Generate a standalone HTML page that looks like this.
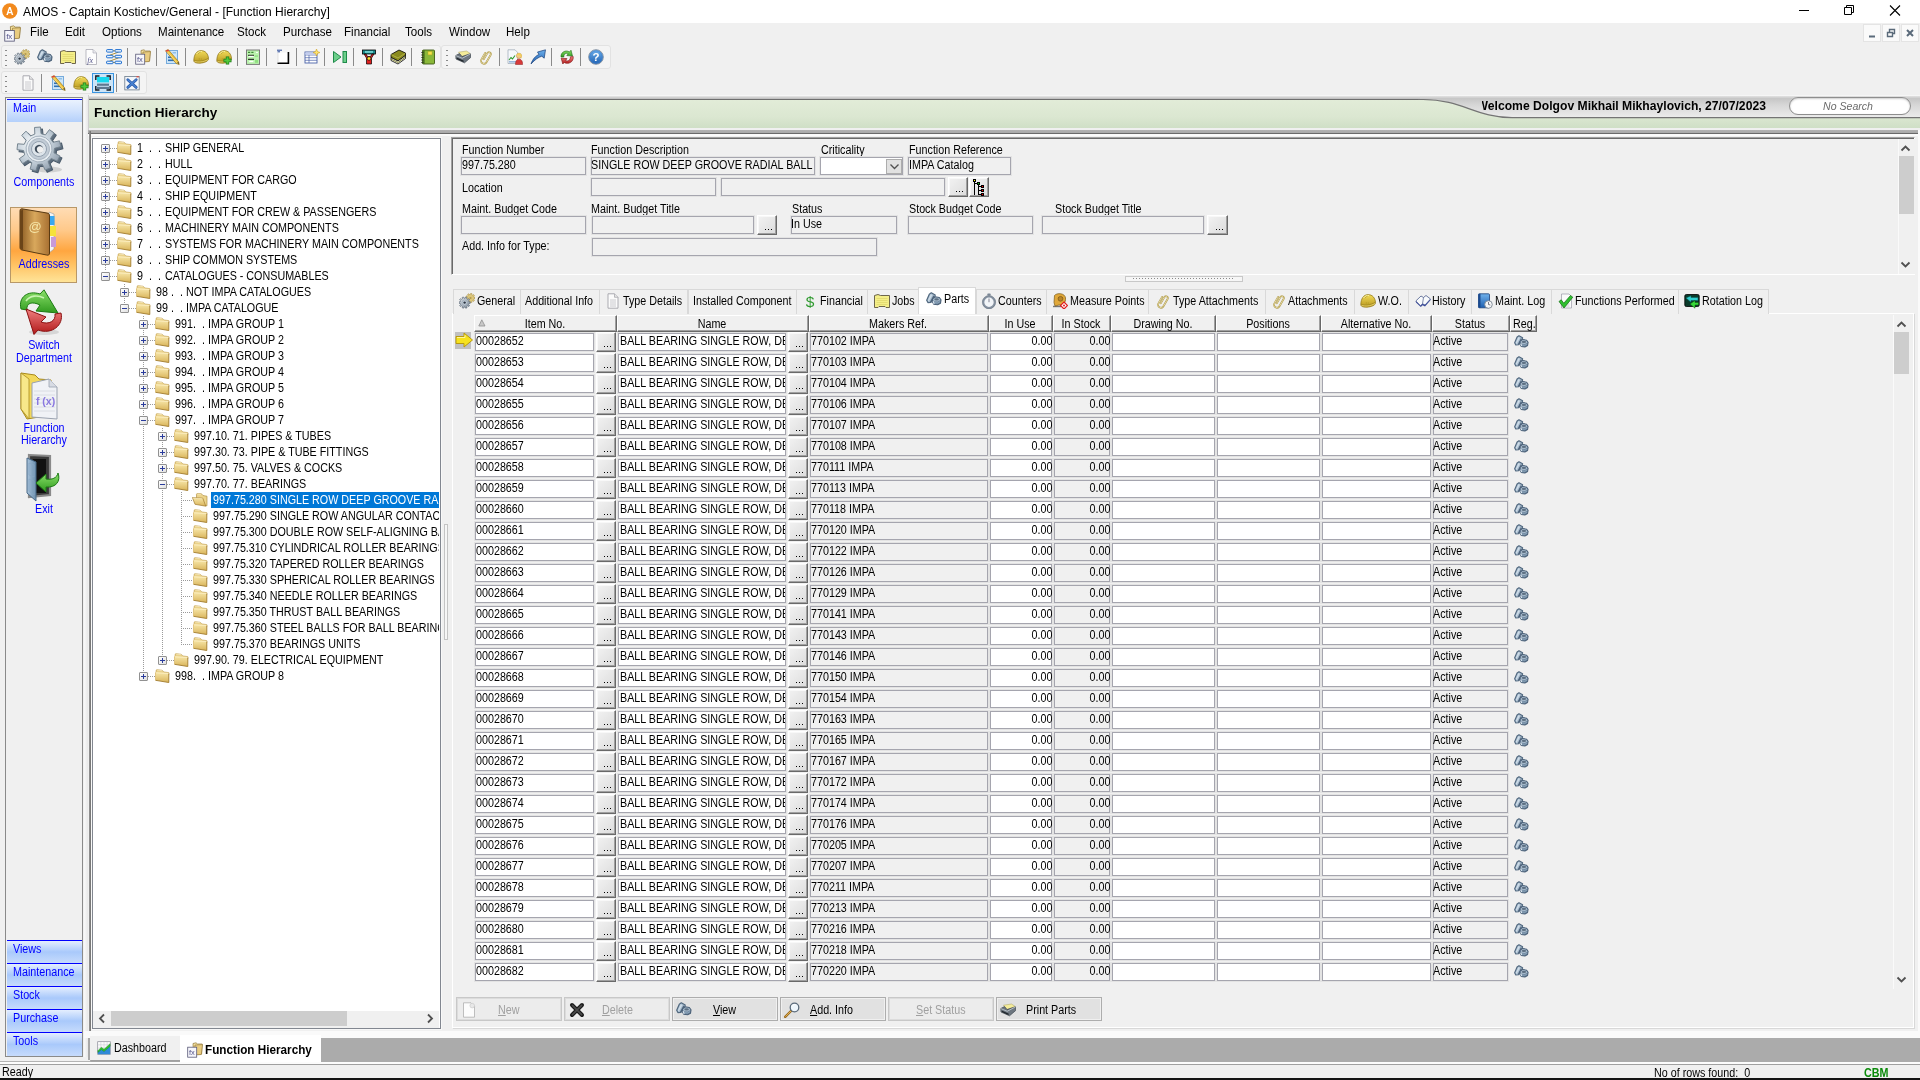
<!DOCTYPE html>
<html><head><meta charset="utf-8"><title>AMOS - Function Hierarchy</title>
<style>
html,body{margin:0;padding:0}
html{width:1920px;height:1080px;overflow:hidden;background:#f0f0f0}
body{will-change:transform;width:1920px;height:1080px;position:relative;overflow:hidden;background:#f0f0f0;font-family:"Liberation Sans",sans-serif;font-size:12px;line-height:14px;color:#000}
div,span,svg{position:absolute;box-sizing:border-box}
.n{display:block;white-space:pre;transform:scaleX(.895);transform-origin:0 0;line-height:14px;height:14px}
.n.r{transform-origin:100% 0;text-align:right}
.n.c{transform-origin:50% 0;text-align:center}
.t{display:block;white-space:pre;line-height:14px;height:14px;transform-origin:0 0}
.blue{color:#0000ff}
.fld{border:1px solid #a5a5ae;background:#f0f0f0;box-shadow:0 0 0 1px #e3e3e3}
.fldw{border:1px solid #a5a5ae;background:#fff;box-shadow:0 0 0 1px #e3e3e3}
.btn3{background:linear-gradient(135deg,#f2f2f2 0%,#dcdcdc 100%);border-top:1px solid #fff;border-left:1px solid #fff;border-right:1px solid #696969;border-bottom:1px solid #696969;box-shadow:inset -1px -1px 0 #a0a0a0,inset 1px 1px 0 #f8f8f8}
.dots{left:auto;right:2px;bottom:4px;width:9px;height:1.5px;background:linear-gradient(90deg,#000 0 1px,transparent 1px 3px,#000 3px 4px,transparent 4px 6px,#000 6px 7px,transparent 7px)}
.hdr{background:#f0f0f0;border-top:1px solid #fff;border-left:1px solid #fff;border-right:1px solid #696969;border-bottom:1px solid #696969;box-shadow:inset -1px -1px 0 #a0a0a0}
.tab{border:1px solid #d9d9d9;border-bottom:none;background:#f0f0f0}
.sbbtn{background:linear-gradient(180deg,#e4eefe 0%,#a9c9fb 50%,#c6dbfc 100%);border-top:1px solid #0000ff}
.pbtn{border:1px solid #adadad;background:#e1e1e1;box-shadow:inset 0 0 0 1px #f0f0f0}
.pbtn.dis{border:1px solid #c8c8c8;background:#ececec;box-shadow:inset 0 0 0 1px #dcdcdc}
.vsep{width:1px;background:#a0a0a0;box-shadow:1px 0 0 #fff}
.tbar{border:1px solid #e2e2e2;border-radius:3px;background:#f4f4f4}
.grip{width:2px;background:repeating-linear-gradient(180deg,#8a8a8a 0 1px,transparent 1px 5px)}
.dotv{width:1px;background:repeating-linear-gradient(180deg,#9a9a9a 0 1px,transparent 1px 2px)}
.doth{height:1px;background:repeating-linear-gradient(90deg,#9a9a9a 0 1px,transparent 1px 2px)}
.pm{width:9px;height:9px;border:1px solid #919191;background:linear-gradient(135deg,#fff,#e0e0e0);border-radius:1px}
.pm:before{content:"";position:absolute;left:1px;top:3px;width:5px;height:1px;background:#2a3c9c}
.pm.plus:after{content:"";position:absolute;left:3px;top:1px;width:1px;height:5px;background:#2a3c9c}

</style></head>
<body>
<svg width="0" height="0" style="position:absolute"><defs>
<linearGradient id="gFold" x1="0" y1="0" x2="0" y2="1"><stop offset="0" stop-color="#f7e6a8"/><stop offset="1" stop-color="#d9b45a"/></linearGradient>
<linearGradient id="gHelm" x1="0" y1="0" x2="0" y2="1"><stop offset="0" stop-color="#f2dc5a"/><stop offset="1" stop-color="#b8961e"/></linearGradient>
<linearGradient id="gNut" x1="0" y1="0" x2="1" y2="1"><stop offset="0" stop-color="#b9c7d6"/><stop offset="1" stop-color="#5f7386"/></linearGradient>
<linearGradient id="gGear" x1="0" y1="0" x2="1" y2="1"><stop offset="0" stop-color="#e4e9ee"/><stop offset="1" stop-color="#7d8b99"/></linearGradient>
<linearGradient id="gBlue" x1="0" y1="0" x2="0" y2="1"><stop offset="0" stop-color="#6fb1ec"/><stop offset="1" stop-color="#1e5fb0"/></linearGradient>
<linearGradient id="gGreen" x1="0" y1="0" x2="0" y2="1"><stop offset="0" stop-color="#8be06a"/><stop offset="1" stop-color="#2f9a1e"/></linearGradient>
<linearGradient id="gRed" x1="0" y1="0" x2="0" y2="1"><stop offset="0" stop-color="#f08080"/><stop offset="1" stop-color="#b01818"/></linearGradient>
<linearGradient id="gBook" x1="0" y1="0" x2="1" y2="0"><stop offset="0" stop-color="#8a5a22"/><stop offset="0.5" stop-color="#d9a85c"/><stop offset="1" stop-color="#a87032"/></linearGradient>
<linearGradient id="gDoor" x1="0" y1="0" x2="1" y2="0"><stop offset="0" stop-color="#a9c4dc"/><stop offset="1" stop-color="#6b8eac"/></linearGradient>
<radialGradient id="gGearB" cx="0.4" cy="0.35" r="0.7"><stop offset="0" stop-color="#fafcfd"/><stop offset="0.6" stop-color="#c2ced8"/><stop offset="1" stop-color="#8e9cab"/></radialGradient>
</defs></svg>
<div class="" style="left:0.0px;top:0.0px;width:1920.0px;height:23.0px;background:#fff"></div>
<svg style="left:2px;top:2px" width="18" height="18" viewBox="0 0 18 18"><circle cx="7.800" cy="9" r="7.700" fill="#f28a1e"/><path d="M4.300 13 L7 5 H8.600 L11.300 13 H9.700 L9.200 11.300 H6.400 L5.900 13Z M6.800 10 H8.800 L7.800 6.900Z" fill="#fff"/></svg>
<span class="t" style="left:23px;top:5px;font-size:12px;transform:scaleX(1.0);color:#000">AMOS - Captain Kostichev/General - [Function Hierarchy]</span>
<svg style="left:1780px;top:0" width="140" height="23" viewBox="0 0 140 23"><path d="M19 10.5 H29" stroke="#000" stroke-width="1"/><path d="M64.5 7.5 H71.5 V14.5 H64.5Z M66.5 7.5 V5.5 H73.5 V12.5 H71.5" fill="none" stroke="#000" stroke-width="1"/><path d="M110 5.5 L120 15.5 M120 5.5 L110 15.5" stroke="#000" stroke-width="1.1"/></svg>
<div class="" style="left:0.0px;top:23.0px;width:1920.0px;height:21.0px;background:#f0f0f0"></div>
<svg style="left:4.0px;top:24.5px" width="17" height="17" viewBox="0 0 16 16"><path d="M6 1.5 L9 .8 L10.5 2 L15.2 2 L14.6 12 L6.5 13Z" fill="url(#gFold)" stroke="#8e7436" stroke-width=".7"/><path d="M8 3 L15.5 2.6 L14.3 12.5 L7.5 13Z" fill="#e9cc80" stroke="#8e7436" stroke-width=".6"/><rect x=".7" y="5.2" width="9" height="10" fill="#f6f6fb" stroke="#5a5a78" stroke-width=".8"/><text x="2" y="13.3" font-family="Liberation Sans" font-size="7.5" fill="#55558a">fx</text></svg>
<span class="t" style="left:30.3px;top:25px;font-size:12px;transform:scaleX(.965);color:#000">File</span>
<span class="t" style="left:65.3px;top:25px;font-size:12px;transform:scaleX(.965);color:#000">Edit</span>
<span class="t" style="left:101.5px;top:25px;font-size:12px;transform:scaleX(.965);color:#000">Options</span>
<span class="t" style="left:157.5px;top:25px;font-size:12px;transform:scaleX(.965);color:#000">Maintenance</span>
<span class="t" style="left:236.8px;top:25px;font-size:12px;transform:scaleX(.965);color:#000">Stock</span>
<span class="t" style="left:283px;top:25px;font-size:12px;transform:scaleX(.965);color:#000">Purchase</span>
<span class="t" style="left:344px;top:25px;font-size:12px;transform:scaleX(.965);color:#000">Financial</span>
<span class="t" style="left:405px;top:25px;font-size:12px;transform:scaleX(.965);color:#000">Tools</span>
<span class="t" style="left:448.5px;top:25px;font-size:12px;transform:scaleX(.965);color:#000">Window</span>
<span class="t" style="left:506px;top:25px;font-size:12px;transform:scaleX(.965);color:#000">Help</span>
<svg style="left:1861.200px;top:24px" width="58" height="18" viewBox="0 0 58 18"><g fill="#fafafa" stroke="#e4e4e4"><rect x="2.5" y=".5" width="17" height="17"/><rect x="21.500" y=".5" width="17" height="17"/><rect x="40.5" y=".5" width="17" height="17"/></g><path d="M8 12.5 H14" stroke="#5a6a7a" stroke-width="2"/><path d="M26.500 8.500 H31.500 V12.500 H26.500Z M28.500 8 V5.500 H33.500 V9.500 H31.500" fill="none" stroke="#5a6a7a" stroke-width="1.4"/><path d="M46 6 L52 12 M52 6 L46 12" stroke="#5a6a7a" stroke-width="2"/></svg>
<div class="tbar" style="left:1.0px;top:44.5px;width:440.0px;height:24.5px;"></div>
<div class="tbar" style="left:441.0px;top:44.5px;width:170.0px;height:24.5px;"></div>
<div class="tbar" style="left:1.0px;top:70.5px;width:146.0px;height:23.5px;"></div>
<div class="grip" style="left:4.5px;top:50.0px;width:2.0px;height:17.0px;"></div>
<div class="grip" style="left:446.0px;top:50.0px;width:2.0px;height:17.0px;"></div>
<div class="grip" style="left:4.5px;top:75.5px;width:2.0px;height:17.0px;"></div>
<svg style="left:14.0px;top:49.0px" width="16" height="16" viewBox="0 0 16 16"><path d="M15.02 4.25 L16.06 4.36 L16.06 5.64 L15.02 5.75 L14.68 6.69 L15.40 7.44 L14.58 8.42 L13.72 7.84 L12.85 8.34 L12.92 9.37 L11.66 9.60 L11.37 8.60 L10.39 8.42 L9.78 9.27 L8.67 8.62 L9.09 7.68 L8.45 6.91 L7.44 7.16 L7.00 5.96 L7.94 5.50 L7.94 4.50 L7.00 4.04 L7.44 2.84 L8.45 3.09 L9.09 2.32 L8.67 1.38 L9.78 0.73 L10.39 1.58 L11.37 1.40 L11.66 0.40 L12.92 0.63 L12.85 1.66 L13.72 2.16 L14.58 1.58 L15.40 2.56 L14.68 3.31Z" fill="#dcc67a" stroke="#a89048" stroke-width=".6" stroke-linejoin="round"/><circle cx="11.500" cy="5" r="1.1" fill="#b49a4c"/><path d="M9.92 8.78 L11.26 8.89 L11.26 10.31 L9.92 10.42 L9.58 11.47 L10.59 12.35 L9.76 13.50 L8.61 12.81 L7.72 13.46 L8.03 14.76 L6.67 15.20 L6.15 13.97 L5.05 13.97 L4.53 15.20 L3.17 14.76 L3.48 13.46 L2.59 12.81 L1.44 13.50 L0.61 12.35 L1.62 11.47 L1.28 10.42 L-0.06 10.31 L-0.06 8.89 L1.28 8.78 L1.62 7.73 L0.61 6.85 L1.44 5.70 L2.59 6.39 L3.48 5.74 L3.17 4.44 L4.53 4.00 L5.05 5.23 L6.15 5.23 L6.67 4.00 L8.03 4.44 L7.72 5.74 L8.61 6.39 L9.76 5.70 L10.59 6.85 L9.58 7.73Z" fill="url(#gGear)" stroke="#5e6c7a" stroke-width=".7" stroke-linejoin="round"/><circle cx="5.600" cy="9.600" r="2.600" fill="#c4ced8" stroke="#8896a4" stroke-width=".5"/><circle cx="5.600" cy="9.600" r="1.200" fill="#2a3440"/></svg>
<svg style="left:37.0px;top:49.0px" width="16" height="16" viewBox="0 0 16 16"><g stroke-linejoin="round"><path d="M5.300 .8 L9.200 3 L8.600 5.600 L4.900 10.400 L1.900 10.600 L.7 8.200 L3.300 2.200Z" fill="#a9bdce" stroke="#51687f" stroke-width="1.2"/><path d="M4.800 2 L2 8.300 L2.600 9.600 L6.300 3.200Z" fill="#cfdde9"/><path d="M7.500 3.200 L8.600 5.600 L4.900 10.400 L4 9.800Z" fill="#4e647c"/><path d="M6.500 7 L9.200 4.900 L13.300 5.500 L15 7.900 L14.500 11.200 L11.600 12.800 L7.800 12.200 L6.300 9.800Z" fill="#6f879f" stroke="#4a6078" stroke-width="1.1"/><path d="M6.900 7.300 L9.300 5.400 L13 6 L14.400 8 L11.600 9.600 L8 9.300Z" fill="#a9bccd"/><ellipse cx="10.600" cy="7.400" rx="2.300" ry="1.150" fill="#5d7083"/><path d="M7.200 9.200 L8.200 11.800" stroke="#dbe6ef" stroke-width="1.300"/><path d="M8.600 10.600 L11.500 11 L14 9.600" stroke="#90a8be" stroke-width=".9" fill="none"/></g></svg>
<svg style="left:60.0px;top:49.0px" width="16" height="16" viewBox="0 0 16 16"><path d="M.5 2.5 L4 1.5 L6.5 2.5 L15.5 2.5 L15.5 14.5 L12 14.5 L11 13.5 L5 13.5 L4 14.5 L.5 14.5Z" fill="#f4ee88" stroke="#5e5640" stroke-width=".9"/><path d="M2.5 5.5H13.5M2.5 7.5H13.5M2.5 9.5H13.5M2.5 11.5H13.5" stroke="#dcd468" stroke-width=".7"/></svg>
<svg style="left:83.0px;top:49.0px" width="16" height="16" viewBox="0 0 16 16"><path d="M3 .5 H10 L13.5 4 V15.5 H3Z" fill="#fdfdfd" stroke="#a9a9b4" stroke-width=".8"/><path d="M10 .5 V4 H13.5" fill="#e8e8ee" stroke="#a9a9b4" stroke-width=".6"/><text x="4.2" y="13.5" font-family="Liberation Serif" font-size="8" font-style="italic" fill="#55558a">fx</text></svg>
<svg style="left:106.0px;top:49.0px" width="16" height="16" viewBox="0 0 16 16"><path d="M7 1.8H9.100M7 7.600H9.100M7 13.500H9.100M12.500 3.100 L3.500 6.300M12.500 8.900 L3.500 12.200" stroke="#a88420" stroke-width=".9" fill="none"/><g fill="#eaf4fe" stroke="#1f6fd0" stroke-width="1"><rect x=".6" y=".6" width="6.400" height="2.500" rx=".7"/><rect x="9.100" y=".6" width="6.400" height="2.500" rx=".7"/><rect x=".6" y="6.300" width="6.400" height="2.500" rx=".7"/><rect x="9.100" y="6.300" width="6.400" height="2.500" rx=".7"/><rect x=".6" y="12.200" width="6.400" height="2.500" rx=".7"/><rect x="9.100" y="12.200" width="6.400" height="2.500" rx=".7"/></g></svg>
<div class="" style="left:127.0px;top:48.0px;width:1.0px;height:18.0px;background:#8a8a8a"></div>
<svg style="left:135.0px;top:49.0px" width="16" height="16" viewBox="0 0 16 16"><path d="M6 1.5 L9 .8 L10.5 2 L15.2 2 L14.6 12 L6.5 13Z" fill="url(#gFold)" stroke="#8e7436" stroke-width=".7"/><path d="M8 3 L15.5 2.6 L14.3 12.5 L7.5 13Z" fill="#e9cc80" stroke="#8e7436" stroke-width=".6"/><rect x=".7" y="5.2" width="9" height="10" fill="#f6f6fb" stroke="#5a5a78" stroke-width=".8"/><text x="2" y="13.3" font-family="Liberation Sans" font-size="7.5" fill="#55558a">fx</text></svg>
<div class="" style="left:156.0px;top:48.0px;width:1.0px;height:18.0px;background:#8a8a8a"></div>
<svg style="left:164.0px;top:49.0px" width="16" height="16" viewBox="0 0 16 16"><rect x="2.5" y="1.5" width="11" height="13" fill="#cfe6f8" stroke="#5b9bd5" stroke-width=".8"/><rect x="4" y="7.5" width="5" height="1.6" fill="#2f6fb0"/><rect x="4" y="10.5" width="7" height="1.6" fill="#2f6fb0"/><rect x="8.5" y="3" width="3.5" height="1.5" fill="#8fc0e8"/><path d="M1.5 1.8 L4.2 .6 L14.5 12.6 L15.2 15.5 L12.2 14.5Z" fill="#f0c43c" stroke="#8a6a18" stroke-width=".6"/><path d="M1.5 1.8 L4.2 .6 L5.2 1.8 L2.5 3Z" fill="#e0403a"/><path d="M13.2 13.6 L15.2 15.5 L14.3 12.8Z" fill="#3a3a3a"/><path d="M3 2.4 L13 13.8" stroke="#fbe28a" stroke-width=".8"/></svg>
<div class="" style="left:185.0px;top:48.0px;width:1.0px;height:18.0px;background:#8a8a8a"></div>
<svg style="left:193.0px;top:49.0px" width="16" height="16" viewBox="0 0 16 16"><path d="M.8 11.800 C.8 6 3.500 1.600 8 1.600 C12.500 1.600 15.200 5 15.500 9.500 C15.600 11.500 13.500 13.200 8.500 14 C4 14.600 .8 13.600 .8 11.800Z" fill="url(#gHelm)" stroke="#8a7014" stroke-width=".7"/><path d="M1.200 11.300 C4.500 12.800 10.500 12.200 15.300 9.300" stroke="#97801c" stroke-width=".7" fill="none"/><path d="M1.500 12.300 C5 13.600 10.500 13.200 15 10.600" stroke="#f6ea8c" stroke-width=".6" fill="none"/><path d="M4.800 4.800 L8 2.400" stroke="#a8901e" stroke-width=".7"/><path d="M3.500 5 C5 3 7 2.300 9 2.400" stroke="#fbf3a8" stroke-width=".9" fill="none"/><path d="M6.300 9 V11.800 M8.300 9.200 V12" stroke="#b09a24" stroke-width=".6"/></svg>
<svg style="left:216.0px;top:49.0px" width="16" height="16" viewBox="0 0 16 16"><path d="M.8 11.800 C.8 6 3.500 1.600 8 1.600 C12.500 1.600 15.200 5 15.500 9.500 C15.600 11.500 13.500 13.200 8.500 14 C4 14.600 .8 13.600 .8 11.800Z" fill="url(#gHelm)" stroke="#8a7014" stroke-width=".7"/><path d="M1.200 11.300 C4.500 12.800 10.500 12.200 15.300 9.300" stroke="#97801c" stroke-width=".7" fill="none"/><path d="M1.500 12.300 C5 13.600 10.500 13.200 15 10.600" stroke="#f6ea8c" stroke-width=".6" fill="none"/><path d="M4.800 4.800 L8 2.400" stroke="#a8901e" stroke-width=".7"/><path d="M3.500 5 C5 3 7 2.300 9 2.400" stroke="#fbf3a8" stroke-width=".9" fill="none"/><path d="M6.300 9 V11.800 M8.300 9.200 V12" stroke="#b09a24" stroke-width=".6"/><path d="M11.5 7.5V15.5M7.5 11.5H15.5" stroke="#1d7a16" stroke-width="3.4"/><path d="M11.5 8.2V14.8M8.2 11.5H14.8" stroke="#53c93c" stroke-width="2"/></svg>
<div class="" style="left:237.0px;top:48.0px;width:1.0px;height:18.0px;background:#8a8a8a"></div>
<svg style="left:245.0px;top:49.0px" width="16" height="16" viewBox="0 0 16 16"><rect x="1.500" y="1" width="13" height="14.400" fill="#bbf3ae" stroke="#7a7a7a" stroke-width="1"/><rect x="3" y="2.800" width="2.200" height="1.200" fill="#3c8a36"/><rect x="6.300" y="2.800" width="2.200" height="1.200" fill="#3c8a36"/><rect x="11" y="3" width="2" height=".9" fill="#fff"/><rect x="3" y="5.800" width="6" height="1" fill="#101010"/><rect x="3.600" y="6.800" width="5" height="1.200" fill="#fff"/><rect x="9.800" y="6.400" width="3.200" height="1.400" fill="#8fe080"/><rect x="3" y="9.800" width="6" height="1" fill="#101010"/><rect x="4.300" y="11.800" width="4" height="1.300" fill="#fff"/><rect x="10" y="10.800" width="3" height="3" fill="#8fe080"/></svg>
<div class="" style="left:266.0px;top:48.0px;width:1.0px;height:18.0px;background:#8a8a8a"></div>
<svg style="left:275.0px;top:49.0px" width="16" height="16" viewBox="0 0 16 16"><path d="M3 3.5 H13 V14 H3Z" fill="#fff"/><path d="M2.5 14.2 H13.4 V3" stroke="#000" stroke-width="1.6" fill="none"/><path d="M3 3.5V14" stroke="#d0d0d0" stroke-width=".6"/><path d="M2 1.2 H7 M2.5 2.8 H5" stroke="#2a4a9a" stroke-width="1"/></svg>
<div class="" style="left:295.5px;top:48.0px;width:1.0px;height:18.0px;background:#8a8a8a"></div>
<svg style="left:304.0px;top:49.0px" width="16" height="16" viewBox="0 0 16 16"><rect x="1" y="3" width="12" height="11" fill="#fff" stroke="#4a62a8" stroke-width=".9"/><path d="M1 6H13M1 8.7H13M1 11.3H13M5 6V14" stroke="#4a62a8" stroke-width=".7"/><rect x="1.4" y="3.4" width="11.2" height="2.4" fill="#c3cdee"/><path d="M12.5 0 L13.5 2.5 L16 3.5 L13.5 4.5 L12.5 7 L11.5 4.5 L9 3.5 L11.5 2.5Z" fill="#ffe36a" stroke="#c89a18" stroke-width=".5"/></svg>
<div class="" style="left:324.0px;top:48.0px;width:1.0px;height:18.0px;background:#8a8a8a"></div>
<svg style="left:331.5px;top:49.0px" width="16" height="16" viewBox="0 0 16 16"><path d="M1.5 2.5 L9 8 L1.5 13.5Z" fill="#6ccf8a" stroke="#1f8a4a" stroke-width="1"/><rect x="11" y="2.5" width="3.5" height="11" fill="#6ccf8a" stroke="#1f8a4a" stroke-width="1"/></svg>
<div class="" style="left:353.0px;top:48.0px;width:1.0px;height:18.0px;background:#8a8a8a"></div>
<svg style="left:361.0px;top:49.0px" width="16" height="16" viewBox="0 0 16 16"><rect x="1.5" y="1" width="13" height="4" fill="#1a8a8a" stroke="#000" stroke-width=".8"/><rect x="4" y="2.2" width="8" height="1.5" fill="#7fe0e0"/><path d="M3 5 L5.5 9 L5.5 15 L10.5 15 L10.5 9 L13 5 L11 5 L9.5 7.5 L6.5 7.5 L5 5Z" fill="#e02020" stroke="#000" stroke-width=".7"/><circle cx="8" cy="9.5" r="1.8" fill="#ffe020" stroke="#000" stroke-width=".6"/></svg>
<div class="" style="left:382.0px;top:48.0px;width:1.0px;height:18.0px;background:#8a8a8a"></div>
<svg style="left:390.0px;top:49.0px" width="16" height="16" viewBox="0 0 16 16"><path d="M1 5.5 L9 1 L15.5 4 L15.5 6.5 L8 12 L1 8.5Z" fill="#8a8a1e" stroke="#000" stroke-width=".8"/><path d="M1 8.5 L8 12 L15.5 6.5 L15.5 9.5 L8 15 L1 11.5Z" fill="#fdfdf2" stroke="#000" stroke-width=".8"/><path d="M1 10 L8 13.5 L15.5 8" stroke="#6a6a10" stroke-width=".8" fill="none"/><path d="M1 5.5 L8 9 L15.5 4" stroke="#c8c860" stroke-width=".6" fill="none"/></svg>
<div class="" style="left:411.0px;top:48.0px;width:1.0px;height:18.0px;background:#8a8a8a"></div>
<svg style="left:419.5px;top:49.0px" width="16" height="16" viewBox="0 0 16 16"><rect x="2.5" y="1" width="12" height="14" rx="1" fill="#8ab83a" stroke="#3e5a14" stroke-width=".9"/><rect x="2.5" y="1" width="2.2" height="14" fill="#4e7420"/><rect x="8" y="2.5" width="4" height="3.4" fill="#f3e24a" stroke="#b8a020" stroke-width=".4"/><path d="M1.2 3.5H3.5M1.2 6H3.5M1.2 8.5H3.5M1.2 11H3.5M1.2 13.5H3.5" stroke="#222" stroke-width=".7"/></svg>
<svg style="left:455.0px;top:49.0px" width="16" height="16" viewBox="0 0 16 16"><path d="M3.500 3.200 L11.500 2 L15.300 4.500 L7 7.600Z" fill="#f4ec9a" stroke="#a8a060" stroke-width=".5"/><path d="M.8 6.500 L4.500 4.600 L7 7.600 L15.400 4.800 L15.700 8.500 L9.500 13.800 L1 10Z" fill="#6e7780" stroke="#3e464e" stroke-width=".7" stroke-linejoin="round"/><path d="M.9 6.600 L7.200 9.300 L15.400 4.900" stroke="#c8d0d8" stroke-width=".8" fill="none"/><path d="M2 9.400 L8.600 12.400" stroke="#20262c" stroke-width="1.200"/></svg>
<svg style="left:478.0px;top:49.0px" width="16" height="16" viewBox="0 0 16 16"><g transform="rotate(30 8 8)"><path d="M7.200 11.200 V4 A1.900 1.900 0 0 1 11 4 V12.300 A2.900 2.900 0 0 1 5.200 12.300 V4.800" fill="none" stroke="#a8923e" stroke-width="1.700" stroke-linecap="round"/><path d="M7.200 11.200 V4 A1.900 1.900 0 0 1 11 4 V12.300 A2.900 2.900 0 0 1 5.200 12.300 V4.800" fill="none" stroke="#f4ecc0" stroke-width=".7" stroke-linecap="round"/></g></svg>
<div class="" style="left:499.0px;top:48.0px;width:1.0px;height:18.0px;background:#8a8a8a"></div>
<svg style="left:507.0px;top:49.0px" width="16" height="16" viewBox="0 0 16 16"><path d="M1 .8 H8 L10.5 3.3 V14.5 H1Z" fill="#f6f8fb" stroke="#9aa6b4" stroke-width=".7"/><path d="M2 11 L4 8.5 L5.5 10 L8 6.5" stroke="#2f9a2f" stroke-width="1.1" fill="none"/><rect x="2" y="12" width="7" height="1.6" fill="#9ab8dc"/><circle cx="12" cy="6.8" r="2.6" fill="#f4c88a" stroke="#b8863a" stroke-width=".5"/><path d="M9.6 6.5 C9.6 3.4 14.6 3.4 14.6 6.8 L14.8 10 L13.6 7 C12.5 6 11 6 9.6 6.5Z" fill="#f2d056"/><path d="M8.5 15.5 C8.5 11.5 10 10.2 12 10.2 C14 10.2 15.6 11.5 15.6 15.5Z" fill="#d83a3a" stroke="#8a1c1c" stroke-width=".5"/></svg>
<svg style="left:530.0px;top:49.0px" width="16" height="16" viewBox="0 0 16 16"><path d="M1 15 C3 9.5 5.5 7 9 5.5 L7.5 3 L15.5 .8 L14.2 9.2 L11.8 7.2 C8.5 8.2 5 10.5 1 15Z" fill="url(#gBlue)" stroke="#1a3f78" stroke-width=".7"/></svg>
<div class="" style="left:551.0px;top:48.0px;width:1.0px;height:18.0px;background:#8a8a8a"></div>
<svg style="left:558.5px;top:49.0px" width="16" height="16" viewBox="0 0 16 16"><path d="M2 8 C1.5 3 7 .5 10.5 3 L12 1.2 L13.5 7 L7.8 6.6 L9.2 4.8 C7 3.6 4.6 5 4.8 8Z" fill="url(#gGreen)" stroke="#1d6a14" stroke-width=".6"/><path d="M14.2 7.5 C15 13 9 16 5.2 13.4 L3.8 15 L2.2 9.2 L8 9.6 L6.6 11.4 C9 12.8 11.6 11 11.4 7.8Z" fill="url(#gRed)" stroke="#7a1010" stroke-width=".6"/></svg>
<div class="" style="left:580.0px;top:48.0px;width:1.0px;height:18.0px;background:#8a8a8a"></div>
<svg style="left:588.0px;top:49.0px" width="16" height="16" viewBox="0 0 16 16"><circle cx="8" cy="8" r="7.3" fill="url(#gBlue)" stroke="#8a96a4" stroke-width="1"/><circle cx="8" cy="8" r="6.2" fill="none" stroke="#3a7fd0" stroke-width=".6"/><text x="8" y="12.2" text-anchor="middle" font-family="Liberation Sans" font-weight="bold" font-size="11.5" fill="#fff">?</text></svg>
<div class="" style="left:92.0px;top:72.5px;width:22.0px;height:20.5px;background:#cce4f7;border:1px solid #3a94e0"></div>
<svg style="left:20.0px;top:74.5px" width="16" height="16" viewBox="0 0 16 16"><path d="M3 .8 H9.5 L13 4.3 V15.2 H3Z" fill="#fbfbfb" stroke="#a2a2a8" stroke-width=".9"/><path d="M9.5 .8 V4.3 H13" fill="#e4e4e4" stroke="#a2a2a8" stroke-width=".7"/><path d="M5 7H11M5 9H11M5 11H11M5 13H11" stroke="#c4c4c8" stroke-width=".9"/></svg>
<div class="" style="left:41.0px;top:74.0px;width:1.0px;height:18.0px;background:#8a8a8a"></div>
<svg style="left:49.5px;top:74.5px" width="16" height="16" viewBox="0 0 16 16"><rect x="2.5" y="1.5" width="11" height="13" fill="#cfe6f8" stroke="#5b9bd5" stroke-width=".8"/><rect x="4" y="7.5" width="5" height="1.6" fill="#2f6fb0"/><rect x="4" y="10.5" width="7" height="1.6" fill="#2f6fb0"/><rect x="8.5" y="3" width="3.5" height="1.5" fill="#8fc0e8"/><path d="M1.5 1.8 L4.2 .6 L14.5 12.6 L15.2 15.5 L12.2 14.5Z" fill="#f0c43c" stroke="#8a6a18" stroke-width=".6"/><path d="M1.5 1.8 L4.2 .6 L5.2 1.8 L2.5 3Z" fill="#e0403a"/><path d="M13.2 13.6 L15.2 15.5 L14.3 12.8Z" fill="#3a3a3a"/><path d="M3 2.4 L13 13.8" stroke="#fbe28a" stroke-width=".8"/></svg>
<svg style="left:72.5px;top:74.5px" width="16" height="16" viewBox="0 0 16 16"><path d="M.8 11.800 C.8 6 3.500 1.600 8 1.600 C12.500 1.600 15.200 5 15.500 9.500 C15.600 11.500 13.500 13.200 8.500 14 C4 14.600 .8 13.600 .8 11.800Z" fill="url(#gHelm)" stroke="#8a7014" stroke-width=".7"/><path d="M1.200 11.300 C4.500 12.800 10.500 12.200 15.300 9.300" stroke="#97801c" stroke-width=".7" fill="none"/><path d="M1.500 12.300 C5 13.600 10.500 13.200 15 10.600" stroke="#f6ea8c" stroke-width=".6" fill="none"/><path d="M4.800 4.800 L8 2.400" stroke="#a8901e" stroke-width=".7"/><path d="M3.500 5 C5 3 7 2.300 9 2.400" stroke="#fbf3a8" stroke-width=".9" fill="none"/><path d="M6.300 9 V11.800 M8.300 9.200 V12" stroke="#b09a24" stroke-width=".6"/><path d="M11.5 7.5V15.5M7.5 11.5H15.5" stroke="#1d7a16" stroke-width="3.4"/><path d="M11.5 8.2V14.8M8.2 11.5H14.8" stroke="#53c93c" stroke-width="2"/></svg>
<svg style="left:95.0px;top:74.5px" width="16" height="16" viewBox="0 0 16 16"><rect x="2" y="2" width="12" height="5.4" fill="#18d8ee"/><rect x="2" y="8.6" width="12" height="2.2" fill="#5e7890"/><rect x="2" y="11.8" width="12" height="2.2" fill="#5e7890"/><path d="M.8 5 V1 H4.5 M11.5 1 H15.2 V5 M15.2 11 V15 H11.5 M4.5 15 H.8 V11" stroke="#101820" stroke-width="1.4" fill="none"/></svg>
<div class="" style="left:116.0px;top:74.0px;width:1.0px;height:18.0px;background:#8a8a8a"></div>
<svg style="left:124.0px;top:74.5px" width="16" height="16" viewBox="0 0 16 16"><rect x=".8" y="1.5" width="14.4" height="13.4" fill="#f4f7fa" stroke="#6a7a8a" stroke-width=".8"/><path d="M3.8 4.8 L12.2 12.4 M12.2 4.8 L3.8 12.4" stroke="#2a5aa8" stroke-width="2.8" stroke-linecap="round"/><path d="M3.8 4.8 L12.2 12.4 M12.2 4.8 L3.8 12.4" stroke="#4a86d8" stroke-width="1.2" stroke-linecap="round"/><rect x="12.4" y="1.2" width="2.4" height="1.2" fill="#e04a3a"/></svg>
<div class="" style="left:5.0px;top:97.0px;width:78.0px;height:960.0px;border:1px solid #8a8a8a;background:#f0f0f0"></div>
<div class="sbbtn" style="left:7.0px;top:99.0px;width:75.0px;height:23.0px;background:linear-gradient(180deg,#eaf2fe 0%,#d4e4fd 45%,#b4d0fb 100%)"></div>
<span class="n" style="left:13.0px;top:101px;color:#0000ff">Main</span>
<svg style="left:15px;top:124px" width="50" height="52" viewBox="0 0 50 52"><ellipse cx="33" cy="45.500" rx="14" ry="3" fill="#b8b8b8" opacity=".55"/><g transform="rotate(-14 24 25)"><path d="M40.68 24.38 L47.30 24.54 L47.30 30.46 L40.68 30.62 L39.13 34.87 L44.10 39.24 L40.30 43.78 L35.13 39.65 L31.21 41.91 L32.20 48.45 L26.37 49.48 L25.07 42.99 L20.61 42.21 L17.16 47.86 L12.04 44.90 L15.21 39.09 L12.30 35.62 L6.03 37.74 L4.00 32.17 L10.17 29.76 L10.17 25.24 L4.00 22.83 L6.03 17.26 L12.30 19.38 L15.21 15.91 L12.04 10.10 L17.16 7.14 L20.61 12.79 L25.07 12.01 L26.37 5.52 L32.20 6.55 L31.21 13.09 L35.13 15.35 L40.30 11.22 L44.10 15.76 L39.13 20.13Z" fill="#5e6e7e" stroke="#4a5a6a" stroke-width="1" stroke-linejoin="round"/><path d="M39.18 21.88 L45.80 22.04 L45.80 27.96 L39.18 28.12 L37.63 32.37 L42.60 36.74 L38.80 41.28 L33.63 37.15 L29.71 39.41 L30.70 45.95 L24.87 46.98 L23.57 40.49 L19.11 39.71 L15.66 45.36 L10.54 42.40 L13.71 36.59 L10.80 33.12 L4.53 35.24 L2.50 29.67 L8.67 27.26 L8.67 22.74 L2.50 20.33 L4.53 14.76 L10.80 16.88 L13.71 13.41 L10.54 7.60 L15.66 4.64 L19.11 10.29 L23.57 9.51 L24.87 3.02 L30.70 4.05 L29.71 10.59 L33.63 12.85 L38.80 8.72 L42.60 13.26 L37.63 17.63Z" fill="url(#gGearB)" stroke="#74848f" stroke-width=".9" stroke-linejoin="round"/><circle cx="24" cy="25" r="13" fill="#e6ecf1" stroke="#9aa8b4" stroke-width=".8"/><circle cx="24" cy="25" r="10.500" fill="#c2ccd6" stroke="#a4b0bc" stroke-width=".8"/><circle cx="24" cy="25" r="7.500" fill="#dde4ea" stroke="#8a98a6" stroke-width=".8"/><circle cx="24" cy="25" r="4.200" fill="#3e4c5a"/><circle cx="25" cy="25.800" r="3.300" fill="#f0f0f0"/></g></svg>
<span class="n c" style="left:-16.1px;width:120px;top:175px;color:#0000ff">Components</span>
<div class="" style="left:10.0px;top:207.0px;width:67.0px;height:76.0px;border:1px solid #b89868;background:linear-gradient(180deg,#ffdcb4 0%,#ffc98a 30%,#ffa640 58%,#ffc060 75%,#ffe498 100%)"></div>
<svg style="left:18px;top:207px" width="40" height="50" viewBox="0 0 40 50"><path d="M31 5 L36 7 L36 42 L31 46Z" fill="#f4f4f4" stroke="#999" stroke-width=".6"/><rect x="31" y="9" width="5.5" height="9" fill="#3aa8f0"/><rect x="32" y="19" width="6" height="10" fill="#f6e23a"/><rect x="33" y="30" width="5" height="10" fill="#c89ad8"/><path d="M2 4 C2 2 3 1.5 5 2 L29 6 C31 6.4 31.5 7 31.5 9 L31.500 46 C31.500 48 30.5 48.5 28.500 48 L4 43 C2.500 42.600 2 42 2 40Z" fill="url(#gBook)" stroke="#5a3a12" stroke-width="1"/><path d="M2 4 L5 2.500 L5 43 L2 41Z" fill="#6a4418"/><text x="17" y="24" text-anchor="middle" font-family="Liberation Sans" font-size="13" fill="#f6e6a8">@</text></svg>
<span class="n c" style="left:-16.5px;width:120px;top:257px;color:#0000ff">Addresses</span>
<svg style="left:18px;top:289px" width="46" height="48" viewBox="0 0 46 48"><ellipse cx="26" cy="43" rx="15" ry="3" fill="#c4c4c4" opacity=".6"/><path d="M3 20 C0 8 10 1 22 5 L26 .8 L40 24 L18 22 L22 16 C14 12 8 14 9 21Z" fill="url(#gGreen)" stroke="#1d7a14" stroke-width="1"/><path d="M43 24 C46 36 34 46 20 41 L16 45.500 L8 20 L28 28 L23 33 C31 36 38 32 37 25Z" fill="url(#gRed)" stroke="#8a1010" stroke-width="1"/><path d="M8 12 C12 6 20 6 26 9" stroke="#c8f4b0" stroke-width="1.6" fill="none"/></svg>
<span class="n c" style="left:-16.1px;width:120px;top:338px;color:#0000ff">Switch</span>
<span class="n c" style="left:-16.1px;width:120px;top:351px;color:#0000ff">Department</span>
<svg style="left:19px;top:371px" width="42" height="50" viewBox="0 0 42 50"><path d="M2 2 L16 4 L20 8 L32 9 L32 44 L8 48 L2 38Z" fill="#f2d85a" stroke="#a88a1e" stroke-width="1"/><path d="M2 2 L10 8 L10 48 L2 38Z" fill="#f8e88a" stroke="#a88a1e" stroke-width=".8"/><path d="M13 12 L30 8 L38 16 L38 48 L13 46Z" fill="#f0f2f6" stroke="#9aa2b0" stroke-width="1"/><path d="M30 8 L30 16 L38 16" fill="#d8dce4" stroke="#9aa2b0" stroke-width=".8"/><path d="M15 20H36M15 24H36M15 28H36M15 32H36M15 36H36M15 40H36" stroke="#d4d8e0" stroke-width=".8"/><text x="26.500" y="34" text-anchor="middle" font-family="Liberation Sans" font-weight="bold" font-size="10.5" fill="#8a78e0">f (x)</text></svg>
<span class="n c" style="left:-16.1px;width:120px;top:421px;color:#0000ff">Function</span>
<span class="n c" style="left:-16.1px;width:120px;top:433px;color:#0000ff">Hierarchy</span>
<svg style="left:24px;top:453px" width="40" height="50" viewBox="0 0 40 50"><path d="M5 2 L26 3 L26 42 L5 44Z" fill="#3a3a3a" stroke="#8a8a8a" stroke-width="2.2"/><path d="M9 6 L22 6 L22 40 L9 40Z" fill="#111"/><path d="M3 5 L12 9 L12 48 L3 40Z" fill="url(#gDoor)" stroke="#4a6a88" stroke-width="1"/><path d="M5 10 L10 12 L10 24 L5 22Z M5 26 L10 28 L10 42 L5 38Z" fill="none" stroke="#88a8c4" stroke-width=".7"/><path d="M12 30 L22 21 L22 26 C28 27 33 25 34 20 C37 28 32 35 22 34 L22 39Z" fill="url(#gGreen)" stroke="#1d7a14" stroke-width="1"/></svg>
<span class="n c" style="left:-16.3px;width:120px;top:502px;color:#0000ff">Exit</span>
<div class="sbbtn" style="left:7.0px;top:940.0px;width:75.0px;height:23.0px;"></div>
<span class="n" style="left:13.0px;top:942px;color:#0000ff">Views</span>
<div class="sbbtn" style="left:7.0px;top:963.0px;width:75.0px;height:23.0px;"></div>
<span class="n" style="left:13.0px;top:965px;color:#0000ff">Maintenance</span>
<div class="sbbtn" style="left:7.0px;top:986.0px;width:75.0px;height:23.0px;"></div>
<span class="n" style="left:13.0px;top:988px;color:#0000ff">Stock</span>
<div class="sbbtn" style="left:7.0px;top:1009.0px;width:75.0px;height:23.0px;"></div>
<span class="n" style="left:13.0px;top:1011px;color:#0000ff">Purchase</span>
<div class="sbbtn" style="left:7.0px;top:1032.0px;width:75.0px;height:24.0px;"></div>
<span class="n" style="left:13.0px;top:1034px;color:#0000ff">Tools</span>
<div class="" style="left:89.0px;top:95.0px;width:1831.0px;height:5.0px;background:linear-gradient(180deg,#f6f6f6 0 20%,#e0e0e0 20% 40%,#d0d0d0 40% 60%,#c2c2c2 60% 80%,#6e6e6e 80% 100%)"></div>
<div class="" style="left:88.0px;top:95.0px;width:1.0px;height:36.0px;background:#cfcfcf"></div>
<div class="" style="left:89.0px;top:100.0px;width:1831.0px;height:28.0px;background:linear-gradient(180deg,#e2ecd8 0%,#dbe7d1 60%,#cfdfc6 100%)"></div>
<span class="t" style="left:94.400px;top:106px;font-size:13px;font-weight:bold;transform:scaleX(1.04)">Function Hierarchy</span>
<svg style="left:1400px;top:95px" width="520" height="25" viewBox="0 0 520 25"><defs><linearGradient id="gSil" x1="0" y1="0" x2="0" y2="1"><stop offset="0" stop-color="#e2e2e2"/><stop offset=".12" stop-color="#c6c6c6"/><stop offset=".4" stop-color="#d6d6d6"/><stop offset="1" stop-color="#ececec"/></linearGradient></defs><path d="M20 1 H520 V22.600 H112 C76 22.600 62 4.500 23 4.500 H20Z" fill="url(#gSil)"/><path d="M18 4.500 H23 C62 4.500 76 22.600 112 22.600 H520" fill="none" stroke="#747474" stroke-width="1.2"/></svg>
<div class="" style="left:1482.0px;top:98.0px;width:284.0px;height:16.0px;overflow:hidden"><span class="t" style="right:0;top:1.1px;font-weight:bold;font-size:12px;transform:scaleX(1.012);transform-origin:100% 0">Welcome Dolgov Mikhail Mikhaylovich, 27/07/2023</span></div>
<div class="" style="left:1789.0px;top:97.0px;width:121.5px;height:18.0px;border:1px solid #8e8e8e;border-radius:9px;background:#fff;box-shadow:inset 0 1px 2px #ccc"></div>
<span class="t c" style="left:1788px;width:120px;top:99px;text-align:center;font-style:italic;font-size:11px;color:#6a6a6a;transform:scaleX(.96);transform-origin:50% 0">No Search</span>
<div class="" style="left:88.0px;top:130.0px;width:1831.0px;height:4.0px;background:linear-gradient(180deg,#b2b2b2 0%,#a9a9a9 72%,#696969 76%,#696969 100%)"></div>
<div class="" style="left:88.0px;top:134.0px;width:1831.0px;height:1.5px;background:#fbfbfb"></div>
<div class="" style="left:84.0px;top:99.0px;width:4.0px;height:958.0px;background:linear-gradient(90deg,#fafafa,#e8e8e8)"></div>
<div class="" style="left:88.5px;top:130.5px;width:2.0px;height:903.0px;background:linear-gradient(90deg,#9a9a9a,#6e6e6e)"></div>
<div class="" style="left:1918.0px;top:130.0px;width:2.0px;height:930.0px;background:#fafafa"></div>
<div class="" style="left:92.0px;top:138.0px;width:349.0px;height:891.0px;border:1px solid #828790;background:#fff;box-shadow:0 0 0 1px #f8f8f8"></div>
<div style="left:93px;top:138px;width:346px;height:872px;overflow:hidden">
<div class="dotv" style="left:12.0px;top:15.0px;width:1.0px;height:118.0px;"></div>
<div class="dotv" style="left:31.0px;top:146.0px;width:1.0px;height:19.0px;"></div>
<div class="dotv" style="left:50.0px;top:178.0px;width:1.0px;height:355.0px;"></div>
<div class="dotv" style="left:69.0px;top:290.0px;width:1.0px;height:227.0px;"></div>
<div class="dotv" style="left:88.0px;top:354.0px;width:1.0px;height:152.0px;"></div>
<div class="doth" style="left:17.0px;top:10.0px;width:7.0px;height:1.0px;"></div>
<div class="pm plus" style="left:8.0px;top:6.0px;width:9.0px;height:9.0px;"></div>
<svg style="left:23.5px;top:3.0px" width="16" height="14" viewBox="0 0 16 14"><path d="M1 1.3 L2 .5 L7 1.2 L9 2.9 L13.800 3.600 L13.800 6 L1 5Z" fill="#ead28a" stroke="#b8923e" stroke-width=".5"/><path d="M2.200 1 L6.800 1.600" stroke="#fff6d8" stroke-width=".6"/><path d="M.5 3.400 L13.800 4.200 L13.800 13.500 L.5 11.300Z" fill="url(#gFold)"/><path d="M13.800 4.200 L13.800 13.500 L.5 11.300" fill="none" stroke="#a07a2c" stroke-width=".9"/><path d="M.5 3.700 L13.500 4.500" stroke="#fff4cf" stroke-width=".7"/><path d="M.5 3.400 L.5 11.300" stroke="#d4ad55" stroke-width=".6"/></svg>
<span class="n" style="left:43.8px;top:3px">1</span>
<span class="n" style="left:55.5px;top:3px">.</span>
<span class="n" style="left:64.9px;top:3px">.</span>
<span class="n" style="left:71.9px;top:3px">SHIP GENERAL</span>
<div class="doth" style="left:17.0px;top:26.0px;width:7.0px;height:1.0px;"></div>
<div class="pm plus" style="left:8.0px;top:22.0px;width:9.0px;height:9.0px;"></div>
<svg style="left:23.5px;top:19.0px" width="16" height="14" viewBox="0 0 16 14"><path d="M1 1.3 L2 .5 L7 1.2 L9 2.9 L13.800 3.600 L13.800 6 L1 5Z" fill="#ead28a" stroke="#b8923e" stroke-width=".5"/><path d="M2.200 1 L6.800 1.600" stroke="#fff6d8" stroke-width=".6"/><path d="M.5 3.400 L13.800 4.200 L13.800 13.500 L.5 11.300Z" fill="url(#gFold)"/><path d="M13.800 4.200 L13.800 13.500 L.5 11.300" fill="none" stroke="#a07a2c" stroke-width=".9"/><path d="M.5 3.700 L13.500 4.500" stroke="#fff4cf" stroke-width=".7"/><path d="M.5 3.400 L.5 11.300" stroke="#d4ad55" stroke-width=".6"/></svg>
<span class="n" style="left:43.8px;top:19px">2</span>
<span class="n" style="left:55.5px;top:19px">.</span>
<span class="n" style="left:64.9px;top:19px">.</span>
<span class="n" style="left:71.9px;top:19px">HULL</span>
<div class="doth" style="left:17.0px;top:42.0px;width:7.0px;height:1.0px;"></div>
<div class="pm plus" style="left:8.0px;top:38.0px;width:9.0px;height:9.0px;"></div>
<svg style="left:23.5px;top:35.0px" width="16" height="14" viewBox="0 0 16 14"><path d="M1 1.3 L2 .5 L7 1.2 L9 2.9 L13.800 3.600 L13.800 6 L1 5Z" fill="#ead28a" stroke="#b8923e" stroke-width=".5"/><path d="M2.200 1 L6.800 1.600" stroke="#fff6d8" stroke-width=".6"/><path d="M.5 3.400 L13.800 4.200 L13.800 13.500 L.5 11.300Z" fill="url(#gFold)"/><path d="M13.800 4.200 L13.800 13.500 L.5 11.300" fill="none" stroke="#a07a2c" stroke-width=".9"/><path d="M.5 3.700 L13.500 4.500" stroke="#fff4cf" stroke-width=".7"/><path d="M.5 3.400 L.5 11.300" stroke="#d4ad55" stroke-width=".6"/></svg>
<span class="n" style="left:43.8px;top:35px">3</span>
<span class="n" style="left:55.5px;top:35px">.</span>
<span class="n" style="left:64.9px;top:35px">.</span>
<span class="n" style="left:71.9px;top:35px">EQUIPMENT FOR CARGO</span>
<div class="doth" style="left:17.0px;top:58.0px;width:7.0px;height:1.0px;"></div>
<div class="pm plus" style="left:8.0px;top:54.0px;width:9.0px;height:9.0px;"></div>
<svg style="left:23.5px;top:51.0px" width="16" height="14" viewBox="0 0 16 14"><path d="M1 1.3 L2 .5 L7 1.2 L9 2.9 L13.800 3.600 L13.800 6 L1 5Z" fill="#ead28a" stroke="#b8923e" stroke-width=".5"/><path d="M2.200 1 L6.800 1.600" stroke="#fff6d8" stroke-width=".6"/><path d="M.5 3.400 L13.800 4.200 L13.800 13.500 L.5 11.300Z" fill="url(#gFold)"/><path d="M13.800 4.200 L13.800 13.500 L.5 11.300" fill="none" stroke="#a07a2c" stroke-width=".9"/><path d="M.5 3.700 L13.500 4.500" stroke="#fff4cf" stroke-width=".7"/><path d="M.5 3.400 L.5 11.300" stroke="#d4ad55" stroke-width=".6"/></svg>
<span class="n" style="left:43.8px;top:51px">4</span>
<span class="n" style="left:55.5px;top:51px">.</span>
<span class="n" style="left:64.9px;top:51px">.</span>
<span class="n" style="left:71.9px;top:51px">SHIP EQUIPMENT</span>
<div class="doth" style="left:17.0px;top:74.0px;width:7.0px;height:1.0px;"></div>
<div class="pm plus" style="left:8.0px;top:70.0px;width:9.0px;height:9.0px;"></div>
<svg style="left:23.5px;top:67.0px" width="16" height="14" viewBox="0 0 16 14"><path d="M1 1.3 L2 .5 L7 1.2 L9 2.9 L13.800 3.600 L13.800 6 L1 5Z" fill="#ead28a" stroke="#b8923e" stroke-width=".5"/><path d="M2.200 1 L6.800 1.600" stroke="#fff6d8" stroke-width=".6"/><path d="M.5 3.400 L13.800 4.200 L13.800 13.500 L.5 11.300Z" fill="url(#gFold)"/><path d="M13.800 4.200 L13.800 13.500 L.5 11.300" fill="none" stroke="#a07a2c" stroke-width=".9"/><path d="M.5 3.700 L13.500 4.500" stroke="#fff4cf" stroke-width=".7"/><path d="M.5 3.400 L.5 11.300" stroke="#d4ad55" stroke-width=".6"/></svg>
<span class="n" style="left:43.8px;top:67px">5</span>
<span class="n" style="left:55.5px;top:67px">.</span>
<span class="n" style="left:64.9px;top:67px">.</span>
<span class="n" style="left:71.9px;top:67px">EQUIPMENT FOR CREW &amp; PASSENGERS</span>
<div class="doth" style="left:17.0px;top:90.0px;width:7.0px;height:1.0px;"></div>
<div class="pm plus" style="left:8.0px;top:86.0px;width:9.0px;height:9.0px;"></div>
<svg style="left:23.5px;top:83.0px" width="16" height="14" viewBox="0 0 16 14"><path d="M1 1.3 L2 .5 L7 1.2 L9 2.9 L13.800 3.600 L13.800 6 L1 5Z" fill="#ead28a" stroke="#b8923e" stroke-width=".5"/><path d="M2.200 1 L6.800 1.600" stroke="#fff6d8" stroke-width=".6"/><path d="M.5 3.400 L13.800 4.200 L13.800 13.500 L.5 11.300Z" fill="url(#gFold)"/><path d="M13.800 4.200 L13.800 13.500 L.5 11.300" fill="none" stroke="#a07a2c" stroke-width=".9"/><path d="M.5 3.700 L13.500 4.500" stroke="#fff4cf" stroke-width=".7"/><path d="M.5 3.400 L.5 11.300" stroke="#d4ad55" stroke-width=".6"/></svg>
<span class="n" style="left:43.8px;top:83px">6</span>
<span class="n" style="left:55.5px;top:83px">.</span>
<span class="n" style="left:64.9px;top:83px">.</span>
<span class="n" style="left:71.9px;top:83px">MACHINERY MAIN COMPONENTS</span>
<div class="doth" style="left:17.0px;top:106.0px;width:7.0px;height:1.0px;"></div>
<div class="pm plus" style="left:8.0px;top:102.0px;width:9.0px;height:9.0px;"></div>
<svg style="left:23.5px;top:99.0px" width="16" height="14" viewBox="0 0 16 14"><path d="M1 1.3 L2 .5 L7 1.2 L9 2.9 L13.800 3.600 L13.800 6 L1 5Z" fill="#ead28a" stroke="#b8923e" stroke-width=".5"/><path d="M2.200 1 L6.800 1.600" stroke="#fff6d8" stroke-width=".6"/><path d="M.5 3.400 L13.800 4.200 L13.800 13.500 L.5 11.300Z" fill="url(#gFold)"/><path d="M13.800 4.200 L13.800 13.500 L.5 11.300" fill="none" stroke="#a07a2c" stroke-width=".9"/><path d="M.5 3.700 L13.500 4.500" stroke="#fff4cf" stroke-width=".7"/><path d="M.5 3.400 L.5 11.300" stroke="#d4ad55" stroke-width=".6"/></svg>
<span class="n" style="left:43.8px;top:99px">7</span>
<span class="n" style="left:55.5px;top:99px">.</span>
<span class="n" style="left:64.9px;top:99px">.</span>
<span class="n" style="left:71.9px;top:99px">SYSTEMS FOR MACHINERY MAIN COMPONENTS</span>
<div class="doth" style="left:17.0px;top:122.0px;width:7.0px;height:1.0px;"></div>
<div class="pm plus" style="left:8.0px;top:118.0px;width:9.0px;height:9.0px;"></div>
<svg style="left:23.5px;top:115.0px" width="16" height="14" viewBox="0 0 16 14"><path d="M1 1.3 L2 .5 L7 1.2 L9 2.9 L13.800 3.600 L13.800 6 L1 5Z" fill="#ead28a" stroke="#b8923e" stroke-width=".5"/><path d="M2.200 1 L6.800 1.600" stroke="#fff6d8" stroke-width=".6"/><path d="M.5 3.400 L13.800 4.200 L13.800 13.500 L.5 11.300Z" fill="url(#gFold)"/><path d="M13.800 4.200 L13.800 13.500 L.5 11.300" fill="none" stroke="#a07a2c" stroke-width=".9"/><path d="M.5 3.700 L13.500 4.500" stroke="#fff4cf" stroke-width=".7"/><path d="M.5 3.400 L.5 11.300" stroke="#d4ad55" stroke-width=".6"/></svg>
<span class="n" style="left:43.8px;top:115px">8</span>
<span class="n" style="left:55.5px;top:115px">.</span>
<span class="n" style="left:64.9px;top:115px">.</span>
<span class="n" style="left:71.9px;top:115px">SHIP COMMON SYSTEMS</span>
<div class="doth" style="left:17.0px;top:138.0px;width:7.0px;height:1.0px;"></div>
<div class="pm" style="left:8.0px;top:134.0px;width:9.0px;height:9.0px;"></div>
<svg style="left:23.5px;top:131.0px" width="16" height="14" viewBox="0 0 16 14"><path d="M1 1.3 L2 .5 L7 1.2 L9 2.9 L13.800 3.600 L13.800 6 L1 5Z" fill="#ead28a" stroke="#b8923e" stroke-width=".5"/><path d="M2.200 1 L6.800 1.600" stroke="#fff6d8" stroke-width=".6"/><path d="M.5 3.400 L13.800 4.200 L13.800 13.500 L.5 11.300Z" fill="url(#gFold)"/><path d="M13.800 4.200 L13.800 13.500 L.5 11.300" fill="none" stroke="#a07a2c" stroke-width=".9"/><path d="M.5 3.700 L13.500 4.500" stroke="#fff4cf" stroke-width=".7"/><path d="M.5 3.400 L.5 11.300" stroke="#d4ad55" stroke-width=".6"/></svg>
<span class="n" style="left:43.8px;top:131px">9</span>
<span class="n" style="left:55.5px;top:131px">.</span>
<span class="n" style="left:64.9px;top:131px">.</span>
<span class="n" style="left:71.9px;top:131px">CATALOGUES - CONSUMABLES</span>
<div class="doth" style="left:36.0px;top:154.0px;width:7.0px;height:1.0px;"></div>
<div class="pm plus" style="left:27.0px;top:150.0px;width:9.0px;height:9.0px;"></div>
<svg style="left:42.5px;top:147.0px" width="16" height="14" viewBox="0 0 16 14"><path d="M1 1.3 L2 .5 L7 1.2 L9 2.9 L13.800 3.600 L13.800 6 L1 5Z" fill="#ead28a" stroke="#b8923e" stroke-width=".5"/><path d="M2.200 1 L6.800 1.600" stroke="#fff6d8" stroke-width=".6"/><path d="M.5 3.400 L13.800 4.200 L13.800 13.500 L.5 11.300Z" fill="url(#gFold)"/><path d="M13.800 4.200 L13.800 13.500 L.5 11.300" fill="none" stroke="#a07a2c" stroke-width=".9"/><path d="M.5 3.700 L13.500 4.500" stroke="#fff4cf" stroke-width=".7"/><path d="M.5 3.400 L.5 11.300" stroke="#d4ad55" stroke-width=".6"/></svg>
<span class="n" style="left:62.8px;top:147px">98</span>
<span class="n" style="left:78.2px;top:147px">.</span>
<span class="n" style="left:87.0px;top:147px">.</span>
<span class="n" style="left:92.7px;top:147px">NOT IMPA CATALOGUES</span>
<div class="doth" style="left:36.0px;top:170.0px;width:7.0px;height:1.0px;"></div>
<div class="pm" style="left:27.0px;top:166.0px;width:9.0px;height:9.0px;"></div>
<svg style="left:42.5px;top:163.0px" width="16" height="14" viewBox="0 0 16 14"><path d="M1 1.3 L2 .5 L7 1.2 L9 2.9 L13.800 3.600 L13.800 6 L1 5Z" fill="#ead28a" stroke="#b8923e" stroke-width=".5"/><path d="M2.200 1 L6.800 1.600" stroke="#fff6d8" stroke-width=".6"/><path d="M.5 3.400 L13.800 4.200 L13.800 13.500 L.5 11.300Z" fill="url(#gFold)"/><path d="M13.800 4.200 L13.800 13.500 L.5 11.300" fill="none" stroke="#a07a2c" stroke-width=".9"/><path d="M.5 3.700 L13.500 4.500" stroke="#fff4cf" stroke-width=".7"/><path d="M.5 3.400 L.5 11.300" stroke="#d4ad55" stroke-width=".6"/></svg>
<span class="n" style="left:62.8px;top:163px">99</span>
<span class="n" style="left:78.2px;top:163px">.</span>
<span class="n" style="left:87.0px;top:163px">.</span>
<span class="n" style="left:92.7px;top:163px">IMPA CATALOGUE</span>
<div class="doth" style="left:55.0px;top:186.0px;width:7.0px;height:1.0px;"></div>
<div class="pm plus" style="left:46.0px;top:182.0px;width:9.0px;height:9.0px;"></div>
<svg style="left:61.5px;top:179.0px" width="16" height="14" viewBox="0 0 16 14"><path d="M1 1.3 L2 .5 L7 1.2 L9 2.9 L13.800 3.600 L13.800 6 L1 5Z" fill="#ead28a" stroke="#b8923e" stroke-width=".5"/><path d="M2.200 1 L6.800 1.600" stroke="#fff6d8" stroke-width=".6"/><path d="M.5 3.400 L13.800 4.200 L13.800 13.500 L.5 11.300Z" fill="url(#gFold)"/><path d="M13.800 4.200 L13.800 13.500 L.5 11.300" fill="none" stroke="#a07a2c" stroke-width=".9"/><path d="M.5 3.700 L13.500 4.500" stroke="#fff4cf" stroke-width=".7"/><path d="M.5 3.400 L.5 11.300" stroke="#d4ad55" stroke-width=".6"/></svg>
<span class="n" style="left:81.8px;top:179px">991</span>
<span class="n" style="left:100.2px;top:179px">.</span>
<span class="n" style="left:109.4px;top:179px">.</span>
<span class="n" style="left:114.6px;top:179px">IMPA GROUP 1</span>
<div class="doth" style="left:55.0px;top:202.0px;width:7.0px;height:1.0px;"></div>
<div class="pm plus" style="left:46.0px;top:198.0px;width:9.0px;height:9.0px;"></div>
<svg style="left:61.5px;top:195.0px" width="16" height="14" viewBox="0 0 16 14"><path d="M1 1.3 L2 .5 L7 1.2 L9 2.9 L13.800 3.600 L13.800 6 L1 5Z" fill="#ead28a" stroke="#b8923e" stroke-width=".5"/><path d="M2.200 1 L6.800 1.600" stroke="#fff6d8" stroke-width=".6"/><path d="M.5 3.400 L13.800 4.200 L13.800 13.500 L.5 11.300Z" fill="url(#gFold)"/><path d="M13.800 4.200 L13.800 13.500 L.5 11.300" fill="none" stroke="#a07a2c" stroke-width=".9"/><path d="M.5 3.700 L13.500 4.500" stroke="#fff4cf" stroke-width=".7"/><path d="M.5 3.400 L.5 11.300" stroke="#d4ad55" stroke-width=".6"/></svg>
<span class="n" style="left:81.8px;top:195px">992</span>
<span class="n" style="left:100.2px;top:195px">.</span>
<span class="n" style="left:109.4px;top:195px">.</span>
<span class="n" style="left:114.6px;top:195px">IMPA GROUP 2</span>
<div class="doth" style="left:55.0px;top:218.0px;width:7.0px;height:1.0px;"></div>
<div class="pm plus" style="left:46.0px;top:214.0px;width:9.0px;height:9.0px;"></div>
<svg style="left:61.5px;top:211.0px" width="16" height="14" viewBox="0 0 16 14"><path d="M1 1.3 L2 .5 L7 1.2 L9 2.9 L13.800 3.600 L13.800 6 L1 5Z" fill="#ead28a" stroke="#b8923e" stroke-width=".5"/><path d="M2.200 1 L6.800 1.600" stroke="#fff6d8" stroke-width=".6"/><path d="M.5 3.400 L13.800 4.200 L13.800 13.500 L.5 11.300Z" fill="url(#gFold)"/><path d="M13.800 4.200 L13.800 13.500 L.5 11.300" fill="none" stroke="#a07a2c" stroke-width=".9"/><path d="M.5 3.700 L13.500 4.500" stroke="#fff4cf" stroke-width=".7"/><path d="M.5 3.400 L.5 11.300" stroke="#d4ad55" stroke-width=".6"/></svg>
<span class="n" style="left:81.8px;top:211px">993</span>
<span class="n" style="left:100.2px;top:211px">.</span>
<span class="n" style="left:109.4px;top:211px">.</span>
<span class="n" style="left:114.6px;top:211px">IMPA GROUP 3</span>
<div class="doth" style="left:55.0px;top:234.0px;width:7.0px;height:1.0px;"></div>
<div class="pm plus" style="left:46.0px;top:230.0px;width:9.0px;height:9.0px;"></div>
<svg style="left:61.5px;top:227.0px" width="16" height="14" viewBox="0 0 16 14"><path d="M1 1.3 L2 .5 L7 1.2 L9 2.9 L13.800 3.600 L13.800 6 L1 5Z" fill="#ead28a" stroke="#b8923e" stroke-width=".5"/><path d="M2.200 1 L6.800 1.600" stroke="#fff6d8" stroke-width=".6"/><path d="M.5 3.400 L13.800 4.200 L13.800 13.500 L.5 11.300Z" fill="url(#gFold)"/><path d="M13.800 4.200 L13.800 13.500 L.5 11.300" fill="none" stroke="#a07a2c" stroke-width=".9"/><path d="M.5 3.700 L13.500 4.500" stroke="#fff4cf" stroke-width=".7"/><path d="M.5 3.400 L.5 11.300" stroke="#d4ad55" stroke-width=".6"/></svg>
<span class="n" style="left:81.8px;top:227px">994</span>
<span class="n" style="left:100.2px;top:227px">.</span>
<span class="n" style="left:109.4px;top:227px">.</span>
<span class="n" style="left:114.6px;top:227px">IMPA GROUP 4</span>
<div class="doth" style="left:55.0px;top:250.0px;width:7.0px;height:1.0px;"></div>
<div class="pm plus" style="left:46.0px;top:246.0px;width:9.0px;height:9.0px;"></div>
<svg style="left:61.5px;top:243.0px" width="16" height="14" viewBox="0 0 16 14"><path d="M1 1.3 L2 .5 L7 1.2 L9 2.9 L13.800 3.600 L13.800 6 L1 5Z" fill="#ead28a" stroke="#b8923e" stroke-width=".5"/><path d="M2.200 1 L6.800 1.600" stroke="#fff6d8" stroke-width=".6"/><path d="M.5 3.400 L13.800 4.200 L13.800 13.500 L.5 11.300Z" fill="url(#gFold)"/><path d="M13.800 4.200 L13.800 13.500 L.5 11.300" fill="none" stroke="#a07a2c" stroke-width=".9"/><path d="M.5 3.700 L13.500 4.500" stroke="#fff4cf" stroke-width=".7"/><path d="M.5 3.400 L.5 11.300" stroke="#d4ad55" stroke-width=".6"/></svg>
<span class="n" style="left:81.8px;top:243px">995</span>
<span class="n" style="left:100.2px;top:243px">.</span>
<span class="n" style="left:109.4px;top:243px">.</span>
<span class="n" style="left:114.6px;top:243px">IMPA GROUP 5</span>
<div class="doth" style="left:55.0px;top:266.0px;width:7.0px;height:1.0px;"></div>
<div class="pm plus" style="left:46.0px;top:262.0px;width:9.0px;height:9.0px;"></div>
<svg style="left:61.5px;top:259.0px" width="16" height="14" viewBox="0 0 16 14"><path d="M1 1.3 L2 .5 L7 1.2 L9 2.9 L13.800 3.600 L13.800 6 L1 5Z" fill="#ead28a" stroke="#b8923e" stroke-width=".5"/><path d="M2.200 1 L6.800 1.600" stroke="#fff6d8" stroke-width=".6"/><path d="M.5 3.400 L13.800 4.200 L13.800 13.500 L.5 11.300Z" fill="url(#gFold)"/><path d="M13.800 4.200 L13.800 13.500 L.5 11.300" fill="none" stroke="#a07a2c" stroke-width=".9"/><path d="M.5 3.700 L13.500 4.500" stroke="#fff4cf" stroke-width=".7"/><path d="M.5 3.400 L.5 11.300" stroke="#d4ad55" stroke-width=".6"/></svg>
<span class="n" style="left:81.8px;top:259px">996</span>
<span class="n" style="left:100.2px;top:259px">.</span>
<span class="n" style="left:109.4px;top:259px">.</span>
<span class="n" style="left:114.6px;top:259px">IMPA GROUP 6</span>
<div class="doth" style="left:55.0px;top:282.0px;width:7.0px;height:1.0px;"></div>
<div class="pm" style="left:46.0px;top:278.0px;width:9.0px;height:9.0px;"></div>
<svg style="left:61.5px;top:275.0px" width="16" height="14" viewBox="0 0 16 14"><path d="M1 1.3 L2 .5 L7 1.2 L9 2.9 L13.800 3.600 L13.800 6 L1 5Z" fill="#ead28a" stroke="#b8923e" stroke-width=".5"/><path d="M2.200 1 L6.800 1.600" stroke="#fff6d8" stroke-width=".6"/><path d="M.5 3.400 L13.800 4.200 L13.800 13.500 L.5 11.300Z" fill="url(#gFold)"/><path d="M13.800 4.200 L13.800 13.500 L.5 11.300" fill="none" stroke="#a07a2c" stroke-width=".9"/><path d="M.5 3.700 L13.500 4.500" stroke="#fff4cf" stroke-width=".7"/><path d="M.5 3.400 L.5 11.300" stroke="#d4ad55" stroke-width=".6"/></svg>
<span class="n" style="left:81.8px;top:275px">997</span>
<span class="n" style="left:100.2px;top:275px">.</span>
<span class="n" style="left:109.4px;top:275px">.</span>
<span class="n" style="left:114.6px;top:275px">IMPA GROUP 7</span>
<div class="doth" style="left:74.0px;top:298.0px;width:7.0px;height:1.0px;"></div>
<div class="pm plus" style="left:65.0px;top:294.0px;width:9.0px;height:9.0px;"></div>
<svg style="left:80.5px;top:291.0px" width="16" height="14" viewBox="0 0 16 14"><path d="M1 1.3 L2 .5 L7 1.2 L9 2.9 L13.800 3.600 L13.800 6 L1 5Z" fill="#ead28a" stroke="#b8923e" stroke-width=".5"/><path d="M2.200 1 L6.800 1.600" stroke="#fff6d8" stroke-width=".6"/><path d="M.5 3.400 L13.800 4.200 L13.800 13.500 L.5 11.300Z" fill="url(#gFold)"/><path d="M13.800 4.200 L13.800 13.500 L.5 11.300" fill="none" stroke="#a07a2c" stroke-width=".9"/><path d="M.5 3.700 L13.500 4.500" stroke="#fff4cf" stroke-width=".7"/><path d="M.5 3.400 L.5 11.300" stroke="#d4ad55" stroke-width=".6"/></svg>
<span class="n" style="left:100.7px;top:291px;">997.10. 71. PIPES &amp; TUBES</span>
<div class="doth" style="left:74.0px;top:314.0px;width:7.0px;height:1.0px;"></div>
<div class="pm plus" style="left:65.0px;top:310.0px;width:9.0px;height:9.0px;"></div>
<svg style="left:80.5px;top:307.0px" width="16" height="14" viewBox="0 0 16 14"><path d="M1 1.3 L2 .5 L7 1.2 L9 2.9 L13.800 3.600 L13.800 6 L1 5Z" fill="#ead28a" stroke="#b8923e" stroke-width=".5"/><path d="M2.200 1 L6.800 1.600" stroke="#fff6d8" stroke-width=".6"/><path d="M.5 3.400 L13.800 4.200 L13.800 13.500 L.5 11.300Z" fill="url(#gFold)"/><path d="M13.800 4.200 L13.800 13.500 L.5 11.300" fill="none" stroke="#a07a2c" stroke-width=".9"/><path d="M.5 3.700 L13.500 4.500" stroke="#fff4cf" stroke-width=".7"/><path d="M.5 3.400 L.5 11.300" stroke="#d4ad55" stroke-width=".6"/></svg>
<span class="n" style="left:100.7px;top:307px;">997.30. 73. PIPE &amp; TUBE FITTINGS</span>
<div class="doth" style="left:74.0px;top:330.0px;width:7.0px;height:1.0px;"></div>
<div class="pm plus" style="left:65.0px;top:326.0px;width:9.0px;height:9.0px;"></div>
<svg style="left:80.5px;top:323.0px" width="16" height="14" viewBox="0 0 16 14"><path d="M1 1.3 L2 .5 L7 1.2 L9 2.9 L13.800 3.600 L13.800 6 L1 5Z" fill="#ead28a" stroke="#b8923e" stroke-width=".5"/><path d="M2.200 1 L6.800 1.600" stroke="#fff6d8" stroke-width=".6"/><path d="M.5 3.400 L13.800 4.200 L13.800 13.500 L.5 11.300Z" fill="url(#gFold)"/><path d="M13.800 4.200 L13.800 13.500 L.5 11.300" fill="none" stroke="#a07a2c" stroke-width=".9"/><path d="M.5 3.700 L13.500 4.500" stroke="#fff4cf" stroke-width=".7"/><path d="M.5 3.400 L.5 11.300" stroke="#d4ad55" stroke-width=".6"/></svg>
<span class="n" style="left:100.7px;top:323px;">997.50. 75. VALVES &amp; COCKS</span>
<div class="doth" style="left:74.0px;top:346.0px;width:7.0px;height:1.0px;"></div>
<div class="pm" style="left:65.0px;top:342.0px;width:9.0px;height:9.0px;"></div>
<svg style="left:80.5px;top:339.0px" width="16" height="14" viewBox="0 0 16 14"><path d="M1 1.3 L2 .5 L7 1.2 L9 2.9 L13.800 3.600 L13.800 6 L1 5Z" fill="#ead28a" stroke="#b8923e" stroke-width=".5"/><path d="M2.200 1 L6.800 1.600" stroke="#fff6d8" stroke-width=".6"/><path d="M.5 3.400 L13.800 4.200 L13.800 13.500 L.5 11.300Z" fill="url(#gFold)"/><path d="M13.800 4.200 L13.800 13.500 L.5 11.300" fill="none" stroke="#a07a2c" stroke-width=".9"/><path d="M.5 3.700 L13.500 4.500" stroke="#fff4cf" stroke-width=".7"/><path d="M.5 3.400 L.5 11.300" stroke="#d4ad55" stroke-width=".6"/></svg>
<span class="n" style="left:100.7px;top:339px;">997.70. 77. BEARINGS</span>
<div class="doth" style="left:88.0px;top:362.0px;width:11.0px;height:1.0px;"></div>
<svg style="left:99.2px;top:355.3px" width="16" height="14" viewBox="0 0 16 14"><path d="M4.500 1.200 L5.200 .3 L9.500 .8 L11 2.500 L15 3.200 L15 12.800 L12 12.400 L4.500 5Z" fill="#ecd48c" stroke="#a88434" stroke-width=".6"/><path d="M5.400 .9 L9.200 1.300" stroke="#fff6d8" stroke-width=".6"/><path d="M.4 4.500 L10.800 5.200 L13.800 13.200 L3 11.300Z" fill="url(#gFold)" stroke="#a07a2c" stroke-width=".7"/><path d="M.9 5 L10.500 5.700" stroke="#fff4cf" stroke-width=".6"/></svg>
<div class="" style="left:118.0px;top:354.0px;width:228.0px;height:16.0px;background:#0078d7"></div>
<span class="n" style="left:119.7px;top:355px;color:#fff;">997.75.280 SINGLE ROW DEEP GROOVE RADIAL BALL</span>
<div class="doth" style="left:88.0px;top:378.0px;width:11.0px;height:1.0px;"></div>
<svg style="left:99.5px;top:371.0px" width="16" height="14" viewBox="0 0 16 14"><path d="M1 1.3 L2 .5 L7 1.2 L9 2.9 L13.800 3.600 L13.800 6 L1 5Z" fill="#ead28a" stroke="#b8923e" stroke-width=".5"/><path d="M2.200 1 L6.800 1.600" stroke="#fff6d8" stroke-width=".6"/><path d="M.5 3.400 L13.800 4.200 L13.800 13.500 L.5 11.300Z" fill="url(#gFold)"/><path d="M13.800 4.200 L13.800 13.500 L.5 11.300" fill="none" stroke="#a07a2c" stroke-width=".9"/><path d="M.5 3.700 L13.500 4.500" stroke="#fff4cf" stroke-width=".7"/><path d="M.5 3.400 L.5 11.300" stroke="#d4ad55" stroke-width=".6"/></svg>
<span class="n" style="left:119.7px;top:371px;">997.75.290 SINGLE ROW ANGULAR CONTACT</span>
<div class="doth" style="left:88.0px;top:394.0px;width:11.0px;height:1.0px;"></div>
<svg style="left:99.5px;top:387.0px" width="16" height="14" viewBox="0 0 16 14"><path d="M1 1.3 L2 .5 L7 1.2 L9 2.9 L13.800 3.600 L13.800 6 L1 5Z" fill="#ead28a" stroke="#b8923e" stroke-width=".5"/><path d="M2.200 1 L6.800 1.600" stroke="#fff6d8" stroke-width=".6"/><path d="M.5 3.400 L13.800 4.200 L13.800 13.500 L.5 11.300Z" fill="url(#gFold)"/><path d="M13.800 4.200 L13.800 13.500 L.5 11.300" fill="none" stroke="#a07a2c" stroke-width=".9"/><path d="M.5 3.700 L13.500 4.500" stroke="#fff4cf" stroke-width=".7"/><path d="M.5 3.400 L.5 11.300" stroke="#d4ad55" stroke-width=".6"/></svg>
<span class="n" style="left:119.7px;top:387px;">997.75.300 DOUBLE ROW SELF-ALIGNING BALL</span>
<div class="doth" style="left:88.0px;top:410.0px;width:11.0px;height:1.0px;"></div>
<svg style="left:99.5px;top:403.0px" width="16" height="14" viewBox="0 0 16 14"><path d="M1 1.3 L2 .5 L7 1.2 L9 2.9 L13.800 3.600 L13.800 6 L1 5Z" fill="#ead28a" stroke="#b8923e" stroke-width=".5"/><path d="M2.200 1 L6.800 1.600" stroke="#fff6d8" stroke-width=".6"/><path d="M.5 3.400 L13.800 4.200 L13.800 13.500 L.5 11.300Z" fill="url(#gFold)"/><path d="M13.800 4.200 L13.800 13.500 L.5 11.300" fill="none" stroke="#a07a2c" stroke-width=".9"/><path d="M.5 3.700 L13.500 4.500" stroke="#fff4cf" stroke-width=".7"/><path d="M.5 3.400 L.5 11.300" stroke="#d4ad55" stroke-width=".6"/></svg>
<span class="n" style="left:119.7px;top:403px;">997.75.310 CYLINDRICAL ROLLER BEARINGS</span>
<div class="doth" style="left:88.0px;top:426.0px;width:11.0px;height:1.0px;"></div>
<svg style="left:99.5px;top:419.0px" width="16" height="14" viewBox="0 0 16 14"><path d="M1 1.3 L2 .5 L7 1.2 L9 2.9 L13.800 3.600 L13.800 6 L1 5Z" fill="#ead28a" stroke="#b8923e" stroke-width=".5"/><path d="M2.200 1 L6.800 1.600" stroke="#fff6d8" stroke-width=".6"/><path d="M.5 3.400 L13.800 4.200 L13.800 13.500 L.5 11.300Z" fill="url(#gFold)"/><path d="M13.800 4.200 L13.800 13.500 L.5 11.300" fill="none" stroke="#a07a2c" stroke-width=".9"/><path d="M.5 3.700 L13.500 4.500" stroke="#fff4cf" stroke-width=".7"/><path d="M.5 3.400 L.5 11.300" stroke="#d4ad55" stroke-width=".6"/></svg>
<span class="n" style="left:119.7px;top:419px;">997.75.320 TAPERED ROLLER BEARINGS</span>
<div class="doth" style="left:88.0px;top:442.0px;width:11.0px;height:1.0px;"></div>
<svg style="left:99.5px;top:435.0px" width="16" height="14" viewBox="0 0 16 14"><path d="M1 1.3 L2 .5 L7 1.2 L9 2.9 L13.800 3.600 L13.800 6 L1 5Z" fill="#ead28a" stroke="#b8923e" stroke-width=".5"/><path d="M2.200 1 L6.800 1.600" stroke="#fff6d8" stroke-width=".6"/><path d="M.5 3.400 L13.800 4.200 L13.800 13.500 L.5 11.300Z" fill="url(#gFold)"/><path d="M13.800 4.200 L13.800 13.500 L.5 11.300" fill="none" stroke="#a07a2c" stroke-width=".9"/><path d="M.5 3.700 L13.500 4.500" stroke="#fff4cf" stroke-width=".7"/><path d="M.5 3.400 L.5 11.300" stroke="#d4ad55" stroke-width=".6"/></svg>
<span class="n" style="left:119.7px;top:435px;">997.75.330 SPHERICAL ROLLER BEARINGS</span>
<div class="doth" style="left:88.0px;top:458.0px;width:11.0px;height:1.0px;"></div>
<svg style="left:99.5px;top:451.0px" width="16" height="14" viewBox="0 0 16 14"><path d="M1 1.3 L2 .5 L7 1.2 L9 2.9 L13.800 3.600 L13.800 6 L1 5Z" fill="#ead28a" stroke="#b8923e" stroke-width=".5"/><path d="M2.200 1 L6.800 1.600" stroke="#fff6d8" stroke-width=".6"/><path d="M.5 3.400 L13.800 4.200 L13.800 13.500 L.5 11.300Z" fill="url(#gFold)"/><path d="M13.800 4.200 L13.800 13.500 L.5 11.300" fill="none" stroke="#a07a2c" stroke-width=".9"/><path d="M.5 3.700 L13.500 4.500" stroke="#fff4cf" stroke-width=".7"/><path d="M.5 3.400 L.5 11.300" stroke="#d4ad55" stroke-width=".6"/></svg>
<span class="n" style="left:119.7px;top:451px;">997.75.340 NEEDLE ROLLER BEARINGS</span>
<div class="doth" style="left:88.0px;top:474.0px;width:11.0px;height:1.0px;"></div>
<svg style="left:99.5px;top:467.0px" width="16" height="14" viewBox="0 0 16 14"><path d="M1 1.3 L2 .5 L7 1.2 L9 2.9 L13.800 3.600 L13.800 6 L1 5Z" fill="#ead28a" stroke="#b8923e" stroke-width=".5"/><path d="M2.200 1 L6.800 1.600" stroke="#fff6d8" stroke-width=".6"/><path d="M.5 3.400 L13.800 4.200 L13.800 13.500 L.5 11.300Z" fill="url(#gFold)"/><path d="M13.800 4.200 L13.800 13.500 L.5 11.300" fill="none" stroke="#a07a2c" stroke-width=".9"/><path d="M.5 3.700 L13.500 4.500" stroke="#fff4cf" stroke-width=".7"/><path d="M.5 3.400 L.5 11.300" stroke="#d4ad55" stroke-width=".6"/></svg>
<span class="n" style="left:119.7px;top:467px;">997.75.350 THRUST BALL BEARINGS</span>
<div class="doth" style="left:88.0px;top:490.0px;width:11.0px;height:1.0px;"></div>
<svg style="left:99.5px;top:483.0px" width="16" height="14" viewBox="0 0 16 14"><path d="M1 1.3 L2 .5 L7 1.2 L9 2.9 L13.800 3.600 L13.800 6 L1 5Z" fill="#ead28a" stroke="#b8923e" stroke-width=".5"/><path d="M2.200 1 L6.800 1.600" stroke="#fff6d8" stroke-width=".6"/><path d="M.5 3.400 L13.800 4.200 L13.800 13.500 L.5 11.300Z" fill="url(#gFold)"/><path d="M13.800 4.200 L13.800 13.500 L.5 11.300" fill="none" stroke="#a07a2c" stroke-width=".9"/><path d="M.5 3.700 L13.500 4.500" stroke="#fff4cf" stroke-width=".7"/><path d="M.5 3.400 L.5 11.300" stroke="#d4ad55" stroke-width=".6"/></svg>
<span class="n" style="left:119.7px;top:483px;">997.75.360 STEEL BALLS FOR BALL BEARINGS</span>
<div class="doth" style="left:88.0px;top:506.0px;width:11.0px;height:1.0px;"></div>
<svg style="left:99.5px;top:499.0px" width="16" height="14" viewBox="0 0 16 14"><path d="M1 1.3 L2 .5 L7 1.2 L9 2.9 L13.800 3.600 L13.800 6 L1 5Z" fill="#ead28a" stroke="#b8923e" stroke-width=".5"/><path d="M2.200 1 L6.800 1.600" stroke="#fff6d8" stroke-width=".6"/><path d="M.5 3.400 L13.800 4.200 L13.800 13.500 L.5 11.300Z" fill="url(#gFold)"/><path d="M13.800 4.200 L13.800 13.500 L.5 11.300" fill="none" stroke="#a07a2c" stroke-width=".9"/><path d="M.5 3.700 L13.500 4.500" stroke="#fff4cf" stroke-width=".7"/><path d="M.5 3.400 L.5 11.300" stroke="#d4ad55" stroke-width=".6"/></svg>
<span class="n" style="left:119.7px;top:499px;">997.75.370 BEARINGS UNITS</span>
<div class="doth" style="left:74.0px;top:522.0px;width:7.0px;height:1.0px;"></div>
<div class="pm plus" style="left:65.0px;top:518.0px;width:9.0px;height:9.0px;"></div>
<svg style="left:80.5px;top:515.0px" width="16" height="14" viewBox="0 0 16 14"><path d="M1 1.3 L2 .5 L7 1.2 L9 2.9 L13.800 3.600 L13.800 6 L1 5Z" fill="#ead28a" stroke="#b8923e" stroke-width=".5"/><path d="M2.200 1 L6.800 1.600" stroke="#fff6d8" stroke-width=".6"/><path d="M.5 3.400 L13.800 4.200 L13.800 13.500 L.5 11.300Z" fill="url(#gFold)"/><path d="M13.800 4.200 L13.800 13.500 L.5 11.300" fill="none" stroke="#a07a2c" stroke-width=".9"/><path d="M.5 3.700 L13.500 4.500" stroke="#fff4cf" stroke-width=".7"/><path d="M.5 3.400 L.5 11.300" stroke="#d4ad55" stroke-width=".6"/></svg>
<span class="n" style="left:100.7px;top:515px;">997.90. 79. ELECTRICAL EQUIPMENT</span>
<div class="doth" style="left:55.0px;top:538.0px;width:7.0px;height:1.0px;"></div>
<div class="pm plus" style="left:46.0px;top:534.0px;width:9.0px;height:9.0px;"></div>
<svg style="left:61.5px;top:531.0px" width="16" height="14" viewBox="0 0 16 14"><path d="M1 1.3 L2 .5 L7 1.2 L9 2.9 L13.800 3.600 L13.800 6 L1 5Z" fill="#ead28a" stroke="#b8923e" stroke-width=".5"/><path d="M2.200 1 L6.800 1.600" stroke="#fff6d8" stroke-width=".6"/><path d="M.5 3.400 L13.800 4.200 L13.800 13.500 L.5 11.300Z" fill="url(#gFold)"/><path d="M13.800 4.200 L13.800 13.500 L.5 11.300" fill="none" stroke="#a07a2c" stroke-width=".9"/><path d="M.5 3.700 L13.500 4.500" stroke="#fff4cf" stroke-width=".7"/><path d="M.5 3.400 L.5 11.300" stroke="#d4ad55" stroke-width=".6"/></svg>
<span class="n" style="left:81.8px;top:531px">998</span>
<span class="n" style="left:100.2px;top:531px">.</span>
<span class="n" style="left:109.4px;top:531px">.</span>
<span class="n" style="left:114.6px;top:531px">IMPA GROUP 8</span>
</div>
<div class="" style="left:93.0px;top:1011.0px;width:346.0px;height:17.0px;background:#f0f0f0"></div>
<div class="" style="left:111.0px;top:1011.0px;width:235.5px;height:14.5px;background:#cdcdcd"></div>
<svg style="left:97px;top:1013px" width="10" height="11" viewBox="0 0 10 11"><path d="M7 1.5 L3 5.500 L7 9.500" fill="none" stroke="#505050" stroke-width="1.8"/></svg>
<svg style="left:425px;top:1013px" width="10" height="11" viewBox="0 0 10 11"><path d="M3 1.5 L7 5.500 L3 9.500" fill="none" stroke="#505050" stroke-width="1.8"/></svg>
<div class="" style="left:444.0px;top:524.0px;width:3.5px;height:116.0px;border:1px solid #c4c4c4;background:#f6f6f6"></div>
<div class="" style="left:451.0px;top:137.0px;width:1464.0px;height:137.5px;border-top:1px solid #a0a0a0;border-left:1px solid #a0a0a0;border-right:1px solid #fff;border-bottom:1px solid #fff;background:#f0f0f0;box-shadow:inset 1px 1px 0 #696969"></div>
<span class="n" style="left:461.5px;top:143px;">Function Number</span>
<span class="n" style="left:591.0px;top:143px;">Function Description</span>
<span class="n" style="left:820.6px;top:143px;">Criticality</span>
<span class="n" style="left:908.5px;top:143px;">Function Reference</span>
<div class="fld" style="left:461.0px;top:157.0px;width:125.0px;height:18.0px;"></div>
<span class="n" style="left:461.5px;top:158px;">997.75.280</span>
<div class="fld" style="left:591.0px;top:157.0px;width:224.0px;height:18.0px;"></div>
<span class="n" style="left:591.3px;top:158px;">SINGLE ROW DEEP GROOVE RADIAL BALL</span>
<div class="fldw" style="left:820.0px;top:157.0px;width:83.0px;height:18.0px;"></div>
<div class="" style="left:886.0px;top:158.5px;width:15.5px;height:15.0px;background:#e1e1e1;border:1px solid #adadad"></div>
<svg style="left:888.5px;top:162.5px" width="11" height="8" viewBox="0 0 11 8"><path d="M1.5 1.5 L5.500 5.500 L9.500 1.5" fill="none" stroke="#505050" stroke-width="1.3"/></svg>
<div class="fld" style="left:908.0px;top:157.0px;width:103.0px;height:18.0px;"></div>
<span class="n" style="left:908.5px;top:158px;">IMPA Catalog</span>
<span class="n" style="left:461.5px;top:181px;">Location</span>
<div class="fld" style="left:591.0px;top:178.0px;width:125.0px;height:18.0px;"></div>
<div class="fld" style="left:721.0px;top:178.0px;width:224.0px;height:18.0px;"></div>
<div class="btn3" style="left:948.0px;top:177.0px;width:20.0px;height:20.0px;"><div class="dots"></div></div>
<div class="btn3" style="left:969.0px;top:177.0px;width:20.0px;height:20.0px;"></div>
<svg style="left:972px;top:178px" width="14" height="19" viewBox="0 0 14 19" shape-rendering="crispEdges"><g fill="#000"><rect x="1" y="1" width="3" height="3"/><rect x="5" y="4" width="3" height="3"/><rect x="9" y="7" width="3" height="3"/><rect x="9" y="11" width="3" height="3"/><rect x="9" y="15" width="3" height="3"/><rect x="2" y="4" width="1" height="13"/><rect x="2" y="5" width="3" height="1"/><rect x="6" y="7" width="1" height="10"/><rect x="6" y="8" width="3" height="1"/><rect x="6" y="12" width="3" height="1"/><rect x="6" y="16" width="3" height="1"/></g><rect x="2" y="2" width="1" height="1" fill="#ffff00"/><rect x="6" y="5" width="1" height="1" fill="#00ee00"/><rect x="10" y="8" width="1" height="1" fill="#ff0000"/><rect x="10" y="12" width="1" height="1" fill="#ff0000"/><rect x="10" y="16" width="1" height="1" fill="#ff0000"/></svg>
<span class="n" style="left:461.5px;top:202px;">Maint. Budget Code</span>
<span class="n" style="left:591.0px;top:202px;">Maint. Budget Title</span>
<span class="n" style="left:791.5px;top:202px;">Status</span>
<span class="n" style="left:908.5px;top:202px;">Stock Budget Code</span>
<span class="n" style="left:1055.3px;top:202px;">Stock Budget Title</span>
<div class="fld" style="left:461.0px;top:216.0px;width:125.0px;height:18.0px;"></div>
<div class="fld" style="left:592.0px;top:216.0px;width:162.0px;height:18.0px;"></div>
<div class="btn3" style="left:757.0px;top:215.0px;width:20.0px;height:20.0px;"><div class="dots"></div></div>
<div class="fld" style="left:791.0px;top:216.0px;width:106.0px;height:18.0px;"></div>
<span class="n" style="left:791.3px;top:217px;">In Use</span>
<div class="fld" style="left:908.0px;top:216.0px;width:125.0px;height:18.0px;"></div>
<div class="fld" style="left:1042.0px;top:216.0px;width:162.0px;height:18.0px;"></div>
<div class="btn3" style="left:1207.0px;top:215.0px;width:21.0px;height:20.0px;"><div class="dots"></div></div>
<span class="n" style="left:461.5px;top:239px;">Add. Info for Type:</span>
<div class="fld" style="left:592.0px;top:238.0px;width:285.0px;height:18.0px;"></div>
<div class="" style="left:1897.5px;top:139.0px;width:17.0px;height:134.5px;background:#f0f0f0;border-left:1px solid #fafafa"></div>
<div class="" style="left:1898.5px;top:156.0px;width:15.0px;height:57.5px;background:#cdcdcd"></div>
<svg style="left:1900px;top:144px" width="11" height="8" viewBox="0 0 11 8"><path d="M1.5 6.500 L5.500 2.500 L9.500 6.500" fill="none" stroke="#505050" stroke-width="1.8"/></svg>
<svg style="left:1900px;top:261px" width="11" height="8" viewBox="0 0 11 8"><path d="M1.5 1.5 L5.500 5.500 L9.500 1.5" fill="none" stroke="#505050" stroke-width="1.8"/></svg>
<div class="" style="left:1125.0px;top:275.5px;width:118.0px;height:6.0px;border:1px solid #c8c8c8;background:#f6f6f6"></div>
<div class="doth" style="left:1133.0px;top:278.0px;width:100.0px;height:1.0px;background:repeating-linear-gradient(90deg,#8a8a8a 0 1px,transparent 1px 3px)"></div>
<div class="" style="left:451.5px;top:313.0px;width:1462.5px;height:714.5px;border:1px solid #fff;border-right:1px solid #fff;background:#f0f0f0;box-shadow:1px 1px 0 #d8d8d8"></div>
<div class="tab" style="left:453.0px;top:289.0px;width:67.5px;height:25.0px;"></div>
<svg style="left:458.5px;top:292.5px" width="16" height="16" viewBox="0 0 16 16"><path d="M15.02 4.25 L16.06 4.36 L16.06 5.64 L15.02 5.75 L14.68 6.69 L15.40 7.44 L14.58 8.42 L13.72 7.84 L12.85 8.34 L12.92 9.37 L11.66 9.60 L11.37 8.60 L10.39 8.42 L9.78 9.27 L8.67 8.62 L9.09 7.68 L8.45 6.91 L7.44 7.16 L7.00 5.96 L7.94 5.50 L7.94 4.50 L7.00 4.04 L7.44 2.84 L8.45 3.09 L9.09 2.32 L8.67 1.38 L9.78 0.73 L10.39 1.58 L11.37 1.40 L11.66 0.40 L12.92 0.63 L12.85 1.66 L13.72 2.16 L14.58 1.58 L15.40 2.56 L14.68 3.31Z" fill="#dcc67a" stroke="#a89048" stroke-width=".6" stroke-linejoin="round"/><circle cx="11.500" cy="5" r="1.1" fill="#b49a4c"/><path d="M9.92 8.78 L11.26 8.89 L11.26 10.31 L9.92 10.42 L9.58 11.47 L10.59 12.35 L9.76 13.50 L8.61 12.81 L7.72 13.46 L8.03 14.76 L6.67 15.20 L6.15 13.97 L5.05 13.97 L4.53 15.20 L3.17 14.76 L3.48 13.46 L2.59 12.81 L1.44 13.50 L0.61 12.35 L1.62 11.47 L1.28 10.42 L-0.06 10.31 L-0.06 8.89 L1.28 8.78 L1.62 7.73 L0.61 6.85 L1.44 5.70 L2.59 6.39 L3.48 5.74 L3.17 4.44 L4.53 4.00 L5.05 5.23 L6.15 5.23 L6.67 4.00 L8.03 4.44 L7.72 5.74 L8.61 6.39 L9.76 5.70 L10.59 6.85 L9.58 7.73Z" fill="url(#gGear)" stroke="#5e6c7a" stroke-width=".7" stroke-linejoin="round"/><circle cx="5.600" cy="9.600" r="2.600" fill="#c4ced8" stroke="#8896a4" stroke-width=".5"/><circle cx="5.600" cy="9.600" r="1.200" fill="#2a3440"/></svg>
<span class="n" style="left:476.5px;top:294px;">General</span>
<div class="tab" style="left:519.5px;top:289.0px;width:80.3px;height:25.0px;"></div>
<span class="n" style="left:524.8px;top:294px;">Additional Info</span>
<div class="tab" style="left:598.8px;top:289.0px;width:89.7px;height:25.0px;"></div>
<svg style="left:605.0px;top:292.5px" width="16" height="16" viewBox="0 0 16 16"><path d="M3 .8 H9.5 L13 4.3 V15.2 H3Z" fill="#fbfbfb" stroke="#a2a2a8" stroke-width=".9"/><path d="M9.5 .8 V4.3 H13" fill="#e4e4e4" stroke="#a2a2a8" stroke-width=".7"/><path d="M5 7H11M5 9H11M5 11H11M5 13H11" stroke="#c4c4c8" stroke-width=".9"/></svg>
<span class="n" style="left:622.8px;top:294px;">Type Details</span>
<div class="tab" style="left:687.5px;top:289.0px;width:109.3px;height:25.0px;"></div>
<span class="n" style="left:693.3px;top:294px;">Installed Component</span>
<div class="tab" style="left:795.8px;top:289.0px;width:72.2px;height:25.0px;"></div>
<svg style="left:801.5px;top:292.5px" width="16" height="16" viewBox="0 0 16 16"><text x="8" y="13.5" text-anchor="middle" font-family="Liberation Sans" font-size="15.5" fill="#2f9a2f">$</text></svg>
<span class="n" style="left:819.5px;top:294px;">Financial</span>
<div class="tab" style="left:867.0px;top:289.0px;width:52.5px;height:25.0px;"></div>
<svg style="left:873.5px;top:292.5px" width="16" height="16" viewBox="0 0 16 16"><path d="M.5 2.5 L4 1.5 L6.5 2.5 L15.5 2.5 L15.5 14.5 L12 14.5 L11 13.5 L5 13.5 L4 14.5 L.5 14.5Z" fill="#f4ee88" stroke="#5e5640" stroke-width=".9"/><path d="M2.5 5.5H13.5M2.5 7.5H13.5M2.5 9.5H13.5M2.5 11.5H13.5" stroke="#dcd468" stroke-width=".7"/></svg>
<span class="n" style="left:891.8px;top:294px;">Jobs</span>
<div class="" style="left:917.5px;top:287.0px;width:58.5px;height:27.0px;background:#fff;border:1px solid #d9d9d9;border-bottom:none"></div>
<svg style="left:926.0px;top:292.0px" width="16" height="16" viewBox="0 0 16 16"><g stroke-linejoin="round"><path d="M5.300 .8 L9.200 3 L8.600 5.600 L4.900 10.400 L1.900 10.600 L.7 8.200 L3.300 2.200Z" fill="#a9bdce" stroke="#51687f" stroke-width="1.2"/><path d="M4.800 2 L2 8.300 L2.600 9.600 L6.300 3.200Z" fill="#cfdde9"/><path d="M7.500 3.200 L8.600 5.600 L4.900 10.400 L4 9.800Z" fill="#4e647c"/><path d="M6.500 7 L9.200 4.900 L13.300 5.500 L15 7.900 L14.500 11.200 L11.600 12.800 L7.800 12.200 L6.300 9.800Z" fill="#6f879f" stroke="#4a6078" stroke-width="1.1"/><path d="M6.900 7.300 L9.300 5.400 L13 6 L14.400 8 L11.600 9.600 L8 9.300Z" fill="#a9bccd"/><ellipse cx="10.600" cy="7.400" rx="2.300" ry="1.150" fill="#5d7083"/><path d="M7.200 9.200 L8.200 11.800" stroke="#dbe6ef" stroke-width="1.300"/><path d="M8.600 10.600 L11.500 11 L14 9.600" stroke="#90a8be" stroke-width=".9" fill="none"/></g></svg>
<span class="n" style="left:944.0px;top:292px;">Parts</span>
<div class="tab" style="left:976.0px;top:289.0px;width:70.8px;height:25.0px;"></div>
<svg style="left:980.5px;top:292.5px" width="16" height="16" viewBox="0 0 16 16"><circle cx="8" cy="9.200" r="5.700" fill="#f2f5f8" stroke="#8591a0" stroke-width="2"/><circle cx="8" cy="9.200" r="6.600" fill="none" stroke="#5e6b78" stroke-width=".5"/><rect x="6.300" y=".5" width="3.400" height="2.200" rx=".8" fill="#7a8694"/><path d="M8 9.200 V5.500" stroke="#667" stroke-width=".8"/></svg>
<span class="n" style="left:997.8px;top:294px;">Counters</span>
<div class="tab" style="left:1045.8px;top:289.0px;width:103.2px;height:25.0px;"></div>
<svg style="left:1052.0px;top:292.5px" width="16" height="16" viewBox="0 0 16 16"><path d="M1 13.5 H9" stroke="#777" stroke-width="1.4"/><path d="M2.5 2.5 C5 -.5 13 0 13.5 5 C14 10 10.5 12.5 7 12 L3 13 L2 9.5Z" fill="#e0a83a" stroke="#7a5a18" stroke-width=".7"/><circle cx="8.5" cy="5.8" r="2.4" fill="#b8862a" stroke="#6a4a12" stroke-width=".6"/><path d="M12 9 L15.5 12.5 L12 16 L8.5 12.5Z" fill="#fff" stroke="#e02020" stroke-width="1.2"/><circle cx="12" cy="12.5" r="1" fill="#e02020"/></svg>
<span class="n" style="left:1069.8px;top:294px;">Measure Points</span>
<div class="tab" style="left:1148.0px;top:289.0px;width:117.5px;height:25.0px;"></div>
<svg style="left:1155.0px;top:292.5px" width="16" height="16" viewBox="0 0 16 16"><g transform="rotate(30 8 8)"><path d="M7.200 11.200 V4 A1.900 1.900 0 0 1 11 4 V12.300 A2.900 2.900 0 0 1 5.200 12.300 V4.800" fill="none" stroke="#a8923e" stroke-width="1.700" stroke-linecap="round"/><path d="M7.200 11.200 V4 A1.900 1.900 0 0 1 11 4 V12.300 A2.900 2.900 0 0 1 5.200 12.300 V4.800" fill="none" stroke="#f4ecc0" stroke-width=".7" stroke-linecap="round"/></g></svg>
<span class="n" style="left:1173.0px;top:294px;">Type Attachments</span>
<div class="tab" style="left:1264.5px;top:289.0px;width:90.3px;height:25.0px;"></div>
<svg style="left:1271.0px;top:292.5px" width="16" height="16" viewBox="0 0 16 16"><g transform="rotate(30 8 8)"><path d="M7.200 11.200 V4 A1.900 1.900 0 0 1 11 4 V12.300 A2.900 2.900 0 0 1 5.200 12.300 V4.800" fill="none" stroke="#a8923e" stroke-width="1.700" stroke-linecap="round"/><path d="M7.200 11.200 V4 A1.900 1.900 0 0 1 11 4 V12.300 A2.900 2.900 0 0 1 5.200 12.300 V4.800" fill="none" stroke="#f4ecc0" stroke-width=".7" stroke-linecap="round"/></g></svg>
<span class="n" style="left:1287.8px;top:294px;">Attachments</span>
<div class="tab" style="left:1353.8px;top:289.0px;width:55.2px;height:25.0px;"></div>
<svg style="left:1360.0px;top:292.5px" width="16" height="16" viewBox="0 0 16 16"><path d="M.8 11.800 C.8 6 3.500 1.600 8 1.600 C12.500 1.600 15.200 5 15.500 9.500 C15.600 11.500 13.500 13.200 8.500 14 C4 14.600 .8 13.600 .8 11.800Z" fill="url(#gHelm)" stroke="#8a7014" stroke-width=".7"/><path d="M1.200 11.300 C4.500 12.800 10.500 12.200 15.300 9.300" stroke="#97801c" stroke-width=".7" fill="none"/><path d="M1.500 12.300 C5 13.600 10.500 13.200 15 10.600" stroke="#f6ea8c" stroke-width=".6" fill="none"/><path d="M4.800 4.800 L8 2.400" stroke="#a8901e" stroke-width=".7"/><path d="M3.500 5 C5 3 7 2.300 9 2.400" stroke="#fbf3a8" stroke-width=".9" fill="none"/><path d="M6.300 9 V11.800 M8.300 9.200 V12" stroke="#b09a24" stroke-width=".6"/></svg>
<span class="n" style="left:1377.8px;top:294px;">W.O.</span>
<div class="tab" style="left:1408.0px;top:289.0px;width:63.5px;height:25.0px;"></div>
<svg style="left:1415.0px;top:292.5px" width="16" height="16" viewBox="0 0 16 16"><path d="M.8 8 L6 3 L8.5 4.5 L11 2.5 L15.5 6 L10 12 L7.5 10.8 L5.5 12.8Z" fill="#f8fafc" stroke="#4a5a8a" stroke-width=".8"/><path d="M8.5 4.5 L7.5 10.8" stroke="#4a5a8a" stroke-width=".7"/><path d="M.8 8 L5.5 12.8 L5.8 14 L1 9.5Z M5.5 12.8 L7.5 10.8 L10 12 L15.5 6 L15.5 7.2 L10 13.5 L7.6 12.2 L5.8 14Z" fill="#3a4a9a"/></svg>
<span class="n" style="left:1432.0px;top:294px;">History</span>
<div class="tab" style="left:1470.5px;top:289.0px;width:81.0px;height:25.0px;"></div>
<svg style="left:1477.0px;top:292.5px" width="16" height="16" viewBox="0 0 16 16"><rect x="1.5" y=".8" width="11" height="14" rx="1" fill="url(#gBlue)" stroke="#1a3f78" stroke-width=".8"/><rect x="1.5" y=".8" width="2" height="14" fill="#1a4a90"/><circle cx="11.5" cy="11.5" r="3.8" fill="#f4f6f8" stroke="#7a8692" stroke-width=".9"/><path d="M11.5 11.5 V9 M11.5 11.5 L13.3 12" stroke="#445" stroke-width=".7"/></svg>
<span class="n" style="left:1494.5px;top:294px;">Maint. Log</span>
<div class="tab" style="left:1550.5px;top:289.0px;width:128.0px;height:25.0px;"></div>
<svg style="left:1558.0px;top:292.5px" width="16" height="16" viewBox="0 0 16 16"><path d="M3.5 1 H11 L13.5 3.5 V15 H3.5Z" fill="#fafafa" stroke="#9a9aa6" stroke-width=".7"/><path d="M5.5 11 H11.5 M5.5 13 H11.5" stroke="#b8b8c4" stroke-width=".7"/><path d="M1 8.5 L3.2 6.8 L5.8 10.2 L12.5 2.5 L14.8 4.2 L6 15Z" fill="#2fc02f" stroke="#0e6a0e" stroke-width=".7"/></svg>
<span class="n" style="left:1574.5px;top:294px;">Functions Performed</span>
<div class="tab" style="left:1677.5px;top:289.0px;width:91.5px;height:25.0px;"></div>
<svg style="left:1684.0px;top:292.5px" width="16" height="16" viewBox="0 0 16 16"><rect x=".8" y="1.5" width="14.4" height="12" rx="1.5" fill="#0a3a2a" stroke="#000" stroke-width=".8"/><path d="M2 5 L7 2.8 L7 4.5 L14 4.5 L14 7.5 L7 7.5 L7 9.2Z" fill="#2fd0d0" stroke="#0a5a5a" stroke-width=".5"/><path d="M6 11 L11 7.5 L11 9.5 L14.5 9.5 L14.5 12 L11 12 L11 15.2Z" fill="#38d838" stroke="#0a5a0a" stroke-width=".5"/></svg>
<span class="n" style="left:1701.5px;top:294px;">Rotation Log</span>
<div class="hdr" style="left:474.0px;top:315.0px;width:143.0px;height:17.0px;"></div>
<span class="n c" style="left:444.5px;width:200px;top:317px;">Item No.</span>
<div class="hdr" style="left:617.0px;top:315.0px;width:192.0px;height:17.0px;"></div>
<span class="n c" style="left:612.0px;width:200px;top:317px;">Name</span>
<div class="hdr" style="left:809.0px;top:315.0px;width:180.0px;height:17.0px;"></div>
<span class="n c" style="left:798.0px;width:200px;top:317px;">Makers Ref.</span>
<div class="hdr" style="left:989.0px;top:315.0px;width:64.0px;height:17.0px;"></div>
<span class="n c" style="left:920.0px;width:200px;top:317px;">In Use</span>
<div class="hdr" style="left:1053.0px;top:315.0px;width:58.0px;height:17.0px;"></div>
<span class="n c" style="left:981.0px;width:200px;top:317px;">In Stock</span>
<div class="hdr" style="left:1111.0px;top:315.0px;width:105.0px;height:17.0px;"></div>
<span class="n c" style="left:1062.5px;width:200px;top:317px;">Drawing No.</span>
<div class="hdr" style="left:1216.0px;top:315.0px;width:105.0px;height:17.0px;"></div>
<span class="n c" style="left:1167.5px;width:200px;top:317px;">Positions</span>
<div class="hdr" style="left:1321.0px;top:315.0px;width:111.0px;height:17.0px;"></div>
<span class="n c" style="left:1275.5px;width:200px;top:317px;">Alternative No.</span>
<div class="hdr" style="left:1432.0px;top:315.0px;width:78.0px;height:17.0px;"></div>
<span class="n c" style="left:1370.0px;width:200px;top:317px;">Status</span>
<div class="hdr" style="left:1510.0px;top:315.0px;width:27.0px;height:17.0px;"></div>
<span class="n" style="left:1512.5px;top:317px;">Reg.</span>
<svg style="left:478px;top:319px" width="8" height="8" viewBox="0 0 8 8"><path d="M.8 7 L3.800 .8 L7 7Z" fill="#c8c8c8" stroke="#909090" stroke-width=".8"/></svg>
<div class="" style="left:455.0px;top:332.0px;width:16.0px;height:17.0px;background:#c0c0c0"></div>
<svg style="left:454.5px;top:332px" width="19" height="17" viewBox="0 0 19 17"><path d="M1 4.500 H9 V1 L17.500 8 L9 15 V11.500 H1Z" fill="#f6e21e" stroke="#b89a10" stroke-width="1"/><path d="M2 5.500 H10 V3.200" stroke="#fdf6a0" stroke-width="1" fill="none"/></svg>
<div class="fldw" style="left:475.0px;top:333.0px;width:119.0px;height:18.0px;"></div>
<span class="n" style="left:475.6px;top:334px;">00028652</span>
<div class="btn3" style="left:596.0px;top:332.0px;width:20.0px;height:20.0px;"><div class="dots"></div></div>
<div class="fldw" style="left:618.0px;top:333.0px;width:168.0px;height:18.0px;"></div>
<div class="" style="left:619.0px;top:334.0px;width:166.0px;height:16.0px;overflow:hidden"><span class="n" style="left:.7px;top:0px">BALL BEARING SINGLE ROW, DEEP</span></div>
<div class="btn3" style="left:788.0px;top:332.0px;width:20.0px;height:20.0px;"><div class="dots"></div></div>
<div class="fld" style="left:810.0px;top:333.0px;width:178.0px;height:18.0px;"></div>
<span class="n" style="left:810.5px;top:334px;">770102 IMPA</span>
<div class="fldw" style="left:990.0px;top:333.0px;width:62.0px;height:18.0px;"></div>
<span class="n r" style="right:867.2px;top:334px;">0.00</span>
<div class="fld" style="left:1054.0px;top:333.0px;width:56.0px;height:18.0px;"></div>
<span class="n r" style="right:809.5px;top:334px;">0.00</span>
<div class="fldw" style="left:1112.0px;top:333.0px;width:103.0px;height:18.0px;"></div>
<div class="fldw" style="left:1217.0px;top:333.0px;width:103.0px;height:18.0px;"></div>
<div class="fldw" style="left:1322.0px;top:333.0px;width:109.0px;height:18.0px;"></div>
<div class="fld" style="left:1433.0px;top:333.0px;width:75.0px;height:18.0px;"></div>
<span class="n" style="left:1433.0px;top:334px;">Active</span>
<svg style="left:1514.0px;top:335.0px" width="15" height="15" viewBox="0 0 16 16"><g stroke-linejoin="round"><path d="M5.300 .8 L9.200 3 L8.600 5.600 L4.900 10.400 L1.900 10.600 L.7 8.200 L3.300 2.200Z" fill="#a9bdce" stroke="#51687f" stroke-width="1.2"/><path d="M4.800 2 L2 8.300 L2.600 9.600 L6.300 3.200Z" fill="#cfdde9"/><path d="M7.500 3.200 L8.600 5.600 L4.900 10.400 L4 9.800Z" fill="#4e647c"/><path d="M6.500 7 L9.200 4.900 L13.300 5.500 L15 7.900 L14.500 11.200 L11.600 12.800 L7.800 12.200 L6.300 9.800Z" fill="#6f879f" stroke="#4a6078" stroke-width="1.1"/><path d="M6.900 7.300 L9.300 5.400 L13 6 L14.400 8 L11.600 9.600 L8 9.300Z" fill="#a9bccd"/><ellipse cx="10.600" cy="7.400" rx="2.300" ry="1.150" fill="#5d7083"/><path d="M7.200 9.200 L8.200 11.800" stroke="#dbe6ef" stroke-width="1.300"/><path d="M8.600 10.600 L11.500 11 L14 9.600" stroke="#90a8be" stroke-width=".9" fill="none"/></g></svg>
<div class="fldw" style="left:475.0px;top:354.0px;width:119.0px;height:18.0px;"></div>
<span class="n" style="left:475.6px;top:355px;">00028653</span>
<div class="btn3" style="left:596.0px;top:353.0px;width:20.0px;height:20.0px;"><div class="dots"></div></div>
<div class="fldw" style="left:618.0px;top:354.0px;width:168.0px;height:18.0px;"></div>
<div class="" style="left:619.0px;top:355.0px;width:166.0px;height:16.0px;overflow:hidden"><span class="n" style="left:.7px;top:0px">BALL BEARING SINGLE ROW, DEEP</span></div>
<div class="btn3" style="left:788.0px;top:353.0px;width:20.0px;height:20.0px;"><div class="dots"></div></div>
<div class="fld" style="left:810.0px;top:354.0px;width:178.0px;height:18.0px;"></div>
<span class="n" style="left:810.5px;top:355px;">770103 IMPA</span>
<div class="fldw" style="left:990.0px;top:354.0px;width:62.0px;height:18.0px;"></div>
<span class="n r" style="right:867.2px;top:355px;">0.00</span>
<div class="fld" style="left:1054.0px;top:354.0px;width:56.0px;height:18.0px;"></div>
<span class="n r" style="right:809.5px;top:355px;">0.00</span>
<div class="fldw" style="left:1112.0px;top:354.0px;width:103.0px;height:18.0px;"></div>
<div class="fldw" style="left:1217.0px;top:354.0px;width:103.0px;height:18.0px;"></div>
<div class="fldw" style="left:1322.0px;top:354.0px;width:109.0px;height:18.0px;"></div>
<div class="fld" style="left:1433.0px;top:354.0px;width:75.0px;height:18.0px;"></div>
<span class="n" style="left:1433.0px;top:355px;">Active</span>
<svg style="left:1514.0px;top:356.0px" width="15" height="15" viewBox="0 0 16 16"><g stroke-linejoin="round"><path d="M5.300 .8 L9.200 3 L8.600 5.600 L4.900 10.400 L1.900 10.600 L.7 8.200 L3.300 2.200Z" fill="#a9bdce" stroke="#51687f" stroke-width="1.2"/><path d="M4.800 2 L2 8.300 L2.600 9.600 L6.300 3.200Z" fill="#cfdde9"/><path d="M7.500 3.200 L8.600 5.600 L4.900 10.400 L4 9.800Z" fill="#4e647c"/><path d="M6.500 7 L9.200 4.900 L13.300 5.500 L15 7.900 L14.500 11.200 L11.600 12.800 L7.800 12.200 L6.300 9.800Z" fill="#6f879f" stroke="#4a6078" stroke-width="1.1"/><path d="M6.900 7.300 L9.300 5.400 L13 6 L14.400 8 L11.600 9.600 L8 9.300Z" fill="#a9bccd"/><ellipse cx="10.600" cy="7.400" rx="2.300" ry="1.150" fill="#5d7083"/><path d="M7.200 9.200 L8.200 11.800" stroke="#dbe6ef" stroke-width="1.300"/><path d="M8.600 10.600 L11.500 11 L14 9.600" stroke="#90a8be" stroke-width=".9" fill="none"/></g></svg>
<div class="fldw" style="left:475.0px;top:375.0px;width:119.0px;height:18.0px;"></div>
<span class="n" style="left:475.6px;top:376px;">00028654</span>
<div class="btn3" style="left:596.0px;top:374.0px;width:20.0px;height:20.0px;"><div class="dots"></div></div>
<div class="fldw" style="left:618.0px;top:375.0px;width:168.0px;height:18.0px;"></div>
<div class="" style="left:619.0px;top:376.0px;width:166.0px;height:16.0px;overflow:hidden"><span class="n" style="left:.7px;top:0px">BALL BEARING SINGLE ROW, DEEP</span></div>
<div class="btn3" style="left:788.0px;top:374.0px;width:20.0px;height:20.0px;"><div class="dots"></div></div>
<div class="fld" style="left:810.0px;top:375.0px;width:178.0px;height:18.0px;"></div>
<span class="n" style="left:810.5px;top:376px;">770104 IMPA</span>
<div class="fldw" style="left:990.0px;top:375.0px;width:62.0px;height:18.0px;"></div>
<span class="n r" style="right:867.2px;top:376px;">0.00</span>
<div class="fld" style="left:1054.0px;top:375.0px;width:56.0px;height:18.0px;"></div>
<span class="n r" style="right:809.5px;top:376px;">0.00</span>
<div class="fldw" style="left:1112.0px;top:375.0px;width:103.0px;height:18.0px;"></div>
<div class="fldw" style="left:1217.0px;top:375.0px;width:103.0px;height:18.0px;"></div>
<div class="fldw" style="left:1322.0px;top:375.0px;width:109.0px;height:18.0px;"></div>
<div class="fld" style="left:1433.0px;top:375.0px;width:75.0px;height:18.0px;"></div>
<span class="n" style="left:1433.0px;top:376px;">Active</span>
<svg style="left:1514.0px;top:377.0px" width="15" height="15" viewBox="0 0 16 16"><g stroke-linejoin="round"><path d="M5.300 .8 L9.200 3 L8.600 5.600 L4.900 10.400 L1.900 10.600 L.7 8.200 L3.300 2.200Z" fill="#a9bdce" stroke="#51687f" stroke-width="1.2"/><path d="M4.800 2 L2 8.300 L2.600 9.600 L6.300 3.200Z" fill="#cfdde9"/><path d="M7.500 3.200 L8.600 5.600 L4.900 10.400 L4 9.800Z" fill="#4e647c"/><path d="M6.500 7 L9.200 4.900 L13.300 5.500 L15 7.900 L14.500 11.200 L11.600 12.800 L7.800 12.200 L6.300 9.800Z" fill="#6f879f" stroke="#4a6078" stroke-width="1.1"/><path d="M6.900 7.300 L9.300 5.400 L13 6 L14.400 8 L11.600 9.600 L8 9.300Z" fill="#a9bccd"/><ellipse cx="10.600" cy="7.400" rx="2.300" ry="1.150" fill="#5d7083"/><path d="M7.200 9.200 L8.200 11.800" stroke="#dbe6ef" stroke-width="1.300"/><path d="M8.600 10.600 L11.500 11 L14 9.600" stroke="#90a8be" stroke-width=".9" fill="none"/></g></svg>
<div class="fldw" style="left:475.0px;top:396.0px;width:119.0px;height:18.0px;"></div>
<span class="n" style="left:475.6px;top:397px;">00028655</span>
<div class="btn3" style="left:596.0px;top:395.0px;width:20.0px;height:20.0px;"><div class="dots"></div></div>
<div class="fldw" style="left:618.0px;top:396.0px;width:168.0px;height:18.0px;"></div>
<div class="" style="left:619.0px;top:397.0px;width:166.0px;height:16.0px;overflow:hidden"><span class="n" style="left:.7px;top:0px">BALL BEARING SINGLE ROW, DEEP</span></div>
<div class="btn3" style="left:788.0px;top:395.0px;width:20.0px;height:20.0px;"><div class="dots"></div></div>
<div class="fld" style="left:810.0px;top:396.0px;width:178.0px;height:18.0px;"></div>
<span class="n" style="left:810.5px;top:397px;">770106 IMPA</span>
<div class="fldw" style="left:990.0px;top:396.0px;width:62.0px;height:18.0px;"></div>
<span class="n r" style="right:867.2px;top:397px;">0.00</span>
<div class="fld" style="left:1054.0px;top:396.0px;width:56.0px;height:18.0px;"></div>
<span class="n r" style="right:809.5px;top:397px;">0.00</span>
<div class="fldw" style="left:1112.0px;top:396.0px;width:103.0px;height:18.0px;"></div>
<div class="fldw" style="left:1217.0px;top:396.0px;width:103.0px;height:18.0px;"></div>
<div class="fldw" style="left:1322.0px;top:396.0px;width:109.0px;height:18.0px;"></div>
<div class="fld" style="left:1433.0px;top:396.0px;width:75.0px;height:18.0px;"></div>
<span class="n" style="left:1433.0px;top:397px;">Active</span>
<svg style="left:1514.0px;top:398.0px" width="15" height="15" viewBox="0 0 16 16"><g stroke-linejoin="round"><path d="M5.300 .8 L9.200 3 L8.600 5.600 L4.900 10.400 L1.900 10.600 L.7 8.200 L3.300 2.200Z" fill="#a9bdce" stroke="#51687f" stroke-width="1.2"/><path d="M4.800 2 L2 8.300 L2.600 9.600 L6.300 3.200Z" fill="#cfdde9"/><path d="M7.500 3.200 L8.600 5.600 L4.900 10.400 L4 9.800Z" fill="#4e647c"/><path d="M6.500 7 L9.200 4.900 L13.300 5.500 L15 7.900 L14.500 11.200 L11.600 12.800 L7.800 12.200 L6.300 9.800Z" fill="#6f879f" stroke="#4a6078" stroke-width="1.1"/><path d="M6.900 7.300 L9.300 5.400 L13 6 L14.400 8 L11.600 9.600 L8 9.300Z" fill="#a9bccd"/><ellipse cx="10.600" cy="7.400" rx="2.300" ry="1.150" fill="#5d7083"/><path d="M7.200 9.200 L8.200 11.800" stroke="#dbe6ef" stroke-width="1.300"/><path d="M8.600 10.600 L11.500 11 L14 9.600" stroke="#90a8be" stroke-width=".9" fill="none"/></g></svg>
<div class="fldw" style="left:475.0px;top:417.0px;width:119.0px;height:18.0px;"></div>
<span class="n" style="left:475.6px;top:418px;">00028656</span>
<div class="btn3" style="left:596.0px;top:416.0px;width:20.0px;height:20.0px;"><div class="dots"></div></div>
<div class="fldw" style="left:618.0px;top:417.0px;width:168.0px;height:18.0px;"></div>
<div class="" style="left:619.0px;top:418.0px;width:166.0px;height:16.0px;overflow:hidden"><span class="n" style="left:.7px;top:0px">BALL BEARING SINGLE ROW, DEEP</span></div>
<div class="btn3" style="left:788.0px;top:416.0px;width:20.0px;height:20.0px;"><div class="dots"></div></div>
<div class="fld" style="left:810.0px;top:417.0px;width:178.0px;height:18.0px;"></div>
<span class="n" style="left:810.5px;top:418px;">770107 IMPA</span>
<div class="fldw" style="left:990.0px;top:417.0px;width:62.0px;height:18.0px;"></div>
<span class="n r" style="right:867.2px;top:418px;">0.00</span>
<div class="fld" style="left:1054.0px;top:417.0px;width:56.0px;height:18.0px;"></div>
<span class="n r" style="right:809.5px;top:418px;">0.00</span>
<div class="fldw" style="left:1112.0px;top:417.0px;width:103.0px;height:18.0px;"></div>
<div class="fldw" style="left:1217.0px;top:417.0px;width:103.0px;height:18.0px;"></div>
<div class="fldw" style="left:1322.0px;top:417.0px;width:109.0px;height:18.0px;"></div>
<div class="fld" style="left:1433.0px;top:417.0px;width:75.0px;height:18.0px;"></div>
<span class="n" style="left:1433.0px;top:418px;">Active</span>
<svg style="left:1514.0px;top:419.0px" width="15" height="15" viewBox="0 0 16 16"><g stroke-linejoin="round"><path d="M5.300 .8 L9.200 3 L8.600 5.600 L4.900 10.400 L1.900 10.600 L.7 8.200 L3.300 2.200Z" fill="#a9bdce" stroke="#51687f" stroke-width="1.2"/><path d="M4.800 2 L2 8.300 L2.600 9.600 L6.300 3.200Z" fill="#cfdde9"/><path d="M7.500 3.200 L8.600 5.600 L4.900 10.400 L4 9.800Z" fill="#4e647c"/><path d="M6.500 7 L9.200 4.900 L13.300 5.500 L15 7.900 L14.500 11.200 L11.600 12.800 L7.800 12.200 L6.300 9.800Z" fill="#6f879f" stroke="#4a6078" stroke-width="1.1"/><path d="M6.900 7.300 L9.300 5.400 L13 6 L14.400 8 L11.600 9.600 L8 9.300Z" fill="#a9bccd"/><ellipse cx="10.600" cy="7.400" rx="2.300" ry="1.150" fill="#5d7083"/><path d="M7.200 9.200 L8.200 11.800" stroke="#dbe6ef" stroke-width="1.300"/><path d="M8.600 10.600 L11.500 11 L14 9.600" stroke="#90a8be" stroke-width=".9" fill="none"/></g></svg>
<div class="fldw" style="left:475.0px;top:438.0px;width:119.0px;height:18.0px;"></div>
<span class="n" style="left:475.6px;top:439px;">00028657</span>
<div class="btn3" style="left:596.0px;top:437.0px;width:20.0px;height:20.0px;"><div class="dots"></div></div>
<div class="fldw" style="left:618.0px;top:438.0px;width:168.0px;height:18.0px;"></div>
<div class="" style="left:619.0px;top:439.0px;width:166.0px;height:16.0px;overflow:hidden"><span class="n" style="left:.7px;top:0px">BALL BEARING SINGLE ROW, DEEP</span></div>
<div class="btn3" style="left:788.0px;top:437.0px;width:20.0px;height:20.0px;"><div class="dots"></div></div>
<div class="fld" style="left:810.0px;top:438.0px;width:178.0px;height:18.0px;"></div>
<span class="n" style="left:810.5px;top:439px;">770108 IMPA</span>
<div class="fldw" style="left:990.0px;top:438.0px;width:62.0px;height:18.0px;"></div>
<span class="n r" style="right:867.2px;top:439px;">0.00</span>
<div class="fld" style="left:1054.0px;top:438.0px;width:56.0px;height:18.0px;"></div>
<span class="n r" style="right:809.5px;top:439px;">0.00</span>
<div class="fldw" style="left:1112.0px;top:438.0px;width:103.0px;height:18.0px;"></div>
<div class="fldw" style="left:1217.0px;top:438.0px;width:103.0px;height:18.0px;"></div>
<div class="fldw" style="left:1322.0px;top:438.0px;width:109.0px;height:18.0px;"></div>
<div class="fld" style="left:1433.0px;top:438.0px;width:75.0px;height:18.0px;"></div>
<span class="n" style="left:1433.0px;top:439px;">Active</span>
<svg style="left:1514.0px;top:440.0px" width="15" height="15" viewBox="0 0 16 16"><g stroke-linejoin="round"><path d="M5.300 .8 L9.200 3 L8.600 5.600 L4.900 10.400 L1.900 10.600 L.7 8.200 L3.300 2.200Z" fill="#a9bdce" stroke="#51687f" stroke-width="1.2"/><path d="M4.800 2 L2 8.300 L2.600 9.600 L6.300 3.200Z" fill="#cfdde9"/><path d="M7.500 3.200 L8.600 5.600 L4.900 10.400 L4 9.800Z" fill="#4e647c"/><path d="M6.500 7 L9.200 4.900 L13.300 5.500 L15 7.900 L14.500 11.200 L11.600 12.800 L7.800 12.200 L6.300 9.800Z" fill="#6f879f" stroke="#4a6078" stroke-width="1.1"/><path d="M6.900 7.300 L9.300 5.400 L13 6 L14.400 8 L11.600 9.600 L8 9.300Z" fill="#a9bccd"/><ellipse cx="10.600" cy="7.400" rx="2.300" ry="1.150" fill="#5d7083"/><path d="M7.200 9.200 L8.200 11.800" stroke="#dbe6ef" stroke-width="1.300"/><path d="M8.600 10.600 L11.500 11 L14 9.600" stroke="#90a8be" stroke-width=".9" fill="none"/></g></svg>
<div class="fldw" style="left:475.0px;top:459.0px;width:119.0px;height:18.0px;"></div>
<span class="n" style="left:475.6px;top:460px;">00028658</span>
<div class="btn3" style="left:596.0px;top:458.0px;width:20.0px;height:20.0px;"><div class="dots"></div></div>
<div class="fldw" style="left:618.0px;top:459.0px;width:168.0px;height:18.0px;"></div>
<div class="" style="left:619.0px;top:460.0px;width:166.0px;height:16.0px;overflow:hidden"><span class="n" style="left:.7px;top:0px">BALL BEARING SINGLE ROW, DEEP</span></div>
<div class="btn3" style="left:788.0px;top:458.0px;width:20.0px;height:20.0px;"><div class="dots"></div></div>
<div class="fld" style="left:810.0px;top:459.0px;width:178.0px;height:18.0px;"></div>
<span class="n" style="left:810.5px;top:460px;">770111 IMPA</span>
<div class="fldw" style="left:990.0px;top:459.0px;width:62.0px;height:18.0px;"></div>
<span class="n r" style="right:867.2px;top:460px;">0.00</span>
<div class="fld" style="left:1054.0px;top:459.0px;width:56.0px;height:18.0px;"></div>
<span class="n r" style="right:809.5px;top:460px;">0.00</span>
<div class="fldw" style="left:1112.0px;top:459.0px;width:103.0px;height:18.0px;"></div>
<div class="fldw" style="left:1217.0px;top:459.0px;width:103.0px;height:18.0px;"></div>
<div class="fldw" style="left:1322.0px;top:459.0px;width:109.0px;height:18.0px;"></div>
<div class="fld" style="left:1433.0px;top:459.0px;width:75.0px;height:18.0px;"></div>
<span class="n" style="left:1433.0px;top:460px;">Active</span>
<svg style="left:1514.0px;top:461.0px" width="15" height="15" viewBox="0 0 16 16"><g stroke-linejoin="round"><path d="M5.300 .8 L9.200 3 L8.600 5.600 L4.900 10.400 L1.900 10.600 L.7 8.200 L3.300 2.200Z" fill="#a9bdce" stroke="#51687f" stroke-width="1.2"/><path d="M4.800 2 L2 8.300 L2.600 9.600 L6.300 3.200Z" fill="#cfdde9"/><path d="M7.500 3.200 L8.600 5.600 L4.900 10.400 L4 9.800Z" fill="#4e647c"/><path d="M6.500 7 L9.200 4.900 L13.300 5.500 L15 7.900 L14.500 11.200 L11.600 12.800 L7.800 12.200 L6.300 9.800Z" fill="#6f879f" stroke="#4a6078" stroke-width="1.1"/><path d="M6.900 7.300 L9.300 5.400 L13 6 L14.400 8 L11.600 9.600 L8 9.300Z" fill="#a9bccd"/><ellipse cx="10.600" cy="7.400" rx="2.300" ry="1.150" fill="#5d7083"/><path d="M7.200 9.200 L8.200 11.800" stroke="#dbe6ef" stroke-width="1.300"/><path d="M8.600 10.600 L11.500 11 L14 9.600" stroke="#90a8be" stroke-width=".9" fill="none"/></g></svg>
<div class="fldw" style="left:475.0px;top:480.0px;width:119.0px;height:18.0px;"></div>
<span class="n" style="left:475.6px;top:481px;">00028659</span>
<div class="btn3" style="left:596.0px;top:479.0px;width:20.0px;height:20.0px;"><div class="dots"></div></div>
<div class="fldw" style="left:618.0px;top:480.0px;width:168.0px;height:18.0px;"></div>
<div class="" style="left:619.0px;top:481.0px;width:166.0px;height:16.0px;overflow:hidden"><span class="n" style="left:.7px;top:0px">BALL BEARING SINGLE ROW, DEEP</span></div>
<div class="btn3" style="left:788.0px;top:479.0px;width:20.0px;height:20.0px;"><div class="dots"></div></div>
<div class="fld" style="left:810.0px;top:480.0px;width:178.0px;height:18.0px;"></div>
<span class="n" style="left:810.5px;top:481px;">770113 IMPA</span>
<div class="fldw" style="left:990.0px;top:480.0px;width:62.0px;height:18.0px;"></div>
<span class="n r" style="right:867.2px;top:481px;">0.00</span>
<div class="fld" style="left:1054.0px;top:480.0px;width:56.0px;height:18.0px;"></div>
<span class="n r" style="right:809.5px;top:481px;">0.00</span>
<div class="fldw" style="left:1112.0px;top:480.0px;width:103.0px;height:18.0px;"></div>
<div class="fldw" style="left:1217.0px;top:480.0px;width:103.0px;height:18.0px;"></div>
<div class="fldw" style="left:1322.0px;top:480.0px;width:109.0px;height:18.0px;"></div>
<div class="fld" style="left:1433.0px;top:480.0px;width:75.0px;height:18.0px;"></div>
<span class="n" style="left:1433.0px;top:481px;">Active</span>
<svg style="left:1514.0px;top:482.0px" width="15" height="15" viewBox="0 0 16 16"><g stroke-linejoin="round"><path d="M5.300 .8 L9.200 3 L8.600 5.600 L4.900 10.400 L1.900 10.600 L.7 8.200 L3.300 2.200Z" fill="#a9bdce" stroke="#51687f" stroke-width="1.2"/><path d="M4.800 2 L2 8.300 L2.600 9.600 L6.300 3.200Z" fill="#cfdde9"/><path d="M7.500 3.200 L8.600 5.600 L4.900 10.400 L4 9.800Z" fill="#4e647c"/><path d="M6.500 7 L9.200 4.900 L13.300 5.500 L15 7.900 L14.500 11.200 L11.600 12.800 L7.800 12.200 L6.300 9.800Z" fill="#6f879f" stroke="#4a6078" stroke-width="1.1"/><path d="M6.900 7.300 L9.300 5.400 L13 6 L14.400 8 L11.600 9.600 L8 9.300Z" fill="#a9bccd"/><ellipse cx="10.600" cy="7.400" rx="2.300" ry="1.150" fill="#5d7083"/><path d="M7.200 9.200 L8.200 11.800" stroke="#dbe6ef" stroke-width="1.300"/><path d="M8.600 10.600 L11.500 11 L14 9.600" stroke="#90a8be" stroke-width=".9" fill="none"/></g></svg>
<div class="fldw" style="left:475.0px;top:501.0px;width:119.0px;height:18.0px;"></div>
<span class="n" style="left:475.6px;top:502px;">00028660</span>
<div class="btn3" style="left:596.0px;top:500.0px;width:20.0px;height:20.0px;"><div class="dots"></div></div>
<div class="fldw" style="left:618.0px;top:501.0px;width:168.0px;height:18.0px;"></div>
<div class="" style="left:619.0px;top:502.0px;width:166.0px;height:16.0px;overflow:hidden"><span class="n" style="left:.7px;top:0px">BALL BEARING SINGLE ROW, DEEP</span></div>
<div class="btn3" style="left:788.0px;top:500.0px;width:20.0px;height:20.0px;"><div class="dots"></div></div>
<div class="fld" style="left:810.0px;top:501.0px;width:178.0px;height:18.0px;"></div>
<span class="n" style="left:810.5px;top:502px;">770118 IMPA</span>
<div class="fldw" style="left:990.0px;top:501.0px;width:62.0px;height:18.0px;"></div>
<span class="n r" style="right:867.2px;top:502px;">0.00</span>
<div class="fld" style="left:1054.0px;top:501.0px;width:56.0px;height:18.0px;"></div>
<span class="n r" style="right:809.5px;top:502px;">0.00</span>
<div class="fldw" style="left:1112.0px;top:501.0px;width:103.0px;height:18.0px;"></div>
<div class="fldw" style="left:1217.0px;top:501.0px;width:103.0px;height:18.0px;"></div>
<div class="fldw" style="left:1322.0px;top:501.0px;width:109.0px;height:18.0px;"></div>
<div class="fld" style="left:1433.0px;top:501.0px;width:75.0px;height:18.0px;"></div>
<span class="n" style="left:1433.0px;top:502px;">Active</span>
<svg style="left:1514.0px;top:503.0px" width="15" height="15" viewBox="0 0 16 16"><g stroke-linejoin="round"><path d="M5.300 .8 L9.200 3 L8.600 5.600 L4.900 10.400 L1.900 10.600 L.7 8.200 L3.300 2.200Z" fill="#a9bdce" stroke="#51687f" stroke-width="1.2"/><path d="M4.800 2 L2 8.300 L2.600 9.600 L6.300 3.200Z" fill="#cfdde9"/><path d="M7.500 3.200 L8.600 5.600 L4.900 10.400 L4 9.800Z" fill="#4e647c"/><path d="M6.500 7 L9.200 4.900 L13.300 5.500 L15 7.900 L14.500 11.200 L11.600 12.800 L7.800 12.200 L6.300 9.800Z" fill="#6f879f" stroke="#4a6078" stroke-width="1.1"/><path d="M6.900 7.300 L9.300 5.400 L13 6 L14.400 8 L11.600 9.600 L8 9.300Z" fill="#a9bccd"/><ellipse cx="10.600" cy="7.400" rx="2.300" ry="1.150" fill="#5d7083"/><path d="M7.200 9.200 L8.200 11.800" stroke="#dbe6ef" stroke-width="1.300"/><path d="M8.600 10.600 L11.500 11 L14 9.600" stroke="#90a8be" stroke-width=".9" fill="none"/></g></svg>
<div class="fldw" style="left:475.0px;top:522.0px;width:119.0px;height:18.0px;"></div>
<span class="n" style="left:475.6px;top:523px;">00028661</span>
<div class="btn3" style="left:596.0px;top:521.0px;width:20.0px;height:20.0px;"><div class="dots"></div></div>
<div class="fldw" style="left:618.0px;top:522.0px;width:168.0px;height:18.0px;"></div>
<div class="" style="left:619.0px;top:523.0px;width:166.0px;height:16.0px;overflow:hidden"><span class="n" style="left:.7px;top:0px">BALL BEARING SINGLE ROW, DEEP</span></div>
<div class="btn3" style="left:788.0px;top:521.0px;width:20.0px;height:20.0px;"><div class="dots"></div></div>
<div class="fld" style="left:810.0px;top:522.0px;width:178.0px;height:18.0px;"></div>
<span class="n" style="left:810.5px;top:523px;">770120 IMPA</span>
<div class="fldw" style="left:990.0px;top:522.0px;width:62.0px;height:18.0px;"></div>
<span class="n r" style="right:867.2px;top:523px;">0.00</span>
<div class="fld" style="left:1054.0px;top:522.0px;width:56.0px;height:18.0px;"></div>
<span class="n r" style="right:809.5px;top:523px;">0.00</span>
<div class="fldw" style="left:1112.0px;top:522.0px;width:103.0px;height:18.0px;"></div>
<div class="fldw" style="left:1217.0px;top:522.0px;width:103.0px;height:18.0px;"></div>
<div class="fldw" style="left:1322.0px;top:522.0px;width:109.0px;height:18.0px;"></div>
<div class="fld" style="left:1433.0px;top:522.0px;width:75.0px;height:18.0px;"></div>
<span class="n" style="left:1433.0px;top:523px;">Active</span>
<svg style="left:1514.0px;top:524.0px" width="15" height="15" viewBox="0 0 16 16"><g stroke-linejoin="round"><path d="M5.300 .8 L9.200 3 L8.600 5.600 L4.900 10.400 L1.900 10.600 L.7 8.200 L3.300 2.200Z" fill="#a9bdce" stroke="#51687f" stroke-width="1.2"/><path d="M4.800 2 L2 8.300 L2.600 9.600 L6.300 3.200Z" fill="#cfdde9"/><path d="M7.500 3.200 L8.600 5.600 L4.900 10.400 L4 9.800Z" fill="#4e647c"/><path d="M6.500 7 L9.200 4.900 L13.300 5.500 L15 7.900 L14.500 11.200 L11.600 12.800 L7.800 12.200 L6.300 9.800Z" fill="#6f879f" stroke="#4a6078" stroke-width="1.1"/><path d="M6.900 7.300 L9.300 5.400 L13 6 L14.400 8 L11.600 9.600 L8 9.300Z" fill="#a9bccd"/><ellipse cx="10.600" cy="7.400" rx="2.300" ry="1.150" fill="#5d7083"/><path d="M7.200 9.200 L8.200 11.800" stroke="#dbe6ef" stroke-width="1.300"/><path d="M8.600 10.600 L11.500 11 L14 9.600" stroke="#90a8be" stroke-width=".9" fill="none"/></g></svg>
<div class="fldw" style="left:475.0px;top:543.0px;width:119.0px;height:18.0px;"></div>
<span class="n" style="left:475.6px;top:544px;">00028662</span>
<div class="btn3" style="left:596.0px;top:542.0px;width:20.0px;height:20.0px;"><div class="dots"></div></div>
<div class="fldw" style="left:618.0px;top:543.0px;width:168.0px;height:18.0px;"></div>
<div class="" style="left:619.0px;top:544.0px;width:166.0px;height:16.0px;overflow:hidden"><span class="n" style="left:.7px;top:0px">BALL BEARING SINGLE ROW, DEEP</span></div>
<div class="btn3" style="left:788.0px;top:542.0px;width:20.0px;height:20.0px;"><div class="dots"></div></div>
<div class="fld" style="left:810.0px;top:543.0px;width:178.0px;height:18.0px;"></div>
<span class="n" style="left:810.5px;top:544px;">770122 IMPA</span>
<div class="fldw" style="left:990.0px;top:543.0px;width:62.0px;height:18.0px;"></div>
<span class="n r" style="right:867.2px;top:544px;">0.00</span>
<div class="fld" style="left:1054.0px;top:543.0px;width:56.0px;height:18.0px;"></div>
<span class="n r" style="right:809.5px;top:544px;">0.00</span>
<div class="fldw" style="left:1112.0px;top:543.0px;width:103.0px;height:18.0px;"></div>
<div class="fldw" style="left:1217.0px;top:543.0px;width:103.0px;height:18.0px;"></div>
<div class="fldw" style="left:1322.0px;top:543.0px;width:109.0px;height:18.0px;"></div>
<div class="fld" style="left:1433.0px;top:543.0px;width:75.0px;height:18.0px;"></div>
<span class="n" style="left:1433.0px;top:544px;">Active</span>
<svg style="left:1514.0px;top:545.0px" width="15" height="15" viewBox="0 0 16 16"><g stroke-linejoin="round"><path d="M5.300 .8 L9.200 3 L8.600 5.600 L4.900 10.400 L1.900 10.600 L.7 8.200 L3.300 2.200Z" fill="#a9bdce" stroke="#51687f" stroke-width="1.2"/><path d="M4.800 2 L2 8.300 L2.600 9.600 L6.300 3.200Z" fill="#cfdde9"/><path d="M7.500 3.200 L8.600 5.600 L4.900 10.400 L4 9.800Z" fill="#4e647c"/><path d="M6.500 7 L9.200 4.900 L13.300 5.500 L15 7.900 L14.500 11.200 L11.600 12.800 L7.800 12.200 L6.300 9.800Z" fill="#6f879f" stroke="#4a6078" stroke-width="1.1"/><path d="M6.900 7.300 L9.300 5.400 L13 6 L14.400 8 L11.600 9.600 L8 9.300Z" fill="#a9bccd"/><ellipse cx="10.600" cy="7.400" rx="2.300" ry="1.150" fill="#5d7083"/><path d="M7.200 9.200 L8.200 11.800" stroke="#dbe6ef" stroke-width="1.300"/><path d="M8.600 10.600 L11.500 11 L14 9.600" stroke="#90a8be" stroke-width=".9" fill="none"/></g></svg>
<div class="fldw" style="left:475.0px;top:564.0px;width:119.0px;height:18.0px;"></div>
<span class="n" style="left:475.6px;top:565px;">00028663</span>
<div class="btn3" style="left:596.0px;top:563.0px;width:20.0px;height:20.0px;"><div class="dots"></div></div>
<div class="fldw" style="left:618.0px;top:564.0px;width:168.0px;height:18.0px;"></div>
<div class="" style="left:619.0px;top:565.0px;width:166.0px;height:16.0px;overflow:hidden"><span class="n" style="left:.7px;top:0px">BALL BEARING SINGLE ROW, DEEP</span></div>
<div class="btn3" style="left:788.0px;top:563.0px;width:20.0px;height:20.0px;"><div class="dots"></div></div>
<div class="fld" style="left:810.0px;top:564.0px;width:178.0px;height:18.0px;"></div>
<span class="n" style="left:810.5px;top:565px;">770126 IMPA</span>
<div class="fldw" style="left:990.0px;top:564.0px;width:62.0px;height:18.0px;"></div>
<span class="n r" style="right:867.2px;top:565px;">0.00</span>
<div class="fld" style="left:1054.0px;top:564.0px;width:56.0px;height:18.0px;"></div>
<span class="n r" style="right:809.5px;top:565px;">0.00</span>
<div class="fldw" style="left:1112.0px;top:564.0px;width:103.0px;height:18.0px;"></div>
<div class="fldw" style="left:1217.0px;top:564.0px;width:103.0px;height:18.0px;"></div>
<div class="fldw" style="left:1322.0px;top:564.0px;width:109.0px;height:18.0px;"></div>
<div class="fld" style="left:1433.0px;top:564.0px;width:75.0px;height:18.0px;"></div>
<span class="n" style="left:1433.0px;top:565px;">Active</span>
<svg style="left:1514.0px;top:566.0px" width="15" height="15" viewBox="0 0 16 16"><g stroke-linejoin="round"><path d="M5.300 .8 L9.200 3 L8.600 5.600 L4.900 10.400 L1.900 10.600 L.7 8.200 L3.300 2.200Z" fill="#a9bdce" stroke="#51687f" stroke-width="1.2"/><path d="M4.800 2 L2 8.300 L2.600 9.600 L6.300 3.200Z" fill="#cfdde9"/><path d="M7.500 3.200 L8.600 5.600 L4.900 10.400 L4 9.800Z" fill="#4e647c"/><path d="M6.500 7 L9.200 4.900 L13.300 5.500 L15 7.900 L14.500 11.200 L11.600 12.800 L7.800 12.200 L6.300 9.800Z" fill="#6f879f" stroke="#4a6078" stroke-width="1.1"/><path d="M6.900 7.300 L9.300 5.400 L13 6 L14.400 8 L11.600 9.600 L8 9.300Z" fill="#a9bccd"/><ellipse cx="10.600" cy="7.400" rx="2.300" ry="1.150" fill="#5d7083"/><path d="M7.200 9.200 L8.200 11.800" stroke="#dbe6ef" stroke-width="1.300"/><path d="M8.600 10.600 L11.500 11 L14 9.600" stroke="#90a8be" stroke-width=".9" fill="none"/></g></svg>
<div class="fldw" style="left:475.0px;top:585.0px;width:119.0px;height:18.0px;"></div>
<span class="n" style="left:475.6px;top:586px;">00028664</span>
<div class="btn3" style="left:596.0px;top:584.0px;width:20.0px;height:20.0px;"><div class="dots"></div></div>
<div class="fldw" style="left:618.0px;top:585.0px;width:168.0px;height:18.0px;"></div>
<div class="" style="left:619.0px;top:586.0px;width:166.0px;height:16.0px;overflow:hidden"><span class="n" style="left:.7px;top:0px">BALL BEARING SINGLE ROW, DEEP</span></div>
<div class="btn3" style="left:788.0px;top:584.0px;width:20.0px;height:20.0px;"><div class="dots"></div></div>
<div class="fld" style="left:810.0px;top:585.0px;width:178.0px;height:18.0px;"></div>
<span class="n" style="left:810.5px;top:586px;">770129 IMPA</span>
<div class="fldw" style="left:990.0px;top:585.0px;width:62.0px;height:18.0px;"></div>
<span class="n r" style="right:867.2px;top:586px;">0.00</span>
<div class="fld" style="left:1054.0px;top:585.0px;width:56.0px;height:18.0px;"></div>
<span class="n r" style="right:809.5px;top:586px;">0.00</span>
<div class="fldw" style="left:1112.0px;top:585.0px;width:103.0px;height:18.0px;"></div>
<div class="fldw" style="left:1217.0px;top:585.0px;width:103.0px;height:18.0px;"></div>
<div class="fldw" style="left:1322.0px;top:585.0px;width:109.0px;height:18.0px;"></div>
<div class="fld" style="left:1433.0px;top:585.0px;width:75.0px;height:18.0px;"></div>
<span class="n" style="left:1433.0px;top:586px;">Active</span>
<svg style="left:1514.0px;top:587.0px" width="15" height="15" viewBox="0 0 16 16"><g stroke-linejoin="round"><path d="M5.300 .8 L9.200 3 L8.600 5.600 L4.900 10.400 L1.900 10.600 L.7 8.200 L3.300 2.200Z" fill="#a9bdce" stroke="#51687f" stroke-width="1.2"/><path d="M4.800 2 L2 8.300 L2.600 9.600 L6.300 3.200Z" fill="#cfdde9"/><path d="M7.500 3.200 L8.600 5.600 L4.900 10.400 L4 9.800Z" fill="#4e647c"/><path d="M6.500 7 L9.200 4.900 L13.300 5.500 L15 7.900 L14.500 11.200 L11.600 12.800 L7.800 12.200 L6.300 9.800Z" fill="#6f879f" stroke="#4a6078" stroke-width="1.1"/><path d="M6.900 7.300 L9.300 5.400 L13 6 L14.400 8 L11.600 9.600 L8 9.300Z" fill="#a9bccd"/><ellipse cx="10.600" cy="7.400" rx="2.300" ry="1.150" fill="#5d7083"/><path d="M7.200 9.200 L8.200 11.800" stroke="#dbe6ef" stroke-width="1.300"/><path d="M8.600 10.600 L11.500 11 L14 9.600" stroke="#90a8be" stroke-width=".9" fill="none"/></g></svg>
<div class="fldw" style="left:475.0px;top:606.0px;width:119.0px;height:18.0px;"></div>
<span class="n" style="left:475.6px;top:607px;">00028665</span>
<div class="btn3" style="left:596.0px;top:605.0px;width:20.0px;height:20.0px;"><div class="dots"></div></div>
<div class="fldw" style="left:618.0px;top:606.0px;width:168.0px;height:18.0px;"></div>
<div class="" style="left:619.0px;top:607.0px;width:166.0px;height:16.0px;overflow:hidden"><span class="n" style="left:.7px;top:0px">BALL BEARING SINGLE ROW, DEEP</span></div>
<div class="btn3" style="left:788.0px;top:605.0px;width:20.0px;height:20.0px;"><div class="dots"></div></div>
<div class="fld" style="left:810.0px;top:606.0px;width:178.0px;height:18.0px;"></div>
<span class="n" style="left:810.5px;top:607px;">770141 IMPA</span>
<div class="fldw" style="left:990.0px;top:606.0px;width:62.0px;height:18.0px;"></div>
<span class="n r" style="right:867.2px;top:607px;">0.00</span>
<div class="fld" style="left:1054.0px;top:606.0px;width:56.0px;height:18.0px;"></div>
<span class="n r" style="right:809.5px;top:607px;">0.00</span>
<div class="fldw" style="left:1112.0px;top:606.0px;width:103.0px;height:18.0px;"></div>
<div class="fldw" style="left:1217.0px;top:606.0px;width:103.0px;height:18.0px;"></div>
<div class="fldw" style="left:1322.0px;top:606.0px;width:109.0px;height:18.0px;"></div>
<div class="fld" style="left:1433.0px;top:606.0px;width:75.0px;height:18.0px;"></div>
<span class="n" style="left:1433.0px;top:607px;">Active</span>
<svg style="left:1514.0px;top:608.0px" width="15" height="15" viewBox="0 0 16 16"><g stroke-linejoin="round"><path d="M5.300 .8 L9.200 3 L8.600 5.600 L4.900 10.400 L1.900 10.600 L.7 8.200 L3.300 2.200Z" fill="#a9bdce" stroke="#51687f" stroke-width="1.2"/><path d="M4.800 2 L2 8.300 L2.600 9.600 L6.300 3.200Z" fill="#cfdde9"/><path d="M7.500 3.200 L8.600 5.600 L4.900 10.400 L4 9.800Z" fill="#4e647c"/><path d="M6.500 7 L9.200 4.900 L13.300 5.500 L15 7.900 L14.500 11.200 L11.600 12.800 L7.800 12.200 L6.300 9.800Z" fill="#6f879f" stroke="#4a6078" stroke-width="1.1"/><path d="M6.900 7.300 L9.300 5.400 L13 6 L14.400 8 L11.600 9.600 L8 9.300Z" fill="#a9bccd"/><ellipse cx="10.600" cy="7.400" rx="2.300" ry="1.150" fill="#5d7083"/><path d="M7.200 9.200 L8.200 11.800" stroke="#dbe6ef" stroke-width="1.300"/><path d="M8.600 10.600 L11.500 11 L14 9.600" stroke="#90a8be" stroke-width=".9" fill="none"/></g></svg>
<div class="fldw" style="left:475.0px;top:627.0px;width:119.0px;height:18.0px;"></div>
<span class="n" style="left:475.6px;top:628px;">00028666</span>
<div class="btn3" style="left:596.0px;top:626.0px;width:20.0px;height:20.0px;"><div class="dots"></div></div>
<div class="fldw" style="left:618.0px;top:627.0px;width:168.0px;height:18.0px;"></div>
<div class="" style="left:619.0px;top:628.0px;width:166.0px;height:16.0px;overflow:hidden"><span class="n" style="left:.7px;top:0px">BALL BEARING SINGLE ROW, DEEP</span></div>
<div class="btn3" style="left:788.0px;top:626.0px;width:20.0px;height:20.0px;"><div class="dots"></div></div>
<div class="fld" style="left:810.0px;top:627.0px;width:178.0px;height:18.0px;"></div>
<span class="n" style="left:810.5px;top:628px;">770143 IMPA</span>
<div class="fldw" style="left:990.0px;top:627.0px;width:62.0px;height:18.0px;"></div>
<span class="n r" style="right:867.2px;top:628px;">0.00</span>
<div class="fld" style="left:1054.0px;top:627.0px;width:56.0px;height:18.0px;"></div>
<span class="n r" style="right:809.5px;top:628px;">0.00</span>
<div class="fldw" style="left:1112.0px;top:627.0px;width:103.0px;height:18.0px;"></div>
<div class="fldw" style="left:1217.0px;top:627.0px;width:103.0px;height:18.0px;"></div>
<div class="fldw" style="left:1322.0px;top:627.0px;width:109.0px;height:18.0px;"></div>
<div class="fld" style="left:1433.0px;top:627.0px;width:75.0px;height:18.0px;"></div>
<span class="n" style="left:1433.0px;top:628px;">Active</span>
<svg style="left:1514.0px;top:629.0px" width="15" height="15" viewBox="0 0 16 16"><g stroke-linejoin="round"><path d="M5.300 .8 L9.200 3 L8.600 5.600 L4.900 10.400 L1.900 10.600 L.7 8.200 L3.300 2.200Z" fill="#a9bdce" stroke="#51687f" stroke-width="1.2"/><path d="M4.800 2 L2 8.300 L2.600 9.600 L6.300 3.200Z" fill="#cfdde9"/><path d="M7.500 3.200 L8.600 5.600 L4.900 10.400 L4 9.800Z" fill="#4e647c"/><path d="M6.500 7 L9.200 4.900 L13.300 5.500 L15 7.900 L14.500 11.200 L11.600 12.800 L7.800 12.200 L6.300 9.800Z" fill="#6f879f" stroke="#4a6078" stroke-width="1.1"/><path d="M6.900 7.300 L9.300 5.400 L13 6 L14.400 8 L11.600 9.600 L8 9.300Z" fill="#a9bccd"/><ellipse cx="10.600" cy="7.400" rx="2.300" ry="1.150" fill="#5d7083"/><path d="M7.200 9.200 L8.200 11.800" stroke="#dbe6ef" stroke-width="1.300"/><path d="M8.600 10.600 L11.500 11 L14 9.600" stroke="#90a8be" stroke-width=".9" fill="none"/></g></svg>
<div class="fldw" style="left:475.0px;top:648.0px;width:119.0px;height:18.0px;"></div>
<span class="n" style="left:475.6px;top:649px;">00028667</span>
<div class="btn3" style="left:596.0px;top:647.0px;width:20.0px;height:20.0px;"><div class="dots"></div></div>
<div class="fldw" style="left:618.0px;top:648.0px;width:168.0px;height:18.0px;"></div>
<div class="" style="left:619.0px;top:649.0px;width:166.0px;height:16.0px;overflow:hidden"><span class="n" style="left:.7px;top:0px">BALL BEARING SINGLE ROW, DEEP</span></div>
<div class="btn3" style="left:788.0px;top:647.0px;width:20.0px;height:20.0px;"><div class="dots"></div></div>
<div class="fld" style="left:810.0px;top:648.0px;width:178.0px;height:18.0px;"></div>
<span class="n" style="left:810.5px;top:649px;">770146 IMPA</span>
<div class="fldw" style="left:990.0px;top:648.0px;width:62.0px;height:18.0px;"></div>
<span class="n r" style="right:867.2px;top:649px;">0.00</span>
<div class="fld" style="left:1054.0px;top:648.0px;width:56.0px;height:18.0px;"></div>
<span class="n r" style="right:809.5px;top:649px;">0.00</span>
<div class="fldw" style="left:1112.0px;top:648.0px;width:103.0px;height:18.0px;"></div>
<div class="fldw" style="left:1217.0px;top:648.0px;width:103.0px;height:18.0px;"></div>
<div class="fldw" style="left:1322.0px;top:648.0px;width:109.0px;height:18.0px;"></div>
<div class="fld" style="left:1433.0px;top:648.0px;width:75.0px;height:18.0px;"></div>
<span class="n" style="left:1433.0px;top:649px;">Active</span>
<svg style="left:1514.0px;top:650.0px" width="15" height="15" viewBox="0 0 16 16"><g stroke-linejoin="round"><path d="M5.300 .8 L9.200 3 L8.600 5.600 L4.900 10.400 L1.900 10.600 L.7 8.200 L3.300 2.200Z" fill="#a9bdce" stroke="#51687f" stroke-width="1.2"/><path d="M4.800 2 L2 8.300 L2.600 9.600 L6.300 3.200Z" fill="#cfdde9"/><path d="M7.500 3.200 L8.600 5.600 L4.900 10.400 L4 9.800Z" fill="#4e647c"/><path d="M6.500 7 L9.200 4.900 L13.300 5.500 L15 7.900 L14.500 11.200 L11.600 12.800 L7.800 12.200 L6.300 9.800Z" fill="#6f879f" stroke="#4a6078" stroke-width="1.1"/><path d="M6.900 7.300 L9.300 5.400 L13 6 L14.400 8 L11.600 9.600 L8 9.300Z" fill="#a9bccd"/><ellipse cx="10.600" cy="7.400" rx="2.300" ry="1.150" fill="#5d7083"/><path d="M7.200 9.200 L8.200 11.800" stroke="#dbe6ef" stroke-width="1.300"/><path d="M8.600 10.600 L11.500 11 L14 9.600" stroke="#90a8be" stroke-width=".9" fill="none"/></g></svg>
<div class="fldw" style="left:475.0px;top:669.0px;width:119.0px;height:18.0px;"></div>
<span class="n" style="left:475.6px;top:670px;">00028668</span>
<div class="btn3" style="left:596.0px;top:668.0px;width:20.0px;height:20.0px;"><div class="dots"></div></div>
<div class="fldw" style="left:618.0px;top:669.0px;width:168.0px;height:18.0px;"></div>
<div class="" style="left:619.0px;top:670.0px;width:166.0px;height:16.0px;overflow:hidden"><span class="n" style="left:.7px;top:0px">BALL BEARING SINGLE ROW, DEEP</span></div>
<div class="btn3" style="left:788.0px;top:668.0px;width:20.0px;height:20.0px;"><div class="dots"></div></div>
<div class="fld" style="left:810.0px;top:669.0px;width:178.0px;height:18.0px;"></div>
<span class="n" style="left:810.5px;top:670px;">770150 IMPA</span>
<div class="fldw" style="left:990.0px;top:669.0px;width:62.0px;height:18.0px;"></div>
<span class="n r" style="right:867.2px;top:670px;">0.00</span>
<div class="fld" style="left:1054.0px;top:669.0px;width:56.0px;height:18.0px;"></div>
<span class="n r" style="right:809.5px;top:670px;">0.00</span>
<div class="fldw" style="left:1112.0px;top:669.0px;width:103.0px;height:18.0px;"></div>
<div class="fldw" style="left:1217.0px;top:669.0px;width:103.0px;height:18.0px;"></div>
<div class="fldw" style="left:1322.0px;top:669.0px;width:109.0px;height:18.0px;"></div>
<div class="fld" style="left:1433.0px;top:669.0px;width:75.0px;height:18.0px;"></div>
<span class="n" style="left:1433.0px;top:670px;">Active</span>
<svg style="left:1514.0px;top:671.0px" width="15" height="15" viewBox="0 0 16 16"><g stroke-linejoin="round"><path d="M5.300 .8 L9.200 3 L8.600 5.600 L4.900 10.400 L1.900 10.600 L.7 8.200 L3.300 2.200Z" fill="#a9bdce" stroke="#51687f" stroke-width="1.2"/><path d="M4.800 2 L2 8.300 L2.600 9.600 L6.300 3.200Z" fill="#cfdde9"/><path d="M7.500 3.200 L8.600 5.600 L4.900 10.400 L4 9.800Z" fill="#4e647c"/><path d="M6.500 7 L9.200 4.900 L13.300 5.500 L15 7.900 L14.500 11.200 L11.600 12.800 L7.800 12.200 L6.300 9.800Z" fill="#6f879f" stroke="#4a6078" stroke-width="1.1"/><path d="M6.900 7.300 L9.300 5.400 L13 6 L14.400 8 L11.600 9.600 L8 9.300Z" fill="#a9bccd"/><ellipse cx="10.600" cy="7.400" rx="2.300" ry="1.150" fill="#5d7083"/><path d="M7.200 9.200 L8.200 11.800" stroke="#dbe6ef" stroke-width="1.300"/><path d="M8.600 10.600 L11.500 11 L14 9.600" stroke="#90a8be" stroke-width=".9" fill="none"/></g></svg>
<div class="fldw" style="left:475.0px;top:690.0px;width:119.0px;height:18.0px;"></div>
<span class="n" style="left:475.6px;top:691px;">00028669</span>
<div class="btn3" style="left:596.0px;top:689.0px;width:20.0px;height:20.0px;"><div class="dots"></div></div>
<div class="fldw" style="left:618.0px;top:690.0px;width:168.0px;height:18.0px;"></div>
<div class="" style="left:619.0px;top:691.0px;width:166.0px;height:16.0px;overflow:hidden"><span class="n" style="left:.7px;top:0px">BALL BEARING SINGLE ROW, DEEP</span></div>
<div class="btn3" style="left:788.0px;top:689.0px;width:20.0px;height:20.0px;"><div class="dots"></div></div>
<div class="fld" style="left:810.0px;top:690.0px;width:178.0px;height:18.0px;"></div>
<span class="n" style="left:810.5px;top:691px;">770154 IMPA</span>
<div class="fldw" style="left:990.0px;top:690.0px;width:62.0px;height:18.0px;"></div>
<span class="n r" style="right:867.2px;top:691px;">0.00</span>
<div class="fld" style="left:1054.0px;top:690.0px;width:56.0px;height:18.0px;"></div>
<span class="n r" style="right:809.5px;top:691px;">0.00</span>
<div class="fldw" style="left:1112.0px;top:690.0px;width:103.0px;height:18.0px;"></div>
<div class="fldw" style="left:1217.0px;top:690.0px;width:103.0px;height:18.0px;"></div>
<div class="fldw" style="left:1322.0px;top:690.0px;width:109.0px;height:18.0px;"></div>
<div class="fld" style="left:1433.0px;top:690.0px;width:75.0px;height:18.0px;"></div>
<span class="n" style="left:1433.0px;top:691px;">Active</span>
<svg style="left:1514.0px;top:692.0px" width="15" height="15" viewBox="0 0 16 16"><g stroke-linejoin="round"><path d="M5.300 .8 L9.200 3 L8.600 5.600 L4.900 10.400 L1.900 10.600 L.7 8.200 L3.300 2.200Z" fill="#a9bdce" stroke="#51687f" stroke-width="1.2"/><path d="M4.800 2 L2 8.300 L2.600 9.600 L6.300 3.200Z" fill="#cfdde9"/><path d="M7.500 3.200 L8.600 5.600 L4.900 10.400 L4 9.800Z" fill="#4e647c"/><path d="M6.500 7 L9.200 4.900 L13.300 5.500 L15 7.900 L14.500 11.200 L11.600 12.800 L7.800 12.200 L6.300 9.800Z" fill="#6f879f" stroke="#4a6078" stroke-width="1.1"/><path d="M6.900 7.300 L9.300 5.400 L13 6 L14.400 8 L11.600 9.600 L8 9.300Z" fill="#a9bccd"/><ellipse cx="10.600" cy="7.400" rx="2.300" ry="1.150" fill="#5d7083"/><path d="M7.200 9.200 L8.200 11.800" stroke="#dbe6ef" stroke-width="1.300"/><path d="M8.600 10.600 L11.500 11 L14 9.600" stroke="#90a8be" stroke-width=".9" fill="none"/></g></svg>
<div class="fldw" style="left:475.0px;top:711.0px;width:119.0px;height:18.0px;"></div>
<span class="n" style="left:475.6px;top:712px;">00028670</span>
<div class="btn3" style="left:596.0px;top:710.0px;width:20.0px;height:20.0px;"><div class="dots"></div></div>
<div class="fldw" style="left:618.0px;top:711.0px;width:168.0px;height:18.0px;"></div>
<div class="" style="left:619.0px;top:712.0px;width:166.0px;height:16.0px;overflow:hidden"><span class="n" style="left:.7px;top:0px">BALL BEARING SINGLE ROW, DEEP</span></div>
<div class="btn3" style="left:788.0px;top:710.0px;width:20.0px;height:20.0px;"><div class="dots"></div></div>
<div class="fld" style="left:810.0px;top:711.0px;width:178.0px;height:18.0px;"></div>
<span class="n" style="left:810.5px;top:712px;">770163 IMPA</span>
<div class="fldw" style="left:990.0px;top:711.0px;width:62.0px;height:18.0px;"></div>
<span class="n r" style="right:867.2px;top:712px;">0.00</span>
<div class="fld" style="left:1054.0px;top:711.0px;width:56.0px;height:18.0px;"></div>
<span class="n r" style="right:809.5px;top:712px;">0.00</span>
<div class="fldw" style="left:1112.0px;top:711.0px;width:103.0px;height:18.0px;"></div>
<div class="fldw" style="left:1217.0px;top:711.0px;width:103.0px;height:18.0px;"></div>
<div class="fldw" style="left:1322.0px;top:711.0px;width:109.0px;height:18.0px;"></div>
<div class="fld" style="left:1433.0px;top:711.0px;width:75.0px;height:18.0px;"></div>
<span class="n" style="left:1433.0px;top:712px;">Active</span>
<svg style="left:1514.0px;top:713.0px" width="15" height="15" viewBox="0 0 16 16"><g stroke-linejoin="round"><path d="M5.300 .8 L9.200 3 L8.600 5.600 L4.900 10.400 L1.900 10.600 L.7 8.200 L3.300 2.200Z" fill="#a9bdce" stroke="#51687f" stroke-width="1.2"/><path d="M4.800 2 L2 8.300 L2.600 9.600 L6.300 3.200Z" fill="#cfdde9"/><path d="M7.500 3.200 L8.600 5.600 L4.900 10.400 L4 9.800Z" fill="#4e647c"/><path d="M6.500 7 L9.200 4.900 L13.300 5.500 L15 7.900 L14.500 11.200 L11.600 12.800 L7.800 12.200 L6.300 9.800Z" fill="#6f879f" stroke="#4a6078" stroke-width="1.1"/><path d="M6.900 7.300 L9.300 5.400 L13 6 L14.400 8 L11.600 9.600 L8 9.300Z" fill="#a9bccd"/><ellipse cx="10.600" cy="7.400" rx="2.300" ry="1.150" fill="#5d7083"/><path d="M7.200 9.200 L8.200 11.800" stroke="#dbe6ef" stroke-width="1.300"/><path d="M8.600 10.600 L11.500 11 L14 9.600" stroke="#90a8be" stroke-width=".9" fill="none"/></g></svg>
<div class="fldw" style="left:475.0px;top:732.0px;width:119.0px;height:18.0px;"></div>
<span class="n" style="left:475.6px;top:733px;">00028671</span>
<div class="btn3" style="left:596.0px;top:731.0px;width:20.0px;height:20.0px;"><div class="dots"></div></div>
<div class="fldw" style="left:618.0px;top:732.0px;width:168.0px;height:18.0px;"></div>
<div class="" style="left:619.0px;top:733.0px;width:166.0px;height:16.0px;overflow:hidden"><span class="n" style="left:.7px;top:0px">BALL BEARING SINGLE ROW, DEEP</span></div>
<div class="btn3" style="left:788.0px;top:731.0px;width:20.0px;height:20.0px;"><div class="dots"></div></div>
<div class="fld" style="left:810.0px;top:732.0px;width:178.0px;height:18.0px;"></div>
<span class="n" style="left:810.5px;top:733px;">770165 IMPA</span>
<div class="fldw" style="left:990.0px;top:732.0px;width:62.0px;height:18.0px;"></div>
<span class="n r" style="right:867.2px;top:733px;">0.00</span>
<div class="fld" style="left:1054.0px;top:732.0px;width:56.0px;height:18.0px;"></div>
<span class="n r" style="right:809.5px;top:733px;">0.00</span>
<div class="fldw" style="left:1112.0px;top:732.0px;width:103.0px;height:18.0px;"></div>
<div class="fldw" style="left:1217.0px;top:732.0px;width:103.0px;height:18.0px;"></div>
<div class="fldw" style="left:1322.0px;top:732.0px;width:109.0px;height:18.0px;"></div>
<div class="fld" style="left:1433.0px;top:732.0px;width:75.0px;height:18.0px;"></div>
<span class="n" style="left:1433.0px;top:733px;">Active</span>
<svg style="left:1514.0px;top:734.0px" width="15" height="15" viewBox="0 0 16 16"><g stroke-linejoin="round"><path d="M5.300 .8 L9.200 3 L8.600 5.600 L4.900 10.400 L1.900 10.600 L.7 8.200 L3.300 2.200Z" fill="#a9bdce" stroke="#51687f" stroke-width="1.2"/><path d="M4.800 2 L2 8.300 L2.600 9.600 L6.300 3.200Z" fill="#cfdde9"/><path d="M7.500 3.200 L8.600 5.600 L4.900 10.400 L4 9.800Z" fill="#4e647c"/><path d="M6.500 7 L9.200 4.900 L13.300 5.500 L15 7.900 L14.500 11.200 L11.600 12.800 L7.800 12.200 L6.300 9.800Z" fill="#6f879f" stroke="#4a6078" stroke-width="1.1"/><path d="M6.900 7.300 L9.300 5.400 L13 6 L14.400 8 L11.600 9.600 L8 9.300Z" fill="#a9bccd"/><ellipse cx="10.600" cy="7.400" rx="2.300" ry="1.150" fill="#5d7083"/><path d="M7.200 9.200 L8.200 11.800" stroke="#dbe6ef" stroke-width="1.300"/><path d="M8.600 10.600 L11.500 11 L14 9.600" stroke="#90a8be" stroke-width=".9" fill="none"/></g></svg>
<div class="fldw" style="left:475.0px;top:753.0px;width:119.0px;height:18.0px;"></div>
<span class="n" style="left:475.6px;top:754px;">00028672</span>
<div class="btn3" style="left:596.0px;top:752.0px;width:20.0px;height:20.0px;"><div class="dots"></div></div>
<div class="fldw" style="left:618.0px;top:753.0px;width:168.0px;height:18.0px;"></div>
<div class="" style="left:619.0px;top:754.0px;width:166.0px;height:16.0px;overflow:hidden"><span class="n" style="left:.7px;top:0px">BALL BEARING SINGLE ROW, DEEP</span></div>
<div class="btn3" style="left:788.0px;top:752.0px;width:20.0px;height:20.0px;"><div class="dots"></div></div>
<div class="fld" style="left:810.0px;top:753.0px;width:178.0px;height:18.0px;"></div>
<span class="n" style="left:810.5px;top:754px;">770167 IMPA</span>
<div class="fldw" style="left:990.0px;top:753.0px;width:62.0px;height:18.0px;"></div>
<span class="n r" style="right:867.2px;top:754px;">0.00</span>
<div class="fld" style="left:1054.0px;top:753.0px;width:56.0px;height:18.0px;"></div>
<span class="n r" style="right:809.5px;top:754px;">0.00</span>
<div class="fldw" style="left:1112.0px;top:753.0px;width:103.0px;height:18.0px;"></div>
<div class="fldw" style="left:1217.0px;top:753.0px;width:103.0px;height:18.0px;"></div>
<div class="fldw" style="left:1322.0px;top:753.0px;width:109.0px;height:18.0px;"></div>
<div class="fld" style="left:1433.0px;top:753.0px;width:75.0px;height:18.0px;"></div>
<span class="n" style="left:1433.0px;top:754px;">Active</span>
<svg style="left:1514.0px;top:755.0px" width="15" height="15" viewBox="0 0 16 16"><g stroke-linejoin="round"><path d="M5.300 .8 L9.200 3 L8.600 5.600 L4.900 10.400 L1.900 10.600 L.7 8.200 L3.300 2.200Z" fill="#a9bdce" stroke="#51687f" stroke-width="1.2"/><path d="M4.800 2 L2 8.300 L2.600 9.600 L6.300 3.200Z" fill="#cfdde9"/><path d="M7.500 3.200 L8.600 5.600 L4.900 10.400 L4 9.800Z" fill="#4e647c"/><path d="M6.500 7 L9.200 4.900 L13.300 5.500 L15 7.900 L14.500 11.200 L11.600 12.800 L7.800 12.200 L6.300 9.800Z" fill="#6f879f" stroke="#4a6078" stroke-width="1.1"/><path d="M6.900 7.300 L9.300 5.400 L13 6 L14.400 8 L11.600 9.600 L8 9.300Z" fill="#a9bccd"/><ellipse cx="10.600" cy="7.400" rx="2.300" ry="1.150" fill="#5d7083"/><path d="M7.200 9.200 L8.200 11.800" stroke="#dbe6ef" stroke-width="1.300"/><path d="M8.600 10.600 L11.500 11 L14 9.600" stroke="#90a8be" stroke-width=".9" fill="none"/></g></svg>
<div class="fldw" style="left:475.0px;top:774.0px;width:119.0px;height:18.0px;"></div>
<span class="n" style="left:475.6px;top:775px;">00028673</span>
<div class="btn3" style="left:596.0px;top:773.0px;width:20.0px;height:20.0px;"><div class="dots"></div></div>
<div class="fldw" style="left:618.0px;top:774.0px;width:168.0px;height:18.0px;"></div>
<div class="" style="left:619.0px;top:775.0px;width:166.0px;height:16.0px;overflow:hidden"><span class="n" style="left:.7px;top:0px">BALL BEARING SINGLE ROW, DEEP</span></div>
<div class="btn3" style="left:788.0px;top:773.0px;width:20.0px;height:20.0px;"><div class="dots"></div></div>
<div class="fld" style="left:810.0px;top:774.0px;width:178.0px;height:18.0px;"></div>
<span class="n" style="left:810.5px;top:775px;">770172 IMPA</span>
<div class="fldw" style="left:990.0px;top:774.0px;width:62.0px;height:18.0px;"></div>
<span class="n r" style="right:867.2px;top:775px;">0.00</span>
<div class="fld" style="left:1054.0px;top:774.0px;width:56.0px;height:18.0px;"></div>
<span class="n r" style="right:809.5px;top:775px;">0.00</span>
<div class="fldw" style="left:1112.0px;top:774.0px;width:103.0px;height:18.0px;"></div>
<div class="fldw" style="left:1217.0px;top:774.0px;width:103.0px;height:18.0px;"></div>
<div class="fldw" style="left:1322.0px;top:774.0px;width:109.0px;height:18.0px;"></div>
<div class="fld" style="left:1433.0px;top:774.0px;width:75.0px;height:18.0px;"></div>
<span class="n" style="left:1433.0px;top:775px;">Active</span>
<svg style="left:1514.0px;top:776.0px" width="15" height="15" viewBox="0 0 16 16"><g stroke-linejoin="round"><path d="M5.300 .8 L9.200 3 L8.600 5.600 L4.900 10.400 L1.900 10.600 L.7 8.200 L3.300 2.200Z" fill="#a9bdce" stroke="#51687f" stroke-width="1.2"/><path d="M4.800 2 L2 8.300 L2.600 9.600 L6.300 3.200Z" fill="#cfdde9"/><path d="M7.500 3.200 L8.600 5.600 L4.900 10.400 L4 9.800Z" fill="#4e647c"/><path d="M6.500 7 L9.200 4.900 L13.300 5.500 L15 7.900 L14.500 11.200 L11.600 12.800 L7.800 12.200 L6.300 9.800Z" fill="#6f879f" stroke="#4a6078" stroke-width="1.1"/><path d="M6.900 7.300 L9.300 5.400 L13 6 L14.400 8 L11.600 9.600 L8 9.300Z" fill="#a9bccd"/><ellipse cx="10.600" cy="7.400" rx="2.300" ry="1.150" fill="#5d7083"/><path d="M7.200 9.200 L8.200 11.800" stroke="#dbe6ef" stroke-width="1.300"/><path d="M8.600 10.600 L11.500 11 L14 9.600" stroke="#90a8be" stroke-width=".9" fill="none"/></g></svg>
<div class="fldw" style="left:475.0px;top:795.0px;width:119.0px;height:18.0px;"></div>
<span class="n" style="left:475.6px;top:796px;">00028674</span>
<div class="btn3" style="left:596.0px;top:794.0px;width:20.0px;height:20.0px;"><div class="dots"></div></div>
<div class="fldw" style="left:618.0px;top:795.0px;width:168.0px;height:18.0px;"></div>
<div class="" style="left:619.0px;top:796.0px;width:166.0px;height:16.0px;overflow:hidden"><span class="n" style="left:.7px;top:0px">BALL BEARING SINGLE ROW, DEEP</span></div>
<div class="btn3" style="left:788.0px;top:794.0px;width:20.0px;height:20.0px;"><div class="dots"></div></div>
<div class="fld" style="left:810.0px;top:795.0px;width:178.0px;height:18.0px;"></div>
<span class="n" style="left:810.5px;top:796px;">770174 IMPA</span>
<div class="fldw" style="left:990.0px;top:795.0px;width:62.0px;height:18.0px;"></div>
<span class="n r" style="right:867.2px;top:796px;">0.00</span>
<div class="fld" style="left:1054.0px;top:795.0px;width:56.0px;height:18.0px;"></div>
<span class="n r" style="right:809.5px;top:796px;">0.00</span>
<div class="fldw" style="left:1112.0px;top:795.0px;width:103.0px;height:18.0px;"></div>
<div class="fldw" style="left:1217.0px;top:795.0px;width:103.0px;height:18.0px;"></div>
<div class="fldw" style="left:1322.0px;top:795.0px;width:109.0px;height:18.0px;"></div>
<div class="fld" style="left:1433.0px;top:795.0px;width:75.0px;height:18.0px;"></div>
<span class="n" style="left:1433.0px;top:796px;">Active</span>
<svg style="left:1514.0px;top:797.0px" width="15" height="15" viewBox="0 0 16 16"><g stroke-linejoin="round"><path d="M5.300 .8 L9.200 3 L8.600 5.600 L4.900 10.400 L1.900 10.600 L.7 8.200 L3.300 2.200Z" fill="#a9bdce" stroke="#51687f" stroke-width="1.2"/><path d="M4.800 2 L2 8.300 L2.600 9.600 L6.300 3.200Z" fill="#cfdde9"/><path d="M7.500 3.200 L8.600 5.600 L4.900 10.400 L4 9.800Z" fill="#4e647c"/><path d="M6.500 7 L9.200 4.900 L13.300 5.500 L15 7.900 L14.500 11.200 L11.600 12.800 L7.800 12.200 L6.300 9.800Z" fill="#6f879f" stroke="#4a6078" stroke-width="1.1"/><path d="M6.900 7.300 L9.300 5.400 L13 6 L14.400 8 L11.600 9.600 L8 9.300Z" fill="#a9bccd"/><ellipse cx="10.600" cy="7.400" rx="2.300" ry="1.150" fill="#5d7083"/><path d="M7.200 9.200 L8.200 11.800" stroke="#dbe6ef" stroke-width="1.300"/><path d="M8.600 10.600 L11.500 11 L14 9.600" stroke="#90a8be" stroke-width=".9" fill="none"/></g></svg>
<div class="fldw" style="left:475.0px;top:816.0px;width:119.0px;height:18.0px;"></div>
<span class="n" style="left:475.6px;top:817px;">00028675</span>
<div class="btn3" style="left:596.0px;top:815.0px;width:20.0px;height:20.0px;"><div class="dots"></div></div>
<div class="fldw" style="left:618.0px;top:816.0px;width:168.0px;height:18.0px;"></div>
<div class="" style="left:619.0px;top:817.0px;width:166.0px;height:16.0px;overflow:hidden"><span class="n" style="left:.7px;top:0px">BALL BEARING SINGLE ROW, DEEP</span></div>
<div class="btn3" style="left:788.0px;top:815.0px;width:20.0px;height:20.0px;"><div class="dots"></div></div>
<div class="fld" style="left:810.0px;top:816.0px;width:178.0px;height:18.0px;"></div>
<span class="n" style="left:810.5px;top:817px;">770176 IMPA</span>
<div class="fldw" style="left:990.0px;top:816.0px;width:62.0px;height:18.0px;"></div>
<span class="n r" style="right:867.2px;top:817px;">0.00</span>
<div class="fld" style="left:1054.0px;top:816.0px;width:56.0px;height:18.0px;"></div>
<span class="n r" style="right:809.5px;top:817px;">0.00</span>
<div class="fldw" style="left:1112.0px;top:816.0px;width:103.0px;height:18.0px;"></div>
<div class="fldw" style="left:1217.0px;top:816.0px;width:103.0px;height:18.0px;"></div>
<div class="fldw" style="left:1322.0px;top:816.0px;width:109.0px;height:18.0px;"></div>
<div class="fld" style="left:1433.0px;top:816.0px;width:75.0px;height:18.0px;"></div>
<span class="n" style="left:1433.0px;top:817px;">Active</span>
<svg style="left:1514.0px;top:818.0px" width="15" height="15" viewBox="0 0 16 16"><g stroke-linejoin="round"><path d="M5.300 .8 L9.200 3 L8.600 5.600 L4.900 10.400 L1.900 10.600 L.7 8.200 L3.300 2.200Z" fill="#a9bdce" stroke="#51687f" stroke-width="1.2"/><path d="M4.800 2 L2 8.300 L2.600 9.600 L6.300 3.200Z" fill="#cfdde9"/><path d="M7.500 3.200 L8.600 5.600 L4.900 10.400 L4 9.800Z" fill="#4e647c"/><path d="M6.500 7 L9.200 4.900 L13.300 5.500 L15 7.900 L14.500 11.200 L11.600 12.800 L7.800 12.200 L6.300 9.800Z" fill="#6f879f" stroke="#4a6078" stroke-width="1.1"/><path d="M6.900 7.300 L9.300 5.400 L13 6 L14.400 8 L11.600 9.600 L8 9.300Z" fill="#a9bccd"/><ellipse cx="10.600" cy="7.400" rx="2.300" ry="1.150" fill="#5d7083"/><path d="M7.200 9.200 L8.200 11.800" stroke="#dbe6ef" stroke-width="1.300"/><path d="M8.600 10.600 L11.500 11 L14 9.600" stroke="#90a8be" stroke-width=".9" fill="none"/></g></svg>
<div class="fldw" style="left:475.0px;top:837.0px;width:119.0px;height:18.0px;"></div>
<span class="n" style="left:475.6px;top:838px;">00028676</span>
<div class="btn3" style="left:596.0px;top:836.0px;width:20.0px;height:20.0px;"><div class="dots"></div></div>
<div class="fldw" style="left:618.0px;top:837.0px;width:168.0px;height:18.0px;"></div>
<div class="" style="left:619.0px;top:838.0px;width:166.0px;height:16.0px;overflow:hidden"><span class="n" style="left:.7px;top:0px">BALL BEARING SINGLE ROW, DEEP</span></div>
<div class="btn3" style="left:788.0px;top:836.0px;width:20.0px;height:20.0px;"><div class="dots"></div></div>
<div class="fld" style="left:810.0px;top:837.0px;width:178.0px;height:18.0px;"></div>
<span class="n" style="left:810.5px;top:838px;">770205 IMPA</span>
<div class="fldw" style="left:990.0px;top:837.0px;width:62.0px;height:18.0px;"></div>
<span class="n r" style="right:867.2px;top:838px;">0.00</span>
<div class="fld" style="left:1054.0px;top:837.0px;width:56.0px;height:18.0px;"></div>
<span class="n r" style="right:809.5px;top:838px;">0.00</span>
<div class="fldw" style="left:1112.0px;top:837.0px;width:103.0px;height:18.0px;"></div>
<div class="fldw" style="left:1217.0px;top:837.0px;width:103.0px;height:18.0px;"></div>
<div class="fldw" style="left:1322.0px;top:837.0px;width:109.0px;height:18.0px;"></div>
<div class="fld" style="left:1433.0px;top:837.0px;width:75.0px;height:18.0px;"></div>
<span class="n" style="left:1433.0px;top:838px;">Active</span>
<svg style="left:1514.0px;top:839.0px" width="15" height="15" viewBox="0 0 16 16"><g stroke-linejoin="round"><path d="M5.300 .8 L9.200 3 L8.600 5.600 L4.900 10.400 L1.900 10.600 L.7 8.200 L3.300 2.200Z" fill="#a9bdce" stroke="#51687f" stroke-width="1.2"/><path d="M4.800 2 L2 8.300 L2.600 9.600 L6.300 3.200Z" fill="#cfdde9"/><path d="M7.500 3.200 L8.600 5.600 L4.900 10.400 L4 9.800Z" fill="#4e647c"/><path d="M6.500 7 L9.200 4.900 L13.300 5.500 L15 7.900 L14.500 11.200 L11.600 12.800 L7.800 12.200 L6.300 9.800Z" fill="#6f879f" stroke="#4a6078" stroke-width="1.1"/><path d="M6.900 7.300 L9.300 5.400 L13 6 L14.400 8 L11.600 9.600 L8 9.300Z" fill="#a9bccd"/><ellipse cx="10.600" cy="7.400" rx="2.300" ry="1.150" fill="#5d7083"/><path d="M7.200 9.200 L8.200 11.800" stroke="#dbe6ef" stroke-width="1.300"/><path d="M8.600 10.600 L11.500 11 L14 9.600" stroke="#90a8be" stroke-width=".9" fill="none"/></g></svg>
<div class="fldw" style="left:475.0px;top:858.0px;width:119.0px;height:18.0px;"></div>
<span class="n" style="left:475.6px;top:859px;">00028677</span>
<div class="btn3" style="left:596.0px;top:857.0px;width:20.0px;height:20.0px;"><div class="dots"></div></div>
<div class="fldw" style="left:618.0px;top:858.0px;width:168.0px;height:18.0px;"></div>
<div class="" style="left:619.0px;top:859.0px;width:166.0px;height:16.0px;overflow:hidden"><span class="n" style="left:.7px;top:0px">BALL BEARING SINGLE ROW, DEEP</span></div>
<div class="btn3" style="left:788.0px;top:857.0px;width:20.0px;height:20.0px;"><div class="dots"></div></div>
<div class="fld" style="left:810.0px;top:858.0px;width:178.0px;height:18.0px;"></div>
<span class="n" style="left:810.5px;top:859px;">770207 IMPA</span>
<div class="fldw" style="left:990.0px;top:858.0px;width:62.0px;height:18.0px;"></div>
<span class="n r" style="right:867.2px;top:859px;">0.00</span>
<div class="fld" style="left:1054.0px;top:858.0px;width:56.0px;height:18.0px;"></div>
<span class="n r" style="right:809.5px;top:859px;">0.00</span>
<div class="fldw" style="left:1112.0px;top:858.0px;width:103.0px;height:18.0px;"></div>
<div class="fldw" style="left:1217.0px;top:858.0px;width:103.0px;height:18.0px;"></div>
<div class="fldw" style="left:1322.0px;top:858.0px;width:109.0px;height:18.0px;"></div>
<div class="fld" style="left:1433.0px;top:858.0px;width:75.0px;height:18.0px;"></div>
<span class="n" style="left:1433.0px;top:859px;">Active</span>
<svg style="left:1514.0px;top:860.0px" width="15" height="15" viewBox="0 0 16 16"><g stroke-linejoin="round"><path d="M5.300 .8 L9.200 3 L8.600 5.600 L4.900 10.400 L1.900 10.600 L.7 8.200 L3.300 2.200Z" fill="#a9bdce" stroke="#51687f" stroke-width="1.2"/><path d="M4.800 2 L2 8.300 L2.600 9.600 L6.300 3.200Z" fill="#cfdde9"/><path d="M7.500 3.200 L8.600 5.600 L4.900 10.400 L4 9.800Z" fill="#4e647c"/><path d="M6.500 7 L9.200 4.900 L13.300 5.500 L15 7.900 L14.500 11.200 L11.600 12.800 L7.800 12.200 L6.300 9.800Z" fill="#6f879f" stroke="#4a6078" stroke-width="1.1"/><path d="M6.900 7.300 L9.300 5.400 L13 6 L14.400 8 L11.600 9.600 L8 9.300Z" fill="#a9bccd"/><ellipse cx="10.600" cy="7.400" rx="2.300" ry="1.150" fill="#5d7083"/><path d="M7.200 9.200 L8.200 11.800" stroke="#dbe6ef" stroke-width="1.300"/><path d="M8.600 10.600 L11.500 11 L14 9.600" stroke="#90a8be" stroke-width=".9" fill="none"/></g></svg>
<div class="fldw" style="left:475.0px;top:879.0px;width:119.0px;height:18.0px;"></div>
<span class="n" style="left:475.6px;top:880px;">00028678</span>
<div class="btn3" style="left:596.0px;top:878.0px;width:20.0px;height:20.0px;"><div class="dots"></div></div>
<div class="fldw" style="left:618.0px;top:879.0px;width:168.0px;height:18.0px;"></div>
<div class="" style="left:619.0px;top:880.0px;width:166.0px;height:16.0px;overflow:hidden"><span class="n" style="left:.7px;top:0px">BALL BEARING SINGLE ROW, DEEP</span></div>
<div class="btn3" style="left:788.0px;top:878.0px;width:20.0px;height:20.0px;"><div class="dots"></div></div>
<div class="fld" style="left:810.0px;top:879.0px;width:178.0px;height:18.0px;"></div>
<span class="n" style="left:810.5px;top:880px;">770211 IMPA</span>
<div class="fldw" style="left:990.0px;top:879.0px;width:62.0px;height:18.0px;"></div>
<span class="n r" style="right:867.2px;top:880px;">0.00</span>
<div class="fld" style="left:1054.0px;top:879.0px;width:56.0px;height:18.0px;"></div>
<span class="n r" style="right:809.5px;top:880px;">0.00</span>
<div class="fldw" style="left:1112.0px;top:879.0px;width:103.0px;height:18.0px;"></div>
<div class="fldw" style="left:1217.0px;top:879.0px;width:103.0px;height:18.0px;"></div>
<div class="fldw" style="left:1322.0px;top:879.0px;width:109.0px;height:18.0px;"></div>
<div class="fld" style="left:1433.0px;top:879.0px;width:75.0px;height:18.0px;"></div>
<span class="n" style="left:1433.0px;top:880px;">Active</span>
<svg style="left:1514.0px;top:881.0px" width="15" height="15" viewBox="0 0 16 16"><g stroke-linejoin="round"><path d="M5.300 .8 L9.200 3 L8.600 5.600 L4.900 10.400 L1.900 10.600 L.7 8.200 L3.300 2.200Z" fill="#a9bdce" stroke="#51687f" stroke-width="1.2"/><path d="M4.800 2 L2 8.300 L2.600 9.600 L6.300 3.200Z" fill="#cfdde9"/><path d="M7.500 3.200 L8.600 5.600 L4.900 10.400 L4 9.800Z" fill="#4e647c"/><path d="M6.500 7 L9.200 4.900 L13.300 5.500 L15 7.900 L14.500 11.200 L11.600 12.800 L7.800 12.200 L6.300 9.800Z" fill="#6f879f" stroke="#4a6078" stroke-width="1.1"/><path d="M6.900 7.300 L9.300 5.400 L13 6 L14.400 8 L11.600 9.600 L8 9.300Z" fill="#a9bccd"/><ellipse cx="10.600" cy="7.400" rx="2.300" ry="1.150" fill="#5d7083"/><path d="M7.200 9.200 L8.200 11.800" stroke="#dbe6ef" stroke-width="1.300"/><path d="M8.600 10.600 L11.500 11 L14 9.600" stroke="#90a8be" stroke-width=".9" fill="none"/></g></svg>
<div class="fldw" style="left:475.0px;top:900.0px;width:119.0px;height:18.0px;"></div>
<span class="n" style="left:475.6px;top:901px;">00028679</span>
<div class="btn3" style="left:596.0px;top:899.0px;width:20.0px;height:20.0px;"><div class="dots"></div></div>
<div class="fldw" style="left:618.0px;top:900.0px;width:168.0px;height:18.0px;"></div>
<div class="" style="left:619.0px;top:901.0px;width:166.0px;height:16.0px;overflow:hidden"><span class="n" style="left:.7px;top:0px">BALL BEARING SINGLE ROW, DEEP</span></div>
<div class="btn3" style="left:788.0px;top:899.0px;width:20.0px;height:20.0px;"><div class="dots"></div></div>
<div class="fld" style="left:810.0px;top:900.0px;width:178.0px;height:18.0px;"></div>
<span class="n" style="left:810.5px;top:901px;">770213 IMPA</span>
<div class="fldw" style="left:990.0px;top:900.0px;width:62.0px;height:18.0px;"></div>
<span class="n r" style="right:867.2px;top:901px;">0.00</span>
<div class="fld" style="left:1054.0px;top:900.0px;width:56.0px;height:18.0px;"></div>
<span class="n r" style="right:809.5px;top:901px;">0.00</span>
<div class="fldw" style="left:1112.0px;top:900.0px;width:103.0px;height:18.0px;"></div>
<div class="fldw" style="left:1217.0px;top:900.0px;width:103.0px;height:18.0px;"></div>
<div class="fldw" style="left:1322.0px;top:900.0px;width:109.0px;height:18.0px;"></div>
<div class="fld" style="left:1433.0px;top:900.0px;width:75.0px;height:18.0px;"></div>
<span class="n" style="left:1433.0px;top:901px;">Active</span>
<svg style="left:1514.0px;top:902.0px" width="15" height="15" viewBox="0 0 16 16"><g stroke-linejoin="round"><path d="M5.300 .8 L9.200 3 L8.600 5.600 L4.900 10.400 L1.900 10.600 L.7 8.200 L3.300 2.200Z" fill="#a9bdce" stroke="#51687f" stroke-width="1.2"/><path d="M4.800 2 L2 8.300 L2.600 9.600 L6.300 3.200Z" fill="#cfdde9"/><path d="M7.500 3.200 L8.600 5.600 L4.900 10.400 L4 9.800Z" fill="#4e647c"/><path d="M6.500 7 L9.200 4.900 L13.300 5.500 L15 7.900 L14.500 11.200 L11.600 12.800 L7.800 12.200 L6.300 9.800Z" fill="#6f879f" stroke="#4a6078" stroke-width="1.1"/><path d="M6.900 7.300 L9.300 5.400 L13 6 L14.400 8 L11.600 9.600 L8 9.300Z" fill="#a9bccd"/><ellipse cx="10.600" cy="7.400" rx="2.300" ry="1.150" fill="#5d7083"/><path d="M7.200 9.200 L8.200 11.800" stroke="#dbe6ef" stroke-width="1.300"/><path d="M8.600 10.600 L11.500 11 L14 9.600" stroke="#90a8be" stroke-width=".9" fill="none"/></g></svg>
<div class="fldw" style="left:475.0px;top:921.0px;width:119.0px;height:18.0px;"></div>
<span class="n" style="left:475.6px;top:922px;">00028680</span>
<div class="btn3" style="left:596.0px;top:920.0px;width:20.0px;height:20.0px;"><div class="dots"></div></div>
<div class="fldw" style="left:618.0px;top:921.0px;width:168.0px;height:18.0px;"></div>
<div class="" style="left:619.0px;top:922.0px;width:166.0px;height:16.0px;overflow:hidden"><span class="n" style="left:.7px;top:0px">BALL BEARING SINGLE ROW, DEEP</span></div>
<div class="btn3" style="left:788.0px;top:920.0px;width:20.0px;height:20.0px;"><div class="dots"></div></div>
<div class="fld" style="left:810.0px;top:921.0px;width:178.0px;height:18.0px;"></div>
<span class="n" style="left:810.5px;top:922px;">770216 IMPA</span>
<div class="fldw" style="left:990.0px;top:921.0px;width:62.0px;height:18.0px;"></div>
<span class="n r" style="right:867.2px;top:922px;">0.00</span>
<div class="fld" style="left:1054.0px;top:921.0px;width:56.0px;height:18.0px;"></div>
<span class="n r" style="right:809.5px;top:922px;">0.00</span>
<div class="fldw" style="left:1112.0px;top:921.0px;width:103.0px;height:18.0px;"></div>
<div class="fldw" style="left:1217.0px;top:921.0px;width:103.0px;height:18.0px;"></div>
<div class="fldw" style="left:1322.0px;top:921.0px;width:109.0px;height:18.0px;"></div>
<div class="fld" style="left:1433.0px;top:921.0px;width:75.0px;height:18.0px;"></div>
<span class="n" style="left:1433.0px;top:922px;">Active</span>
<svg style="left:1514.0px;top:923.0px" width="15" height="15" viewBox="0 0 16 16"><g stroke-linejoin="round"><path d="M5.300 .8 L9.200 3 L8.600 5.600 L4.900 10.400 L1.900 10.600 L.7 8.200 L3.300 2.200Z" fill="#a9bdce" stroke="#51687f" stroke-width="1.2"/><path d="M4.800 2 L2 8.300 L2.600 9.600 L6.300 3.200Z" fill="#cfdde9"/><path d="M7.500 3.200 L8.600 5.600 L4.900 10.400 L4 9.800Z" fill="#4e647c"/><path d="M6.500 7 L9.200 4.900 L13.300 5.500 L15 7.900 L14.500 11.200 L11.600 12.800 L7.800 12.200 L6.300 9.800Z" fill="#6f879f" stroke="#4a6078" stroke-width="1.1"/><path d="M6.900 7.300 L9.300 5.400 L13 6 L14.400 8 L11.600 9.600 L8 9.300Z" fill="#a9bccd"/><ellipse cx="10.600" cy="7.400" rx="2.300" ry="1.150" fill="#5d7083"/><path d="M7.200 9.200 L8.200 11.800" stroke="#dbe6ef" stroke-width="1.300"/><path d="M8.600 10.600 L11.500 11 L14 9.600" stroke="#90a8be" stroke-width=".9" fill="none"/></g></svg>
<div class="fldw" style="left:475.0px;top:942.0px;width:119.0px;height:18.0px;"></div>
<span class="n" style="left:475.6px;top:943px;">00028681</span>
<div class="btn3" style="left:596.0px;top:941.0px;width:20.0px;height:20.0px;"><div class="dots"></div></div>
<div class="fldw" style="left:618.0px;top:942.0px;width:168.0px;height:18.0px;"></div>
<div class="" style="left:619.0px;top:943.0px;width:166.0px;height:16.0px;overflow:hidden"><span class="n" style="left:.7px;top:0px">BALL BEARING SINGLE ROW, DEEP</span></div>
<div class="btn3" style="left:788.0px;top:941.0px;width:20.0px;height:20.0px;"><div class="dots"></div></div>
<div class="fld" style="left:810.0px;top:942.0px;width:178.0px;height:18.0px;"></div>
<span class="n" style="left:810.5px;top:943px;">770218 IMPA</span>
<div class="fldw" style="left:990.0px;top:942.0px;width:62.0px;height:18.0px;"></div>
<span class="n r" style="right:867.2px;top:943px;">0.00</span>
<div class="fld" style="left:1054.0px;top:942.0px;width:56.0px;height:18.0px;"></div>
<span class="n r" style="right:809.5px;top:943px;">0.00</span>
<div class="fldw" style="left:1112.0px;top:942.0px;width:103.0px;height:18.0px;"></div>
<div class="fldw" style="left:1217.0px;top:942.0px;width:103.0px;height:18.0px;"></div>
<div class="fldw" style="left:1322.0px;top:942.0px;width:109.0px;height:18.0px;"></div>
<div class="fld" style="left:1433.0px;top:942.0px;width:75.0px;height:18.0px;"></div>
<span class="n" style="left:1433.0px;top:943px;">Active</span>
<svg style="left:1514.0px;top:944.0px" width="15" height="15" viewBox="0 0 16 16"><g stroke-linejoin="round"><path d="M5.300 .8 L9.200 3 L8.600 5.600 L4.900 10.400 L1.900 10.600 L.7 8.200 L3.300 2.200Z" fill="#a9bdce" stroke="#51687f" stroke-width="1.2"/><path d="M4.800 2 L2 8.300 L2.600 9.600 L6.300 3.200Z" fill="#cfdde9"/><path d="M7.500 3.200 L8.600 5.600 L4.900 10.400 L4 9.800Z" fill="#4e647c"/><path d="M6.500 7 L9.200 4.900 L13.300 5.500 L15 7.900 L14.500 11.200 L11.600 12.800 L7.800 12.200 L6.300 9.800Z" fill="#6f879f" stroke="#4a6078" stroke-width="1.1"/><path d="M6.900 7.300 L9.300 5.400 L13 6 L14.400 8 L11.600 9.600 L8 9.300Z" fill="#a9bccd"/><ellipse cx="10.600" cy="7.400" rx="2.300" ry="1.150" fill="#5d7083"/><path d="M7.200 9.200 L8.200 11.800" stroke="#dbe6ef" stroke-width="1.300"/><path d="M8.600 10.600 L11.500 11 L14 9.600" stroke="#90a8be" stroke-width=".9" fill="none"/></g></svg>
<div class="fldw" style="left:475.0px;top:963.0px;width:119.0px;height:18.0px;"></div>
<span class="n" style="left:475.6px;top:964px;">00028682</span>
<div class="btn3" style="left:596.0px;top:962.0px;width:20.0px;height:20.0px;"><div class="dots"></div></div>
<div class="fldw" style="left:618.0px;top:963.0px;width:168.0px;height:18.0px;"></div>
<div class="" style="left:619.0px;top:964.0px;width:166.0px;height:16.0px;overflow:hidden"><span class="n" style="left:.7px;top:0px">BALL BEARING SINGLE ROW, DEEP</span></div>
<div class="btn3" style="left:788.0px;top:962.0px;width:20.0px;height:20.0px;"><div class="dots"></div></div>
<div class="fld" style="left:810.0px;top:963.0px;width:178.0px;height:18.0px;"></div>
<span class="n" style="left:810.5px;top:964px;">770220 IMPA</span>
<div class="fldw" style="left:990.0px;top:963.0px;width:62.0px;height:18.0px;"></div>
<span class="n r" style="right:867.2px;top:964px;">0.00</span>
<div class="fld" style="left:1054.0px;top:963.0px;width:56.0px;height:18.0px;"></div>
<span class="n r" style="right:809.5px;top:964px;">0.00</span>
<div class="fldw" style="left:1112.0px;top:963.0px;width:103.0px;height:18.0px;"></div>
<div class="fldw" style="left:1217.0px;top:963.0px;width:103.0px;height:18.0px;"></div>
<div class="fldw" style="left:1322.0px;top:963.0px;width:109.0px;height:18.0px;"></div>
<div class="fld" style="left:1433.0px;top:963.0px;width:75.0px;height:18.0px;"></div>
<span class="n" style="left:1433.0px;top:964px;">Active</span>
<svg style="left:1514.0px;top:965.0px" width="15" height="15" viewBox="0 0 16 16"><g stroke-linejoin="round"><path d="M5.300 .8 L9.200 3 L8.600 5.600 L4.900 10.400 L1.900 10.600 L.7 8.200 L3.300 2.200Z" fill="#a9bdce" stroke="#51687f" stroke-width="1.2"/><path d="M4.800 2 L2 8.300 L2.600 9.600 L6.300 3.200Z" fill="#cfdde9"/><path d="M7.500 3.200 L8.600 5.600 L4.900 10.400 L4 9.800Z" fill="#4e647c"/><path d="M6.500 7 L9.200 4.900 L13.300 5.500 L15 7.900 L14.500 11.200 L11.600 12.800 L7.800 12.200 L6.300 9.800Z" fill="#6f879f" stroke="#4a6078" stroke-width="1.1"/><path d="M6.900 7.300 L9.300 5.400 L13 6 L14.400 8 L11.600 9.600 L8 9.300Z" fill="#a9bccd"/><ellipse cx="10.600" cy="7.400" rx="2.300" ry="1.150" fill="#5d7083"/><path d="M7.200 9.200 L8.200 11.800" stroke="#dbe6ef" stroke-width="1.300"/><path d="M8.600 10.600 L11.500 11 L14 9.600" stroke="#90a8be" stroke-width=".9" fill="none"/></g></svg>
<div class="" style="left:1893.0px;top:314.5px;width:19.0px;height:674.0px;background:#f0f0f0;border-left:1px solid #fafafa"></div>
<div class="" style="left:1894.2px;top:332.0px;width:14.6px;height:42.0px;background:#cdcdcd"></div>
<svg style="left:1896px;top:320px" width="11" height="8" viewBox="0 0 11 8"><path d="M1.5 6.500 L5.500 2.500 L9.500 6.500" fill="none" stroke="#505050" stroke-width="1.8"/></svg>
<svg style="left:1896px;top:976px" width="11" height="8" viewBox="0 0 11 8"><path d="M1.5 1.5 L5.500 5.500 L9.500 1.5" fill="none" stroke="#505050" stroke-width="1.8"/></svg>
<div class="pbtn dis" style="left:456.3px;top:997.3px;width:105.6px;height:23.3px;"></div>
<svg style="left:460.5px;top:1002.0px" width="16" height="16" viewBox="0 0 16 16"><path d="M2.5 .8 H10 L13.5 4.3 V15.2 H2.5Z" fill="#fcfcfc" stroke="#b0b0b0" stroke-width=".8"/><circle cx="11.2" cy="3.6" r="2.3" fill="#e8e8e8" stroke="#c4c4c4" stroke-width=".6"/></svg>
<span class="n" style="left:498.4px;top:1003px;color:#a0a0a0"><u>N</u>ew</span>
<div class="pbtn dis" style="left:564.4px;top:997.3px;width:105.6px;height:23.3px;"></div>
<svg style="left:569.0px;top:1002.0px" width="16" height="16" viewBox="0 0 16 16"><path d="M3 3 L13 13 M13 3 L3 13" stroke="#1a1a1a" stroke-width="4" stroke-linecap="round"/><path d="M3.4 3.4 L12.6 12.6 M12.6 3.4 L3.4 12.6" stroke="#4a4a4a" stroke-width="1.6" stroke-linecap="round"/></svg>
<span class="n" style="left:601.5px;top:1003px;color:#a0a0a0"><u>D</u>elete</span>
<div class="pbtn" style="left:672.3px;top:997.3px;width:105.6px;height:23.3px;"></div>
<svg style="left:675.5px;top:1002.0px" width="16" height="16" viewBox="0 0 16 16"><g stroke-linejoin="round"><path d="M5.300 .8 L9.200 3 L8.600 5.600 L4.900 10.400 L1.900 10.600 L.7 8.200 L3.300 2.200Z" fill="#a9bdce" stroke="#51687f" stroke-width="1.2"/><path d="M4.800 2 L2 8.300 L2.600 9.600 L6.300 3.200Z" fill="#cfdde9"/><path d="M7.500 3.200 L8.600 5.600 L4.900 10.400 L4 9.800Z" fill="#4e647c"/><path d="M6.500 7 L9.200 4.900 L13.300 5.500 L15 7.900 L14.500 11.200 L11.600 12.800 L7.800 12.200 L6.300 9.800Z" fill="#6f879f" stroke="#4a6078" stroke-width="1.1"/><path d="M6.900 7.300 L9.300 5.400 L13 6 L14.400 8 L11.600 9.600 L8 9.300Z" fill="#a9bccd"/><ellipse cx="10.600" cy="7.400" rx="2.300" ry="1.150" fill="#5d7083"/><path d="M7.200 9.200 L8.200 11.800" stroke="#dbe6ef" stroke-width="1.300"/><path d="M8.600 10.600 L11.500 11 L14 9.600" stroke="#90a8be" stroke-width=".9" fill="none"/></g></svg>
<span class="n" style="left:712.5px;top:1003px;"><u>V</u>iew</span>
<div class="pbtn" style="left:780.3px;top:997.3px;width:105.6px;height:23.3px;"></div>
<svg style="left:783.5px;top:1002.0px" width="16" height="16" viewBox="0 0 16 16"><path d="M1.2 14.8 L7.5 8.5" stroke="#9a6a1e" stroke-width="2.4" stroke-linecap="round"/><path d="M1.6 14.4 L7 9" stroke="#e0b050" stroke-width="1" stroke-linecap="round"/><circle cx="10.5" cy="5.5" r="4.3" fill="#eef6fc" stroke="#5a6a7a" stroke-width="1.3"/><path d="M8 4.5 C8.5 3 10 2.5 11.5 2.8" stroke="#fff" stroke-width="1" fill="none"/></svg>
<span class="n" style="left:809.5px;top:1003px;"><u>A</u>dd. Info</span>
<div class="pbtn dis" style="left:888.2px;top:997.3px;width:105.6px;height:23.3px;"></div>
<span class="n" style="left:916.0px;top:1003px;color:#a0a0a0"><u>S</u>et Status</span>
<div class="pbtn" style="left:996.1px;top:997.3px;width:105.6px;height:23.3px;"></div>
<svg style="left:1000.0px;top:1002.0px" width="16" height="16" viewBox="0 0 16 16"><path d="M3.500 3.200 L11.500 2 L15.300 4.500 L7 7.600Z" fill="#f4ec9a" stroke="#a8a060" stroke-width=".5"/><path d="M.8 6.500 L4.500 4.600 L7 7.600 L15.400 4.800 L15.700 8.500 L9.500 13.800 L1 10Z" fill="#6e7780" stroke="#3e464e" stroke-width=".7" stroke-linejoin="round"/><path d="M.9 6.600 L7.200 9.300 L15.400 4.900" stroke="#c8d0d8" stroke-width=".8" fill="none"/><path d="M2 9.400 L8.600 12.400" stroke="#20262c" stroke-width="1.200"/></svg>
<span class="n" style="left:1025.5px;top:1003px;">Print Parts</span>
<div class="" style="left:84.0px;top:1031.0px;width:1836.0px;height:7.0px;background:#fafafa"></div>
<div class="" style="left:90.0px;top:1038.0px;width:1830.0px;height:24.0px;background:#ababab"></div>
<div class="" style="left:88.0px;top:1038.0px;width:2.0px;height:22.0px;background:#a8a8a8"></div>
<div class="" style="left:90.0px;top:1036.0px;width:89.5px;height:24.0px;background:#f0f0f0;box-shadow:1px 1.5px 0 #a0a0a0"></div>
<svg style="left:97.0px;top:1041.0px" width="14" height="14" viewBox="0 0 16 16"><rect x=".8" y=".8" width="14.4" height="14.4" fill="#fbfbfb" stroke="#8a8a96" stroke-width=".8"/><path d="M4.4 1V15M8 1V15M11.6 1V15M1 4.4H15M1 8H15M1 11.6H15" stroke="#c8c8d4" stroke-width=".6"/><path d="M1 15 L1 11.5 L5 9 L8 11 L15 5 L15 15Z" fill="#2f8ad8"/><path d="M1 11 L5 7 L8 9.5 L15 3 L15 6 L8 12 L5 9.8 L1 13Z" fill="#30c030" stroke="#0e7a0e" stroke-width=".4"/></svg>
<span class="n" style="left:113.8px;top:1041px;">Dashboard</span>
<div class="" style="left:180.0px;top:1034.5px;width:141.0px;height:27.5px;background:#fff"></div>
<svg style="left:186.5px;top:1041.5px" width="16" height="16" viewBox="0 0 16 16"><path d="M6 1.5 L9 .8 L10.5 2 L15.2 2 L14.6 12 L6.5 13Z" fill="url(#gFold)" stroke="#8e7436" stroke-width=".7"/><path d="M8 3 L15.5 2.6 L14.3 12.5 L7.5 13Z" fill="#e9cc80" stroke="#8e7436" stroke-width=".6"/><rect x=".7" y="5.2" width="9" height="10" fill="#f6f6fb" stroke="#5a5a78" stroke-width=".8"/><text x="2" y="13.3" font-family="Liberation Sans" font-size="7.5" fill="#55558a">fx</text></svg>
<span class="t" style="left:205.300px;top:1043px;font-weight:bold;transform:scaleX(.977)">Function Hierarchy</span>
<div class="" style="left:0.0px;top:1060.5px;width:90.0px;height:1.3px;background:#b4b4b4"></div>
<div class="" style="left:0.0px;top:1062.0px;width:1920.0px;height:2.0px;background:#fcfcfc"></div>
<div class="" style="left:0.0px;top:1064.0px;width:1920.0px;height:1.0px;background:#a0a0a0"></div>
<div class="" style="left:0.0px;top:1065.0px;width:1920.0px;height:13.0px;background:#f0f0f0"></div>
<span class="n" style="left:1.6px;top:1065px;">Ready</span>
<span class="n" style="left:1654.3px;top:1066px;">No of rows found:  0</span>
<span class="n" style="left:1864.0px;top:1066px;font-weight:bold;color:#0a8a0a">CBM</span>
<div class="" style="left:0.0px;top:1078.0px;width:1920.0px;height:2.0px;background:#141414"></div>
</body></html>
